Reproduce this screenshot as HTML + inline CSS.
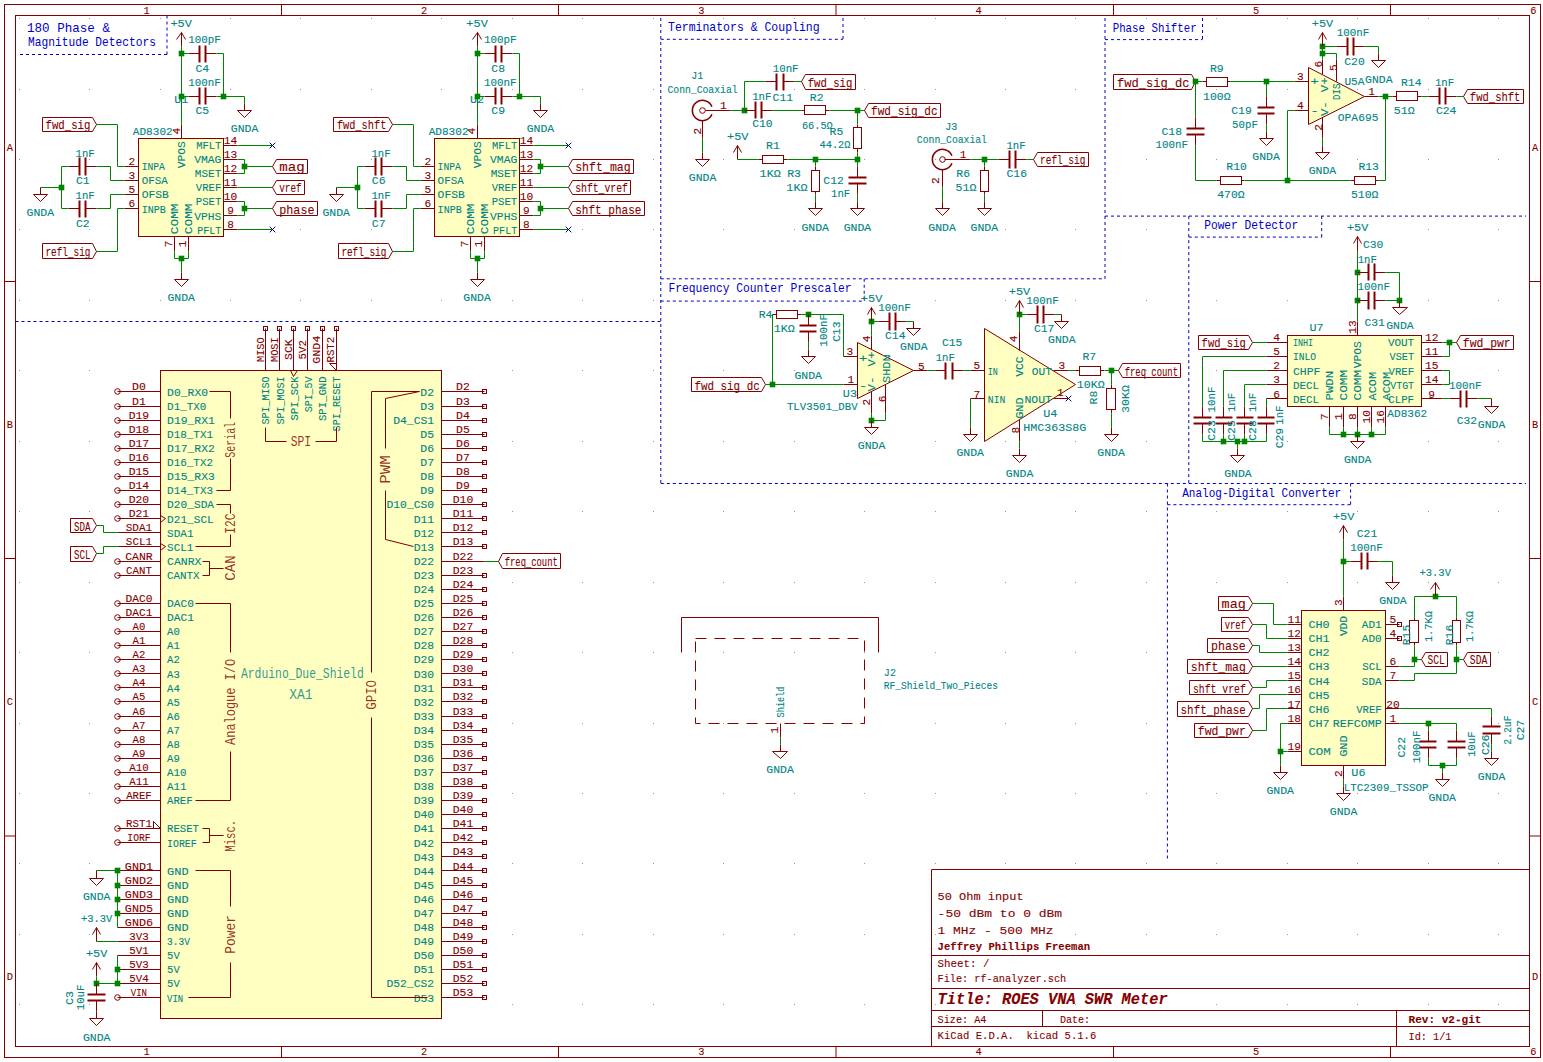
<!DOCTYPE html>
<html><head><meta charset="utf-8"><style>
html,body{margin:0;padding:0;background:#fff;overflow:hidden}
svg{display:block}
text{white-space:pre;font-family:"Liberation Mono";stroke-width:0.1px}
</style></head><body>
<svg width="1543" height="1062" viewBox="0 0 1543 1062">
<rect width="1543" height="1062" fill="#fff"/>
<path d="M19.0 18.0h1v1h-1zM19.0 89.0h1v1h-1zM19.0 159.0h1v1h-1zM19.0 229.0h1v1h-1zM19.0 300.0h1v1h-1zM19.0 370.0h1v1h-1zM19.0 441.0h1v1h-1zM19.0 511.0h1v1h-1zM19.0 582.0h1v1h-1zM19.0 652.0h1v1h-1zM19.0 723.0h1v1h-1zM19.0 793.0h1v1h-1zM19.0 863.0h1v1h-1zM19.0 934.0h1v1h-1zM19.0 1004.0h1v1h-1zM89.0 18.0h1v1h-1zM89.0 89.0h1v1h-1zM89.0 159.0h1v1h-1zM89.0 229.0h1v1h-1zM89.0 300.0h1v1h-1zM89.0 370.0h1v1h-1zM89.0 441.0h1v1h-1zM89.0 511.0h1v1h-1zM89.0 582.0h1v1h-1zM89.0 652.0h1v1h-1zM89.0 723.0h1v1h-1zM89.0 793.0h1v1h-1zM89.0 863.0h1v1h-1zM89.0 934.0h1v1h-1zM89.0 1004.0h1v1h-1zM160.0 18.0h1v1h-1zM160.0 89.0h1v1h-1zM160.0 159.0h1v1h-1zM160.0 229.0h1v1h-1zM160.0 300.0h1v1h-1zM160.0 370.0h1v1h-1zM160.0 441.0h1v1h-1zM160.0 511.0h1v1h-1zM160.0 582.0h1v1h-1zM160.0 652.0h1v1h-1zM160.0 723.0h1v1h-1zM160.0 793.0h1v1h-1zM160.0 863.0h1v1h-1zM160.0 934.0h1v1h-1zM160.0 1004.0h1v1h-1zM230.0 18.0h1v1h-1zM230.0 89.0h1v1h-1zM230.0 159.0h1v1h-1zM230.0 229.0h1v1h-1zM230.0 300.0h1v1h-1zM230.0 370.0h1v1h-1zM230.0 441.0h1v1h-1zM230.0 511.0h1v1h-1zM230.0 582.0h1v1h-1zM230.0 652.0h1v1h-1zM230.0 723.0h1v1h-1zM230.0 793.0h1v1h-1zM230.0 863.0h1v1h-1zM230.0 934.0h1v1h-1zM230.0 1004.0h1v1h-1zM300.0 18.0h1v1h-1zM300.0 89.0h1v1h-1zM300.0 159.0h1v1h-1zM300.0 229.0h1v1h-1zM300.0 300.0h1v1h-1zM300.0 370.0h1v1h-1zM300.0 441.0h1v1h-1zM300.0 511.0h1v1h-1zM300.0 582.0h1v1h-1zM300.0 652.0h1v1h-1zM300.0 723.0h1v1h-1zM300.0 793.0h1v1h-1zM300.0 863.0h1v1h-1zM300.0 934.0h1v1h-1zM300.0 1004.0h1v1h-1zM371.0 18.0h1v1h-1zM371.0 89.0h1v1h-1zM371.0 159.0h1v1h-1zM371.0 229.0h1v1h-1zM371.0 300.0h1v1h-1zM371.0 370.0h1v1h-1zM371.0 441.0h1v1h-1zM371.0 511.0h1v1h-1zM371.0 582.0h1v1h-1zM371.0 652.0h1v1h-1zM371.0 723.0h1v1h-1zM371.0 793.0h1v1h-1zM371.0 863.0h1v1h-1zM371.0 934.0h1v1h-1zM371.0 1004.0h1v1h-1zM441.0 18.0h1v1h-1zM441.0 89.0h1v1h-1zM441.0 159.0h1v1h-1zM441.0 229.0h1v1h-1zM441.0 300.0h1v1h-1zM441.0 370.0h1v1h-1zM441.0 441.0h1v1h-1zM441.0 511.0h1v1h-1zM441.0 582.0h1v1h-1zM441.0 652.0h1v1h-1zM441.0 723.0h1v1h-1zM441.0 793.0h1v1h-1zM441.0 863.0h1v1h-1zM441.0 934.0h1v1h-1zM441.0 1004.0h1v1h-1zM512.0 18.0h1v1h-1zM512.0 89.0h1v1h-1zM512.0 159.0h1v1h-1zM512.0 229.0h1v1h-1zM512.0 300.0h1v1h-1zM512.0 370.0h1v1h-1zM512.0 441.0h1v1h-1zM512.0 511.0h1v1h-1zM512.0 582.0h1v1h-1zM512.0 652.0h1v1h-1zM512.0 723.0h1v1h-1zM512.0 793.0h1v1h-1zM512.0 863.0h1v1h-1zM512.0 934.0h1v1h-1zM512.0 1004.0h1v1h-1zM582.0 18.0h1v1h-1zM582.0 89.0h1v1h-1zM582.0 159.0h1v1h-1zM582.0 229.0h1v1h-1zM582.0 300.0h1v1h-1zM582.0 370.0h1v1h-1zM582.0 441.0h1v1h-1zM582.0 511.0h1v1h-1zM582.0 582.0h1v1h-1zM582.0 652.0h1v1h-1zM582.0 723.0h1v1h-1zM582.0 793.0h1v1h-1zM582.0 863.0h1v1h-1zM582.0 934.0h1v1h-1zM582.0 1004.0h1v1h-1zM653.0 18.0h1v1h-1zM653.0 89.0h1v1h-1zM653.0 159.0h1v1h-1zM653.0 229.0h1v1h-1zM653.0 300.0h1v1h-1zM653.0 370.0h1v1h-1zM653.0 441.0h1v1h-1zM653.0 511.0h1v1h-1zM653.0 582.0h1v1h-1zM653.0 652.0h1v1h-1zM653.0 723.0h1v1h-1zM653.0 793.0h1v1h-1zM653.0 863.0h1v1h-1zM653.0 934.0h1v1h-1zM653.0 1004.0h1v1h-1zM723.0 18.0h1v1h-1zM723.0 89.0h1v1h-1zM723.0 159.0h1v1h-1zM723.0 229.0h1v1h-1zM723.0 300.0h1v1h-1zM723.0 370.0h1v1h-1zM723.0 441.0h1v1h-1zM723.0 511.0h1v1h-1zM723.0 582.0h1v1h-1zM723.0 652.0h1v1h-1zM723.0 723.0h1v1h-1zM723.0 793.0h1v1h-1zM723.0 863.0h1v1h-1zM723.0 934.0h1v1h-1zM723.0 1004.0h1v1h-1zM794.0 18.0h1v1h-1zM794.0 89.0h1v1h-1zM794.0 159.0h1v1h-1zM794.0 229.0h1v1h-1zM794.0 300.0h1v1h-1zM794.0 370.0h1v1h-1zM794.0 441.0h1v1h-1zM794.0 511.0h1v1h-1zM794.0 582.0h1v1h-1zM794.0 652.0h1v1h-1zM794.0 723.0h1v1h-1zM794.0 793.0h1v1h-1zM794.0 863.0h1v1h-1zM794.0 934.0h1v1h-1zM794.0 1004.0h1v1h-1zM864.0 18.0h1v1h-1zM864.0 89.0h1v1h-1zM864.0 159.0h1v1h-1zM864.0 229.0h1v1h-1zM864.0 300.0h1v1h-1zM864.0 370.0h1v1h-1zM864.0 441.0h1v1h-1zM864.0 511.0h1v1h-1zM864.0 582.0h1v1h-1zM864.0 652.0h1v1h-1zM864.0 723.0h1v1h-1zM864.0 793.0h1v1h-1zM864.0 863.0h1v1h-1zM864.0 934.0h1v1h-1zM864.0 1004.0h1v1h-1zM935.0 18.0h1v1h-1zM935.0 89.0h1v1h-1zM935.0 159.0h1v1h-1zM935.0 229.0h1v1h-1zM935.0 300.0h1v1h-1zM935.0 370.0h1v1h-1zM935.0 441.0h1v1h-1zM935.0 511.0h1v1h-1zM935.0 582.0h1v1h-1zM935.0 652.0h1v1h-1zM935.0 723.0h1v1h-1zM935.0 793.0h1v1h-1zM935.0 863.0h1v1h-1zM935.0 934.0h1v1h-1zM935.0 1004.0h1v1h-1zM1005.0 18.0h1v1h-1zM1005.0 89.0h1v1h-1zM1005.0 159.0h1v1h-1zM1005.0 229.0h1v1h-1zM1005.0 300.0h1v1h-1zM1005.0 370.0h1v1h-1zM1005.0 441.0h1v1h-1zM1005.0 511.0h1v1h-1zM1005.0 582.0h1v1h-1zM1005.0 652.0h1v1h-1zM1005.0 723.0h1v1h-1zM1005.0 793.0h1v1h-1zM1005.0 863.0h1v1h-1zM1005.0 934.0h1v1h-1zM1005.0 1004.0h1v1h-1zM1075.0 18.0h1v1h-1zM1075.0 89.0h1v1h-1zM1075.0 159.0h1v1h-1zM1075.0 229.0h1v1h-1zM1075.0 300.0h1v1h-1zM1075.0 370.0h1v1h-1zM1075.0 441.0h1v1h-1zM1075.0 511.0h1v1h-1zM1075.0 582.0h1v1h-1zM1075.0 652.0h1v1h-1zM1075.0 723.0h1v1h-1zM1075.0 793.0h1v1h-1zM1075.0 863.0h1v1h-1zM1075.0 934.0h1v1h-1zM1075.0 1004.0h1v1h-1zM1146.0 18.0h1v1h-1zM1146.0 89.0h1v1h-1zM1146.0 159.0h1v1h-1zM1146.0 229.0h1v1h-1zM1146.0 300.0h1v1h-1zM1146.0 370.0h1v1h-1zM1146.0 441.0h1v1h-1zM1146.0 511.0h1v1h-1zM1146.0 582.0h1v1h-1zM1146.0 652.0h1v1h-1zM1146.0 723.0h1v1h-1zM1146.0 793.0h1v1h-1zM1146.0 863.0h1v1h-1zM1146.0 934.0h1v1h-1zM1146.0 1004.0h1v1h-1zM1216.0 18.0h1v1h-1zM1216.0 89.0h1v1h-1zM1216.0 159.0h1v1h-1zM1216.0 229.0h1v1h-1zM1216.0 300.0h1v1h-1zM1216.0 370.0h1v1h-1zM1216.0 441.0h1v1h-1zM1216.0 511.0h1v1h-1zM1216.0 582.0h1v1h-1zM1216.0 652.0h1v1h-1zM1216.0 723.0h1v1h-1zM1216.0 793.0h1v1h-1zM1216.0 863.0h1v1h-1zM1216.0 934.0h1v1h-1zM1216.0 1004.0h1v1h-1zM1287.0 18.0h1v1h-1zM1287.0 89.0h1v1h-1zM1287.0 159.0h1v1h-1zM1287.0 229.0h1v1h-1zM1287.0 300.0h1v1h-1zM1287.0 370.0h1v1h-1zM1287.0 441.0h1v1h-1zM1287.0 511.0h1v1h-1zM1287.0 582.0h1v1h-1zM1287.0 652.0h1v1h-1zM1287.0 723.0h1v1h-1zM1287.0 793.0h1v1h-1zM1287.0 863.0h1v1h-1zM1287.0 934.0h1v1h-1zM1287.0 1004.0h1v1h-1zM1357.0 18.0h1v1h-1zM1357.0 89.0h1v1h-1zM1357.0 159.0h1v1h-1zM1357.0 229.0h1v1h-1zM1357.0 300.0h1v1h-1zM1357.0 370.0h1v1h-1zM1357.0 441.0h1v1h-1zM1357.0 511.0h1v1h-1zM1357.0 582.0h1v1h-1zM1357.0 652.0h1v1h-1zM1357.0 723.0h1v1h-1zM1357.0 793.0h1v1h-1zM1357.0 863.0h1v1h-1zM1357.0 934.0h1v1h-1zM1357.0 1004.0h1v1h-1zM1428.0 18.0h1v1h-1zM1428.0 89.0h1v1h-1zM1428.0 159.0h1v1h-1zM1428.0 229.0h1v1h-1zM1428.0 300.0h1v1h-1zM1428.0 370.0h1v1h-1zM1428.0 441.0h1v1h-1zM1428.0 511.0h1v1h-1zM1428.0 582.0h1v1h-1zM1428.0 652.0h1v1h-1zM1428.0 723.0h1v1h-1zM1428.0 793.0h1v1h-1zM1428.0 863.0h1v1h-1zM1428.0 934.0h1v1h-1zM1428.0 1004.0h1v1h-1zM1498.0 18.0h1v1h-1zM1498.0 89.0h1v1h-1zM1498.0 159.0h1v1h-1zM1498.0 229.0h1v1h-1zM1498.0 300.0h1v1h-1zM1498.0 370.0h1v1h-1zM1498.0 441.0h1v1h-1zM1498.0 511.0h1v1h-1zM1498.0 582.0h1v1h-1zM1498.0 652.0h1v1h-1zM1498.0 723.0h1v1h-1zM1498.0 793.0h1v1h-1zM1498.0 863.0h1v1h-1zM1498.0 934.0h1v1h-1zM1498.0 1004.0h1v1h-1z" fill="#999999"/>
<rect x="4.5" y="4.5" width="1536" height="1053" fill="none" stroke="#840000" stroke-width="1"/>
<rect x="15.5" y="15.5" width="1514" height="1031" fill="none" stroke="#840000" stroke-width="1"/>
<line x1="281.5" y1="4.5" x2="281.5" y2="15.5" stroke="#840000" stroke-width="1.0"/>
<line x1="281.5" y1="1046.5" x2="281.5" y2="1057.5" stroke="#840000" stroke-width="1.0"/>
<line x1="558.5" y1="4.5" x2="558.5" y2="15.5" stroke="#840000" stroke-width="1.0"/>
<line x1="558.5" y1="1046.5" x2="558.5" y2="1057.5" stroke="#840000" stroke-width="1.0"/>
<line x1="836" y1="4.5" x2="836" y2="15.5" stroke="#840000" stroke-width="1.0"/>
<line x1="836" y1="1046.5" x2="836" y2="1057.5" stroke="#840000" stroke-width="1.0"/>
<line x1="1113.5" y1="4.5" x2="1113.5" y2="15.5" stroke="#840000" stroke-width="1.0"/>
<line x1="1113.5" y1="1046.5" x2="1113.5" y2="1057.5" stroke="#840000" stroke-width="1.0"/>
<line x1="1390.5" y1="4.5" x2="1390.5" y2="15.5" stroke="#840000" stroke-width="1.0"/>
<line x1="1390.5" y1="1046.5" x2="1390.5" y2="1057.5" stroke="#840000" stroke-width="1.0"/>
<line x1="4.5" y1="281.5" x2="15.5" y2="281.5" stroke="#840000" stroke-width="1.0"/>
<line x1="1529.5" y1="281.5" x2="1540.5" y2="281.5" stroke="#840000" stroke-width="1.0"/>
<line x1="4.5" y1="558.5" x2="15.5" y2="558.5" stroke="#840000" stroke-width="1.0"/>
<line x1="1529.5" y1="558.5" x2="1540.5" y2="558.5" stroke="#840000" stroke-width="1.0"/>
<line x1="4.5" y1="836" x2="15.5" y2="836" stroke="#840000" stroke-width="1.0"/>
<line x1="1529.5" y1="836" x2="1540.5" y2="836" stroke="#840000" stroke-width="1.0"/>
<text transform="translate(146.7 13.6) scale(0.9 1)" fill="#840000" stroke="#840000" font-size="11.5" text-anchor="middle">1</text>
<text transform="translate(146.7 1055.2) scale(0.9 1)" fill="#840000" stroke="#840000" font-size="11.5" text-anchor="middle">1</text>
<text transform="translate(424 13.6) scale(0.9 1)" fill="#840000" stroke="#840000" font-size="11.5" text-anchor="middle">2</text>
<text transform="translate(424 1055.2) scale(0.9 1)" fill="#840000" stroke="#840000" font-size="11.5" text-anchor="middle">2</text>
<text transform="translate(701.4 13.6) scale(0.9 1)" fill="#840000" stroke="#840000" font-size="11.5" text-anchor="middle">3</text>
<text transform="translate(701.4 1055.2) scale(0.9 1)" fill="#840000" stroke="#840000" font-size="11.5" text-anchor="middle">3</text>
<text transform="translate(978.7 13.6) scale(0.9 1)" fill="#840000" stroke="#840000" font-size="11.5" text-anchor="middle">4</text>
<text transform="translate(978.7 1055.2) scale(0.9 1)" fill="#840000" stroke="#840000" font-size="11.5" text-anchor="middle">4</text>
<text transform="translate(1256 13.6) scale(0.9 1)" fill="#840000" stroke="#840000" font-size="11.5" text-anchor="middle">5</text>
<text transform="translate(1256 1055.2) scale(0.9 1)" fill="#840000" stroke="#840000" font-size="11.5" text-anchor="middle">5</text>
<text transform="translate(1533.4 13.6) scale(0.9 1)" fill="#840000" stroke="#840000" font-size="11.5" text-anchor="middle">6</text>
<text transform="translate(1533.4 1055.2) scale(0.9 1)" fill="#840000" stroke="#840000" font-size="11.5" text-anchor="middle">6</text>
<text transform="translate(9.8 150.7) scale(0.9 1)" fill="#840000" stroke="#840000" font-size="11.5" text-anchor="middle">A</text>
<text transform="translate(1535 150.7) scale(0.9 1)" fill="#840000" stroke="#840000" font-size="11.5" text-anchor="middle">A</text>
<text transform="translate(9.8 428) scale(0.9 1)" fill="#840000" stroke="#840000" font-size="11.5" text-anchor="middle">B</text>
<text transform="translate(1535 428) scale(0.9 1)" fill="#840000" stroke="#840000" font-size="11.5" text-anchor="middle">B</text>
<text transform="translate(9.8 705.4) scale(0.9 1)" fill="#840000" stroke="#840000" font-size="11.5" text-anchor="middle">C</text>
<text transform="translate(1535 705.4) scale(0.9 1)" fill="#840000" stroke="#840000" font-size="11.5" text-anchor="middle">C</text>
<text transform="translate(9.8 980) scale(0.9 1)" fill="#840000" stroke="#840000" font-size="11.5" text-anchor="middle">D</text>
<text transform="translate(1535 980) scale(0.9 1)" fill="#840000" stroke="#840000" font-size="11.5" text-anchor="middle">D</text>
<line x1="20" y1="54.5" x2="167" y2="54.5" stroke="#0000c8" stroke-width="1" stroke-dasharray="3 3"/>
<line x1="167" y1="15.5" x2="167" y2="54.5" stroke="#0000c8" stroke-width="1" stroke-dasharray="3 3"/>
<line x1="15.5" y1="321.5" x2="660.8" y2="321.5" stroke="#0000c8" stroke-width="1" stroke-dasharray="3 3"/>
<line x1="660.8" y1="18" x2="660.8" y2="483.5" stroke="#0000c8" stroke-width="1" stroke-dasharray="3 3"/>
<line x1="660.8" y1="39.3" x2="843" y2="39.3" stroke="#0000c8" stroke-width="1" stroke-dasharray="3 3"/>
<line x1="843" y1="18" x2="843" y2="39.3" stroke="#0000c8" stroke-width="1" stroke-dasharray="3 3"/>
<line x1="1105" y1="18" x2="1105" y2="278.8" stroke="#0000c8" stroke-width="1" stroke-dasharray="3 3"/>
<line x1="660.8" y1="278.8" x2="1105" y2="278.8" stroke="#0000c8" stroke-width="1" stroke-dasharray="3 3"/>
<line x1="660.8" y1="301.1" x2="864.2" y2="301.1" stroke="#0000c8" stroke-width="1" stroke-dasharray="3 3"/>
<line x1="864.2" y1="278.8" x2="864.2" y2="301.1" stroke="#0000c8" stroke-width="1" stroke-dasharray="3 3"/>
<line x1="1105" y1="39.6" x2="1202.5" y2="39.6" stroke="#0000c8" stroke-width="1" stroke-dasharray="3 3"/>
<line x1="1202.5" y1="18" x2="1202.5" y2="39.6" stroke="#0000c8" stroke-width="1" stroke-dasharray="3 3"/>
<line x1="1105" y1="216.1" x2="1526" y2="216.1" stroke="#0000c8" stroke-width="1" stroke-dasharray="3 3"/>
<line x1="1188.8" y1="237.1" x2="1321.7" y2="237.1" stroke="#0000c8" stroke-width="1" stroke-dasharray="3 3"/>
<line x1="1321.7" y1="216.1" x2="1321.7" y2="237.1" stroke="#0000c8" stroke-width="1" stroke-dasharray="3 3"/>
<line x1="1188.8" y1="216.1" x2="1188.8" y2="483.5" stroke="#0000c8" stroke-width="1" stroke-dasharray="3 3"/>
<line x1="660.8" y1="483.5" x2="1526" y2="483.5" stroke="#0000c8" stroke-width="1" stroke-dasharray="3 3"/>
<line x1="1167.4" y1="483.5" x2="1167.4" y2="861.6" stroke="#0000c8" stroke-width="1" stroke-dasharray="3 3"/>
<line x1="1167.4" y1="504.7" x2="1350.6" y2="504.7" stroke="#0000c8" stroke-width="1" stroke-dasharray="3 3"/>
<line x1="1350.6" y1="483.5" x2="1350.6" y2="504.7" stroke="#0000c8" stroke-width="1" stroke-dasharray="3 3"/>
<text transform="translate(27 32)" fill="#0000c8" font-size="13.0" textLength="83" lengthAdjust="spacingAndGlyphs">180 Phase &amp;</text>
<text transform="translate(28 45.6)" fill="#0000c8" font-size="13.0" textLength="128" lengthAdjust="spacingAndGlyphs">Magnitude Detectors</text>
<text transform="translate(668 31.2)" fill="#0000c8" font-size="13.0" textLength="151.6" lengthAdjust="spacingAndGlyphs">Terminators &amp; Coupling</text>
<text transform="translate(1112.7 31.9)" fill="#0000c8" font-size="13.0" textLength="84" lengthAdjust="spacingAndGlyphs">Phase Shifter</text>
<text transform="translate(668.5 291.5)" fill="#0000c8" font-size="13.0" textLength="183" lengthAdjust="spacingAndGlyphs">Frequency Counter Prescaler</text>
<text transform="translate(1204.2 229.2)" fill="#0000c8" font-size="13.0" textLength="94" lengthAdjust="spacingAndGlyphs">Power Detector</text>
<text transform="translate(1182.2 497.3)" fill="#0000c8" font-size="13.0" textLength="159" lengthAdjust="spacingAndGlyphs">Analog-Digital Converter</text>
<rect x="138.5" y="138.5" width="85.0" height="98.0" fill="#ffffc2" stroke="#840000" stroke-width="1.0"/>
<line x1="124.5" y1="166.5" x2="138.5" y2="166.5" stroke="#840000" stroke-width="1.0"/>
<text transform="translate(131.87 165.05)" fill="#840000" stroke="#840000" font-size="11.44" text-anchor="middle" textLength="6.71" lengthAdjust="spacingAndGlyphs">2</text>
<text transform="translate(141.73 170.26)" fill="#008484" stroke="#008484" font-size="11.44" textLength="23.15" lengthAdjust="spacingAndGlyphs">INPA</text>
<line x1="124.5" y1="180.5" x2="138.5" y2="180.5" stroke="#840000" stroke-width="1.0"/>
<text transform="translate(131.87 179.14)" fill="#840000" stroke="#840000" font-size="11.44" text-anchor="middle" textLength="6.71" lengthAdjust="spacingAndGlyphs">3</text>
<text transform="translate(141.73 184.35)" fill="#008484" stroke="#008484" font-size="11.44" textLength="26.17" lengthAdjust="spacingAndGlyphs">OFSA</text>
<line x1="124.5" y1="194.5" x2="138.5" y2="194.5" stroke="#840000" stroke-width="1.0"/>
<text transform="translate(131.87 193.23)" fill="#840000" stroke="#840000" font-size="11.44" text-anchor="middle" textLength="6.71" lengthAdjust="spacingAndGlyphs">5</text>
<text transform="translate(141.73 198.44)" fill="#008484" stroke="#008484" font-size="11.44" textLength="27.17" lengthAdjust="spacingAndGlyphs">OFSB</text>
<line x1="124.5" y1="208.5" x2="138.5" y2="208.5" stroke="#840000" stroke-width="1.0"/>
<text transform="translate(131.87 207.32)" fill="#840000" stroke="#840000" font-size="11.44" text-anchor="middle" textLength="6.71" lengthAdjust="spacingAndGlyphs">6</text>
<text transform="translate(141.73 212.53)" fill="#008484" stroke="#008484" font-size="11.44" textLength="24.15" lengthAdjust="spacingAndGlyphs">INPB</text>
<line x1="223.5" y1="145.5" x2="237.5" y2="145.5" stroke="#840000" stroke-width="1.0"/>
<text transform="translate(230.5 143.92)" fill="#840000" stroke="#840000" font-size="11.44" text-anchor="middle" textLength="13.42" lengthAdjust="spacingAndGlyphs">14</text>
<text transform="translate(221.34 149.13)" fill="#008484" stroke="#008484" font-size="11.44" text-anchor="end" textLength="25.16" lengthAdjust="spacingAndGlyphs">MFLT</text>
<line x1="223.5" y1="159.5" x2="237.5" y2="159.5" stroke="#840000" stroke-width="1.0"/>
<text transform="translate(230.5 158.01)" fill="#840000" stroke="#840000" font-size="11.44" text-anchor="middle" textLength="13.42" lengthAdjust="spacingAndGlyphs">13</text>
<text transform="translate(221.34 163.22)" fill="#008484" stroke="#008484" font-size="11.44" text-anchor="end" textLength="27.17" lengthAdjust="spacingAndGlyphs">VMAG</text>
<line x1="223.5" y1="173.5" x2="237.5" y2="173.5" stroke="#840000" stroke-width="1.0"/>
<text transform="translate(230.5 172.1)" fill="#840000" stroke="#840000" font-size="11.44" text-anchor="middle" textLength="13.42" lengthAdjust="spacingAndGlyphs">12</text>
<text transform="translate(221.34 177.31)" fill="#008484" stroke="#008484" font-size="11.44" text-anchor="end" textLength="26.5" lengthAdjust="spacingAndGlyphs">MSET</text>
<line x1="223.5" y1="187.5" x2="237.5" y2="187.5" stroke="#840000" stroke-width="1.0"/>
<text transform="translate(230.5 186.19)" fill="#840000" stroke="#840000" font-size="11.44" text-anchor="middle" textLength="13.42" lengthAdjust="spacingAndGlyphs">11</text>
<text transform="translate(221.34 191.4)" fill="#008484" stroke="#008484" font-size="11.44" text-anchor="end" textLength="25.5" lengthAdjust="spacingAndGlyphs">VREF</text>
<line x1="223.5" y1="201.5" x2="237.5" y2="201.5" stroke="#840000" stroke-width="1.0"/>
<text transform="translate(230.5 200.28)" fill="#840000" stroke="#840000" font-size="11.44" text-anchor="middle" textLength="13.42" lengthAdjust="spacingAndGlyphs">10</text>
<text transform="translate(221.34 205.49)" fill="#008484" stroke="#008484" font-size="11.44" text-anchor="end" textLength="25.5" lengthAdjust="spacingAndGlyphs">PSET</text>
<line x1="223.5" y1="215.5" x2="237.5" y2="215.5" stroke="#840000" stroke-width="1.0"/>
<text transform="translate(230.5 214.37)" fill="#840000" stroke="#840000" font-size="11.44" text-anchor="middle" textLength="6.71" lengthAdjust="spacingAndGlyphs">9</text>
<text transform="translate(221.34 219.58)" fill="#008484" stroke="#008484" font-size="11.44" text-anchor="end" textLength="27.17" lengthAdjust="spacingAndGlyphs">VPHS</text>
<line x1="223.5" y1="229.5" x2="237.5" y2="229.5" stroke="#840000" stroke-width="1.0"/>
<text transform="translate(230.5 228.46)" fill="#840000" stroke="#840000" font-size="11.44" text-anchor="middle" textLength="6.71" lengthAdjust="spacingAndGlyphs">8</text>
<text transform="translate(221.34 233.67)" fill="#008484" stroke="#008484" font-size="11.44" text-anchor="end" textLength="24.15" lengthAdjust="spacingAndGlyphs">PFLT</text>
<line x1="181.5" y1="124.5" x2="181.5" y2="138.5" stroke="#840000" stroke-width="1.0"/>
<text transform="translate(184.95 141.13) rotate(-90)" fill="#008484" stroke="#008484" font-size="11.44" text-anchor="end" textLength="27.17" lengthAdjust="spacingAndGlyphs">VPOS</text>
<text transform="translate(179.6 131.27) rotate(-90)" fill="#840000" stroke="#840000" font-size="11.44" text-anchor="middle" textLength="6.71" lengthAdjust="spacingAndGlyphs">4</text>
<line x1="174.5" y1="236.5" x2="174.5" y2="251.5" stroke="#840000" stroke-width="1.0"/>
<text transform="translate(177.91 234.13) rotate(-90)" fill="#008484" stroke="#008484" font-size="11.44" textLength="30.53" lengthAdjust="spacingAndGlyphs">COMM</text>
<text transform="translate(172.27 243.99) rotate(-90)" fill="#840000" stroke="#840000" font-size="11.44" text-anchor="middle" textLength="6.71" lengthAdjust="spacingAndGlyphs">7</text>
<line x1="188.5" y1="236.5" x2="188.5" y2="251.5" stroke="#840000" stroke-width="1.0"/>
<text transform="translate(192.0 234.13) rotate(-90)" fill="#008484" stroke="#008484" font-size="11.44" textLength="30.53" lengthAdjust="spacingAndGlyphs">COMM</text>
<text transform="translate(186.36 243.99) rotate(-90)" fill="#840000" stroke="#840000" font-size="11.44" text-anchor="middle" textLength="6.71" lengthAdjust="spacingAndGlyphs">1</text>
<text transform="translate(152.72 134.62)" fill="#008484" stroke="#008484" font-size="11.44" text-anchor="middle" textLength="39.92" lengthAdjust="spacingAndGlyphs">AD8302</text>
<text transform="translate(181.18 103.2)" fill="#008484" stroke="#008484" font-size="11.44" text-anchor="middle" textLength="14.09" lengthAdjust="spacingAndGlyphs">U1</text>
<polyline points="96.5,124.5 117.5,124.5 117.5,166.5 124.5,166.5" stroke="#008400" stroke-width="1.0" fill="none"/>
<polyline points="124.5,180.5 110.5,180.5 110.5,166.5 96.5,166.5" stroke="#008400" stroke-width="1.0" fill="none"/>
<line x1="68.5" y1="166.5" x2="79.5" y2="166.5" stroke="#840000" stroke-width="1.0"/>
<line x1="85.5" y1="166.5" x2="96.5" y2="166.5" stroke="#840000" stroke-width="1.0"/>
<line x1="79.5" y1="157.5" x2="79.5" y2="175.5" stroke="#840000" stroke-width="2.0"/>
<line x1="85.5" y1="157.5" x2="85.5" y2="175.5" stroke="#840000" stroke-width="2.0"/>
<text transform="translate(85.09 156.74)" fill="#008484" stroke="#008484" font-size="11.44" text-anchor="middle" textLength="19.12" lengthAdjust="spacingAndGlyphs">1nF</text>
<text transform="translate(82.84 184.49)" fill="#008484" stroke="#008484" font-size="11.44" text-anchor="middle" textLength="13.75" lengthAdjust="spacingAndGlyphs">C1</text>
<line x1="68.5" y1="208.5" x2="79.5" y2="208.5" stroke="#840000" stroke-width="1.0"/>
<line x1="85.5" y1="208.5" x2="96.5" y2="208.5" stroke="#840000" stroke-width="1.0"/>
<line x1="79.5" y1="200.5" x2="79.5" y2="217.5" stroke="#840000" stroke-width="2.0"/>
<line x1="85.5" y1="200.5" x2="85.5" y2="217.5" stroke="#840000" stroke-width="2.0"/>
<text transform="translate(85.09 199.01)" fill="#008484" stroke="#008484" font-size="11.44" text-anchor="middle" textLength="19.12" lengthAdjust="spacingAndGlyphs">1nF</text>
<text transform="translate(82.84 226.76)" fill="#008484" stroke="#008484" font-size="11.44" text-anchor="middle" textLength="13.75" lengthAdjust="spacingAndGlyphs">C2</text>
<polyline points="68.5,166.5 61.5,166.5 61.5,208.5 68.5,208.5" stroke="#008400" stroke-width="1.0" fill="none"/>
<rect x="58.7" y="184.7" width="5.6" height="5.6" fill="#008400"/>
<polyline points="61.5,187.5 40.5,187.5" stroke="#008400" stroke-width="1.0" fill="none"/>
<line x1="40.5" y1="187.5" x2="40.5" y2="194.5" stroke="#840000" stroke-width="1.0"/>
<polygon points="33.5,194.5 47.5,194.5 40.5,201.5" stroke="#840000" stroke-width="1.0" fill="none"/>
<text transform="translate(40.28 216.48)" fill="#008484" stroke="#008484" font-size="11.44" text-anchor="middle" textLength="27.51" lengthAdjust="spacingAndGlyphs">GNDA</text>
<polyline points="96.5,208.5 110.5,208.5 110.5,194.5 124.5,194.5" stroke="#008400" stroke-width="1.0" fill="none"/>
<polyline points="124.5,208.5 117.5,208.5 117.5,251.5 96.5,251.5" stroke="#008400" stroke-width="1.0" fill="none"/>
<polygon points="96.5,124.5 92.5,117.5 42.5,117.5 42.5,131.5 92.5,131.5" stroke="#840000" stroke-width="1.0" fill="none"/>
<text transform="translate(45.5 129.02)" fill="#840000" stroke="#840000" font-size="12.4" textLength="44.95" lengthAdjust="spacingAndGlyphs">fwd_sig</text>
<polygon points="96.5,251.5 92.5,243.5 42.5,243.5 42.5,258.5 92.5,258.5" stroke="#840000" stroke-width="1.0" fill="none"/>
<text transform="translate(45.5 255.83)" fill="#840000" stroke="#840000" font-size="12.4" textLength="44.95" lengthAdjust="spacingAndGlyphs">refl_sig</text>
<polyline points="237.5,145.5 272.5,145.5" stroke="#008400" stroke-width="1.0" fill="none"/>
<path d="M269.68,142.68L275.32,148.32M275.32,142.68L269.68,148.32" stroke="#000084" stroke-width="1"/>
<polyline points="237.5,159.5 244.5,159.5 244.5,173.5 237.5,173.5" stroke="#008400" stroke-width="1.0" fill="none"/>
<rect x="241.7" y="163.7" width="5.6" height="5.6" fill="#008400"/>
<polyline points="244.5,166.5 272.5,166.5" stroke="#008400" stroke-width="1.0" fill="none"/>
<polygon points="272.5,166.5 276.5,159.5 307.5,159.5 307.5,173.5 276.5,173.5" stroke="#840000" stroke-width="1.0" fill="none"/>
<text transform="translate(279.25 171.29)" fill="#840000" stroke="#840000" font-size="12.4" textLength="25.5" lengthAdjust="spacingAndGlyphs">mag</text>
<polyline points="237.5,187.5 272.5,187.5" stroke="#008400" stroke-width="1.0" fill="none"/>
<polygon points="272.5,187.5 276.5,180.5 304.5,180.5 304.5,194.5 276.5,194.5" stroke="#840000" stroke-width="1.0" fill="none"/>
<text transform="translate(279.25 192.42)" fill="#840000" stroke="#840000" font-size="12.4" textLength="22.4" lengthAdjust="spacingAndGlyphs">vref</text>
<polyline points="237.5,201.5 244.5,201.5 244.5,215.5 237.5,215.5" stroke="#008400" stroke-width="1.0" fill="none"/>
<rect x="241.7" y="205.7" width="5.6" height="5.6" fill="#008400"/>
<polyline points="244.5,208.5 272.5,208.5" stroke="#008400" stroke-width="1.0" fill="none"/>
<polygon points="272.5,208.5 276.5,201.5 317.5,201.5 317.5,215.5 276.5,215.5" stroke="#840000" stroke-width="1.0" fill="none"/>
<text transform="translate(279.25 213.56)" fill="#840000" stroke="#840000" font-size="12.4" textLength="35.23" lengthAdjust="spacingAndGlyphs">phase</text>
<polyline points="237.5,229.5 272.5,229.5" stroke="#008400" stroke-width="1.0" fill="none"/>
<path d="M269.68,226.68L275.32,232.32M275.32,226.68L269.68,232.32" stroke="#000084" stroke-width="1"/>
<polyline points="174.5,251.5 174.5,258.5 188.5,258.5 188.5,251.5" stroke="#008400" stroke-width="1.0" fill="none"/>
<rect x="178.7" y="255.7" width="5.6" height="5.6" fill="#008400"/>
<polyline points="181.5,258.5 181.5,272.5" stroke="#008400" stroke-width="1.0" fill="none"/>
<line x1="181.5" y1="272.5" x2="181.5" y2="279.5" stroke="#840000" stroke-width="1.0"/>
<polygon points="174.5,279.5 188.5,279.5 181.5,286.5" stroke="#840000" stroke-width="1.0" fill="none"/>
<text transform="translate(181.18 301.02)" fill="#008484" stroke="#008484" font-size="11.44" text-anchor="middle" textLength="27.51" lengthAdjust="spacingAndGlyphs">GNDA</text>
<polyline points="181.5,124.5 181.5,46.5" stroke="#008400" stroke-width="1.0" fill="none"/>
<line x1="181.5" y1="46.5" x2="181.5" y2="32.5" stroke="#840000" stroke-width="1.0"/>
<polyline points="176.5,39.5 181.5,32.5 185.5,39.5" stroke="#840000" stroke-width="1.0" fill="none"/>
<text transform="translate(181.18 26.83)" fill="#008484" stroke="#008484" font-size="11.44" text-anchor="middle" textLength="21.47" lengthAdjust="spacingAndGlyphs">+5V</text>
<rect x="178.7" y="50.7" width="5.6" height="5.6" fill="#008400"/>
<rect x="178.7" y="93.7" width="5.6" height="5.6" fill="#008400"/>
<polyline points="181.5,53.5 188.5,53.5" stroke="#008400" stroke-width="1.0" fill="none"/>
<line x1="188.5" y1="53.5" x2="199.5" y2="53.5" stroke="#840000" stroke-width="1.0"/>
<line x1="205.5" y1="53.5" x2="216.5" y2="53.5" stroke="#840000" stroke-width="1.0"/>
<line x1="199.5" y1="45.5" x2="199.5" y2="62.5" stroke="#840000" stroke-width="2.0"/>
<line x1="205.5" y1="45.5" x2="205.5" y2="62.5" stroke="#840000" stroke-width="2.0"/>
<text transform="translate(204.43 43.45)" fill="#008484" stroke="#008484" font-size="11.44" text-anchor="middle" textLength="32.54" lengthAdjust="spacingAndGlyphs">100pF</text>
<text transform="translate(202.32 71.92)" fill="#008484" stroke="#008484" font-size="11.44" text-anchor="middle" textLength="13.75" lengthAdjust="spacingAndGlyphs">C4</text>
<polyline points="181.5,96.5 188.5,96.5" stroke="#008400" stroke-width="1.0" fill="none"/>
<line x1="188.5" y1="96.5" x2="199.5" y2="96.5" stroke="#840000" stroke-width="1.0"/>
<line x1="205.5" y1="96.5" x2="216.5" y2="96.5" stroke="#840000" stroke-width="1.0"/>
<line x1="199.5" y1="87.5" x2="199.5" y2="104.5" stroke="#840000" stroke-width="2.0"/>
<line x1="205.5" y1="87.5" x2="205.5" y2="104.5" stroke="#840000" stroke-width="2.0"/>
<text transform="translate(204.43 85.72)" fill="#008484" stroke="#008484" font-size="11.44" text-anchor="middle" textLength="32.54" lengthAdjust="spacingAndGlyphs">100nF</text>
<text transform="translate(202.32 113.9)" fill="#008484" stroke="#008484" font-size="11.44" text-anchor="middle" textLength="13.75" lengthAdjust="spacingAndGlyphs">C5</text>
<polyline points="216.5,53.5 223.5,53.5 223.5,96.5" stroke="#008400" stroke-width="1.0" fill="none"/>
<rect x="220.7" y="93.7" width="5.6" height="5.6" fill="#008400"/>
<polyline points="216.5,96.5 244.5,96.5 244.5,103.5" stroke="#008400" stroke-width="1.0" fill="none"/>
<line x1="244.5" y1="103.5" x2="244.5" y2="110.5" stroke="#840000" stroke-width="1.0"/>
<polygon points="237.5,110.5 251.5,110.5 244.5,117.5" stroke="#840000" stroke-width="1.0" fill="none"/>
<text transform="translate(244.59 131.94)" fill="#008484" stroke="#008484" font-size="11.44" text-anchor="middle" textLength="27.51" lengthAdjust="spacingAndGlyphs">GNDA</text>
<rect x="434.5" y="138.5" width="85.0" height="98.0" fill="#ffffc2" stroke="#840000" stroke-width="1.0"/>
<line x1="420.5" y1="166.5" x2="434.5" y2="166.5" stroke="#840000" stroke-width="1.0"/>
<text transform="translate(427.76 165.05)" fill="#840000" stroke="#840000" font-size="11.44" text-anchor="middle" textLength="6.71" lengthAdjust="spacingAndGlyphs">2</text>
<text transform="translate(437.62 170.26)" fill="#008484" stroke="#008484" font-size="11.44" textLength="23.15" lengthAdjust="spacingAndGlyphs">INPA</text>
<line x1="420.5" y1="180.5" x2="434.5" y2="180.5" stroke="#840000" stroke-width="1.0"/>
<text transform="translate(427.76 179.14)" fill="#840000" stroke="#840000" font-size="11.44" text-anchor="middle" textLength="6.71" lengthAdjust="spacingAndGlyphs">3</text>
<text transform="translate(437.62 184.35)" fill="#008484" stroke="#008484" font-size="11.44" textLength="26.17" lengthAdjust="spacingAndGlyphs">OFSA</text>
<line x1="420.5" y1="194.5" x2="434.5" y2="194.5" stroke="#840000" stroke-width="1.0"/>
<text transform="translate(427.76 193.23)" fill="#840000" stroke="#840000" font-size="11.44" text-anchor="middle" textLength="6.71" lengthAdjust="spacingAndGlyphs">5</text>
<text transform="translate(437.62 198.44)" fill="#008484" stroke="#008484" font-size="11.44" textLength="27.17" lengthAdjust="spacingAndGlyphs">OFSB</text>
<line x1="420.5" y1="208.5" x2="434.5" y2="208.5" stroke="#840000" stroke-width="1.0"/>
<text transform="translate(427.76 207.32)" fill="#840000" stroke="#840000" font-size="11.44" text-anchor="middle" textLength="6.71" lengthAdjust="spacingAndGlyphs">6</text>
<text transform="translate(437.62 212.53)" fill="#008484" stroke="#008484" font-size="11.44" textLength="24.15" lengthAdjust="spacingAndGlyphs">INPB</text>
<line x1="519.5" y1="145.5" x2="533.5" y2="145.5" stroke="#840000" stroke-width="1.0"/>
<text transform="translate(526.39 143.92)" fill="#840000" stroke="#840000" font-size="11.44" text-anchor="middle" textLength="13.42" lengthAdjust="spacingAndGlyphs">14</text>
<text transform="translate(517.23 149.13)" fill="#008484" stroke="#008484" font-size="11.44" text-anchor="end" textLength="25.16" lengthAdjust="spacingAndGlyphs">MFLT</text>
<line x1="519.5" y1="159.5" x2="533.5" y2="159.5" stroke="#840000" stroke-width="1.0"/>
<text transform="translate(526.39 158.01)" fill="#840000" stroke="#840000" font-size="11.44" text-anchor="middle" textLength="13.42" lengthAdjust="spacingAndGlyphs">13</text>
<text transform="translate(517.23 163.22)" fill="#008484" stroke="#008484" font-size="11.44" text-anchor="end" textLength="27.17" lengthAdjust="spacingAndGlyphs">VMAG</text>
<line x1="519.5" y1="173.5" x2="533.5" y2="173.5" stroke="#840000" stroke-width="1.0"/>
<text transform="translate(526.39 172.1)" fill="#840000" stroke="#840000" font-size="11.44" text-anchor="middle" textLength="13.42" lengthAdjust="spacingAndGlyphs">12</text>
<text transform="translate(517.23 177.31)" fill="#008484" stroke="#008484" font-size="11.44" text-anchor="end" textLength="26.5" lengthAdjust="spacingAndGlyphs">MSET</text>
<line x1="519.5" y1="187.5" x2="533.5" y2="187.5" stroke="#840000" stroke-width="1.0"/>
<text transform="translate(526.39 186.19)" fill="#840000" stroke="#840000" font-size="11.44" text-anchor="middle" textLength="13.42" lengthAdjust="spacingAndGlyphs">11</text>
<text transform="translate(517.23 191.4)" fill="#008484" stroke="#008484" font-size="11.44" text-anchor="end" textLength="25.5" lengthAdjust="spacingAndGlyphs">VREF</text>
<line x1="519.5" y1="201.5" x2="533.5" y2="201.5" stroke="#840000" stroke-width="1.0"/>
<text transform="translate(526.39 200.28)" fill="#840000" stroke="#840000" font-size="11.44" text-anchor="middle" textLength="13.42" lengthAdjust="spacingAndGlyphs">10</text>
<text transform="translate(517.23 205.49)" fill="#008484" stroke="#008484" font-size="11.44" text-anchor="end" textLength="25.5" lengthAdjust="spacingAndGlyphs">PSET</text>
<line x1="519.5" y1="215.5" x2="533.5" y2="215.5" stroke="#840000" stroke-width="1.0"/>
<text transform="translate(526.39 214.37)" fill="#840000" stroke="#840000" font-size="11.44" text-anchor="middle" textLength="6.71" lengthAdjust="spacingAndGlyphs">9</text>
<text transform="translate(517.23 219.58)" fill="#008484" stroke="#008484" font-size="11.44" text-anchor="end" textLength="27.17" lengthAdjust="spacingAndGlyphs">VPHS</text>
<line x1="519.5" y1="229.5" x2="533.5" y2="229.5" stroke="#840000" stroke-width="1.0"/>
<text transform="translate(526.39 228.46)" fill="#840000" stroke="#840000" font-size="11.44" text-anchor="middle" textLength="6.71" lengthAdjust="spacingAndGlyphs">8</text>
<text transform="translate(517.23 233.67)" fill="#008484" stroke="#008484" font-size="11.44" text-anchor="end" textLength="24.15" lengthAdjust="spacingAndGlyphs">PFLT</text>
<line x1="477.5" y1="124.5" x2="477.5" y2="138.5" stroke="#840000" stroke-width="1.0"/>
<text transform="translate(480.84 141.13) rotate(-90)" fill="#008484" stroke="#008484" font-size="11.44" text-anchor="end" textLength="27.17" lengthAdjust="spacingAndGlyphs">VPOS</text>
<text transform="translate(475.49 131.27) rotate(-90)" fill="#840000" stroke="#840000" font-size="11.44" text-anchor="middle" textLength="6.71" lengthAdjust="spacingAndGlyphs">4</text>
<line x1="470.5" y1="236.5" x2="470.5" y2="251.5" stroke="#840000" stroke-width="1.0"/>
<text transform="translate(473.8 234.13) rotate(-90)" fill="#008484" stroke="#008484" font-size="11.44" textLength="30.53" lengthAdjust="spacingAndGlyphs">COMM</text>
<text transform="translate(468.16 243.99) rotate(-90)" fill="#840000" stroke="#840000" font-size="11.44" text-anchor="middle" textLength="6.71" lengthAdjust="spacingAndGlyphs">7</text>
<line x1="484.5" y1="236.5" x2="484.5" y2="251.5" stroke="#840000" stroke-width="1.0"/>
<text transform="translate(487.89 234.13) rotate(-90)" fill="#008484" stroke="#008484" font-size="11.44" textLength="30.53" lengthAdjust="spacingAndGlyphs">COMM</text>
<text transform="translate(482.25 243.99) rotate(-90)" fill="#840000" stroke="#840000" font-size="11.44" text-anchor="middle" textLength="6.71" lengthAdjust="spacingAndGlyphs">1</text>
<text transform="translate(448.61 134.62)" fill="#008484" stroke="#008484" font-size="11.44" text-anchor="middle" textLength="39.92" lengthAdjust="spacingAndGlyphs">AD8302</text>
<text transform="translate(477.08 103.2)" fill="#008484" stroke="#008484" font-size="11.44" text-anchor="middle" textLength="14.09" lengthAdjust="spacingAndGlyphs">U2</text>
<polyline points="392.5,124.5 413.5,124.5 413.5,166.5 420.5,166.5" stroke="#008400" stroke-width="1.0" fill="none"/>
<polyline points="420.5,180.5 406.5,180.5 406.5,166.5 392.5,166.5" stroke="#008400" stroke-width="1.0" fill="none"/>
<line x1="364.5" y1="166.5" x2="375.5" y2="166.5" stroke="#840000" stroke-width="1.0"/>
<line x1="381.5" y1="166.5" x2="392.5" y2="166.5" stroke="#840000" stroke-width="1.0"/>
<line x1="375.5" y1="157.5" x2="375.5" y2="175.5" stroke="#840000" stroke-width="2.0"/>
<line x1="381.5" y1="157.5" x2="381.5" y2="175.5" stroke="#840000" stroke-width="2.0"/>
<text transform="translate(380.98 156.74)" fill="#008484" stroke="#008484" font-size="11.44" text-anchor="middle" textLength="19.12" lengthAdjust="spacingAndGlyphs">1nF</text>
<text transform="translate(378.73 184.49)" fill="#008484" stroke="#008484" font-size="11.44" text-anchor="middle" textLength="13.75" lengthAdjust="spacingAndGlyphs">C6</text>
<line x1="364.5" y1="208.5" x2="375.5" y2="208.5" stroke="#840000" stroke-width="1.0"/>
<line x1="381.5" y1="208.5" x2="392.5" y2="208.5" stroke="#840000" stroke-width="1.0"/>
<line x1="375.5" y1="200.5" x2="375.5" y2="217.5" stroke="#840000" stroke-width="2.0"/>
<line x1="381.5" y1="200.5" x2="381.5" y2="217.5" stroke="#840000" stroke-width="2.0"/>
<text transform="translate(380.98 199.01)" fill="#008484" stroke="#008484" font-size="11.44" text-anchor="middle" textLength="19.12" lengthAdjust="spacingAndGlyphs">1nF</text>
<text transform="translate(378.73 226.76)" fill="#008484" stroke="#008484" font-size="11.44" text-anchor="middle" textLength="13.75" lengthAdjust="spacingAndGlyphs">C7</text>
<polyline points="364.5,166.5 357.5,166.5 357.5,208.5 364.5,208.5" stroke="#008400" stroke-width="1.0" fill="none"/>
<rect x="354.7" y="184.7" width="5.6" height="5.6" fill="#008400"/>
<polyline points="357.5,187.5 336.5,187.5" stroke="#008400" stroke-width="1.0" fill="none"/>
<line x1="336.5" y1="187.5" x2="336.5" y2="194.5" stroke="#840000" stroke-width="1.0"/>
<polygon points="329.5,194.5 343.5,194.5 336.5,201.5" stroke="#840000" stroke-width="1.0" fill="none"/>
<text transform="translate(336.17 216.48)" fill="#008484" stroke="#008484" font-size="11.44" text-anchor="middle" textLength="27.51" lengthAdjust="spacingAndGlyphs">GNDA</text>
<polyline points="392.5,208.5 406.5,208.5 406.5,194.5 420.5,194.5" stroke="#008400" stroke-width="1.0" fill="none"/>
<polyline points="420.5,208.5 413.5,208.5 413.5,251.5 392.5,251.5" stroke="#008400" stroke-width="1.0" fill="none"/>
<polygon points="392.5,124.5 388.5,117.5 333.5,117.5 333.5,131.5 388.5,131.5" stroke="#840000" stroke-width="1.0" fill="none"/>
<text transform="translate(336.88 129.02)" fill="#840000" stroke="#840000" font-size="12.4" textLength="49.46" lengthAdjust="spacingAndGlyphs">fwd_shft</text>
<polygon points="392.5,251.5 388.5,243.5 338.5,243.5 338.5,258.5 388.5,258.5" stroke="#840000" stroke-width="1.0" fill="none"/>
<text transform="translate(341.39 255.83)" fill="#840000" stroke="#840000" font-size="12.4" textLength="44.95" lengthAdjust="spacingAndGlyphs">refl_sig</text>
<polyline points="533.5,145.5 568.5,145.5" stroke="#008400" stroke-width="1.0" fill="none"/>
<path d="M565.68,142.68L571.32,148.32M571.32,142.68L565.68,148.32" stroke="#000084" stroke-width="1"/>
<polyline points="533.5,159.5 540.5,159.5 540.5,173.5 533.5,173.5" stroke="#008400" stroke-width="1.0" fill="none"/>
<rect x="537.7" y="163.7" width="5.6" height="5.6" fill="#008400"/>
<polyline points="540.5,166.5 568.5,166.5" stroke="#008400" stroke-width="1.0" fill="none"/>
<polygon points="568.5,166.5 572.5,159.5 633.5,159.5 633.5,173.5 572.5,173.5" stroke="#840000" stroke-width="1.0" fill="none"/>
<text transform="translate(575.14 171.29)" fill="#840000" stroke="#840000" font-size="12.4" textLength="55.66" lengthAdjust="spacingAndGlyphs">shft_mag</text>
<polyline points="533.5,187.5 568.5,187.5" stroke="#008400" stroke-width="1.0" fill="none"/>
<polygon points="568.5,187.5 572.5,180.5 630.5,180.5 630.5,194.5 572.5,194.5" stroke="#840000" stroke-width="1.0" fill="none"/>
<text transform="translate(575.14 192.42)" fill="#840000" stroke="#840000" font-size="12.4" textLength="52.84" lengthAdjust="spacingAndGlyphs">shft_vref</text>
<polyline points="533.5,201.5 540.5,201.5 540.5,215.5 533.5,215.5" stroke="#008400" stroke-width="1.0" fill="none"/>
<rect x="537.7" y="205.7" width="5.6" height="5.6" fill="#008400"/>
<polyline points="540.5,208.5 568.5,208.5" stroke="#008400" stroke-width="1.0" fill="none"/>
<polygon points="568.5,208.5 572.5,201.5 644.5,201.5 644.5,215.5 572.5,215.5" stroke="#840000" stroke-width="1.0" fill="none"/>
<text transform="translate(575.14 213.56)" fill="#840000" stroke="#840000" font-size="12.4" textLength="66.36" lengthAdjust="spacingAndGlyphs">shft_phase</text>
<polyline points="533.5,229.5 568.5,229.5" stroke="#008400" stroke-width="1.0" fill="none"/>
<path d="M565.68,226.68L571.32,232.32M571.32,226.68L565.68,232.32" stroke="#000084" stroke-width="1"/>
<polyline points="470.5,251.5 470.5,258.5 484.5,258.5 484.5,251.5" stroke="#008400" stroke-width="1.0" fill="none"/>
<rect x="474.7" y="255.7" width="5.6" height="5.6" fill="#008400"/>
<polyline points="477.5,258.5 477.5,272.5" stroke="#008400" stroke-width="1.0" fill="none"/>
<line x1="477.5" y1="272.5" x2="477.5" y2="279.5" stroke="#840000" stroke-width="1.0"/>
<polygon points="470.5,279.5 484.5,279.5 477.5,286.5" stroke="#840000" stroke-width="1.0" fill="none"/>
<text transform="translate(477.08 301.02)" fill="#008484" stroke="#008484" font-size="11.44" text-anchor="middle" textLength="27.51" lengthAdjust="spacingAndGlyphs">GNDA</text>
<polyline points="477.5,124.5 477.5,46.5" stroke="#008400" stroke-width="1.0" fill="none"/>
<line x1="477.5" y1="46.5" x2="477.5" y2="32.5" stroke="#840000" stroke-width="1.0"/>
<polyline points="472.5,39.5 477.5,32.5 481.5,39.5" stroke="#840000" stroke-width="1.0" fill="none"/>
<text transform="translate(477.08 26.83)" fill="#008484" stroke="#008484" font-size="11.44" text-anchor="middle" textLength="21.47" lengthAdjust="spacingAndGlyphs">+5V</text>
<rect x="474.7" y="50.7" width="5.6" height="5.6" fill="#008400"/>
<rect x="474.7" y="93.7" width="5.6" height="5.6" fill="#008400"/>
<polyline points="477.5,53.5 484.5,53.5" stroke="#008400" stroke-width="1.0" fill="none"/>
<line x1="484.5" y1="53.5" x2="495.5" y2="53.5" stroke="#840000" stroke-width="1.0"/>
<line x1="501.5" y1="53.5" x2="512.5" y2="53.5" stroke="#840000" stroke-width="1.0"/>
<line x1="495.5" y1="45.5" x2="495.5" y2="62.5" stroke="#840000" stroke-width="2.0"/>
<line x1="501.5" y1="45.5" x2="501.5" y2="62.5" stroke="#840000" stroke-width="2.0"/>
<text transform="translate(500.32 43.45)" fill="#008484" stroke="#008484" font-size="11.44" text-anchor="middle" textLength="32.54" lengthAdjust="spacingAndGlyphs">100pF</text>
<text transform="translate(498.21 71.92)" fill="#008484" stroke="#008484" font-size="11.44" text-anchor="middle" textLength="13.75" lengthAdjust="spacingAndGlyphs">C8</text>
<polyline points="477.5,96.5 484.5,96.5" stroke="#008400" stroke-width="1.0" fill="none"/>
<line x1="484.5" y1="96.5" x2="495.5" y2="96.5" stroke="#840000" stroke-width="1.0"/>
<line x1="501.5" y1="96.5" x2="512.5" y2="96.5" stroke="#840000" stroke-width="1.0"/>
<line x1="495.5" y1="87.5" x2="495.5" y2="104.5" stroke="#840000" stroke-width="2.0"/>
<line x1="501.5" y1="87.5" x2="501.5" y2="104.5" stroke="#840000" stroke-width="2.0"/>
<text transform="translate(500.32 85.72)" fill="#008484" stroke="#008484" font-size="11.44" text-anchor="middle" textLength="32.54" lengthAdjust="spacingAndGlyphs">100nF</text>
<text transform="translate(498.21 113.9)" fill="#008484" stroke="#008484" font-size="11.44" text-anchor="middle" textLength="13.75" lengthAdjust="spacingAndGlyphs">C9</text>
<polyline points="512.5,53.5 519.5,53.5 519.5,96.5" stroke="#008400" stroke-width="1.0" fill="none"/>
<rect x="516.7" y="93.7" width="5.6" height="5.6" fill="#008400"/>
<polyline points="512.5,96.5 540.5,96.5 540.5,103.5" stroke="#008400" stroke-width="1.0" fill="none"/>
<line x1="540.5" y1="103.5" x2="540.5" y2="110.5" stroke="#840000" stroke-width="1.0"/>
<polygon points="533.5,110.5 547.5,110.5 540.5,117.5" stroke="#840000" stroke-width="1.0" fill="none"/>
<text transform="translate(540.48 131.94)" fill="#008484" stroke="#008484" font-size="11.44" text-anchor="middle" textLength="27.51" lengthAdjust="spacingAndGlyphs">GNDA</text>
<path d="M711.91,106.70 A10.14,10.14 0 1 0 711.91,114.30" fill="none" stroke="#840000" stroke-width="1.6"/>
<circle cx="702.5" cy="110.5" r="2.82" fill="none" stroke="#840000" stroke-width="1"/>
<line x1="705.5" y1="110.5" x2="730.5" y2="110.5" stroke="#840000" stroke-width="1.0"/>
<line x1="702.5" y1="120.5" x2="702.5" y2="138.5" stroke="#840000" stroke-width="1.0"/>
<text transform="translate(697.16 79.1)" fill="#008484" stroke="#008484" font-size="11.44" text-anchor="middle" textLength="12.08" lengthAdjust="spacingAndGlyphs">J1</text>
<text transform="translate(702.51 92.77)" fill="#008484" stroke="#008484" font-size="11.44" text-anchor="middle" textLength="70.11" lengthAdjust="spacingAndGlyphs">Conn_Coaxial</text>
<text transform="translate(723.23 108.69)" fill="#840000" stroke="#840000" font-size="11.44" text-anchor="middle" textLength="6.71" lengthAdjust="spacingAndGlyphs">1</text>
<text transform="translate(700.65 131.27) rotate(-90)" fill="#840000" stroke="#840000" font-size="11.44" text-anchor="middle" textLength="6.71" lengthAdjust="spacingAndGlyphs">2</text>
<polyline points="702.5,138.5 702.5,152.5" stroke="#008400" stroke-width="1.0" fill="none"/>
<line x1="702.5" y1="152.5" x2="702.5" y2="159.5" stroke="#840000" stroke-width="1.0"/>
<polygon points="695.5,159.5 709.5,159.5 702.5,166.5" stroke="#840000" stroke-width="1.0" fill="none"/>
<text transform="translate(702.51 181.25)" fill="#008484" stroke="#008484" font-size="11.44" text-anchor="middle" textLength="27.51" lengthAdjust="spacingAndGlyphs">GNDA</text>
<polyline points="730.5,110.5 744.5,110.5" stroke="#008400" stroke-width="1.0" fill="none"/>
<rect x="741.7" y="107.7" width="5.6" height="5.6" fill="#008400"/>
<line x1="744.5" y1="110.5" x2="755.5" y2="110.5" stroke="#840000" stroke-width="1.0"/>
<line x1="761.5" y1="110.5" x2="772.5" y2="110.5" stroke="#840000" stroke-width="1.0"/>
<line x1="755.5" y1="101.5" x2="755.5" y2="118.5" stroke="#840000" stroke-width="2.0"/>
<line x1="761.5" y1="101.5" x2="761.5" y2="118.5" stroke="#840000" stroke-width="2.0"/>
<text transform="translate(761.69 100.1)" fill="#008484" stroke="#008484" font-size="11.44" text-anchor="middle" textLength="19.12" lengthAdjust="spacingAndGlyphs">1nF</text>
<text transform="translate(762.4 127.29)" fill="#008484" stroke="#008484" font-size="11.44" text-anchor="middle" textLength="20.46" lengthAdjust="spacingAndGlyphs">C10</text>
<polyline points="772.5,110.5 801.5,110.5" stroke="#008400" stroke-width="1.0" fill="none"/>
<line x1="801.5" y1="110.5" x2="804.5" y2="110.5" stroke="#840000" stroke-width="1.0"/>
<line x1="825.5" y1="110.5" x2="829.5" y2="110.5" stroke="#840000" stroke-width="1.0"/>
<rect x="804.5" y="105.5" width="21.0" height="9.0" fill="none" stroke="#840000" stroke-width="1.0"/>
<text transform="translate(816.64 100.52)" fill="#008484" stroke="#008484" font-size="11.44" text-anchor="middle" textLength="13.75" lengthAdjust="spacingAndGlyphs">R2</text>
<text transform="translate(817.35 128.84)" fill="#008484" stroke="#008484" font-size="11.44" text-anchor="middle" textLength="30.86" lengthAdjust="spacingAndGlyphs">66.5Ω</text>
<polyline points="829.5,110.5 864.5,110.5" stroke="#008400" stroke-width="1.0" fill="none"/>
<rect x="854.7" y="107.7" width="5.6" height="5.6" fill="#008400"/>
<polygon points="864.5,110.5 868.5,103.5 940.5,103.5 940.5,117.5 868.5,117.5" stroke="#840000" stroke-width="1.0" fill="none"/>
<text transform="translate(871.03 114.93)" fill="#840000" stroke="#840000" font-size="12.4" textLength="66.5" lengthAdjust="spacingAndGlyphs">fwd_sig_dc</text>
<polyline points="744.5,110.5 744.5,81.5 765.5,81.5" stroke="#008400" stroke-width="1.0" fill="none"/>
<line x1="765.5" y1="81.5" x2="776.5" y2="81.5" stroke="#840000" stroke-width="1.0"/>
<line x1="783.5" y1="81.5" x2="794.5" y2="81.5" stroke="#840000" stroke-width="1.0"/>
<line x1="776.5" y1="73.5" x2="776.5" y2="90.5" stroke="#840000" stroke-width="2.0"/>
<line x1="783.5" y1="73.5" x2="783.5" y2="90.5" stroke="#840000" stroke-width="2.0"/>
<text transform="translate(785.65 72.06)" fill="#008484" stroke="#008484" font-size="11.44" text-anchor="middle" textLength="25.83" lengthAdjust="spacingAndGlyphs">10nF</text>
<text transform="translate(782.83 100.52)" fill="#008484" stroke="#008484" font-size="11.44" text-anchor="middle" textLength="20.46" lengthAdjust="spacingAndGlyphs">C11</text>
<polyline points="794.5,81.5 801.5,81.5" stroke="#008400" stroke-width="1.0" fill="none"/>
<polygon points="801.5,81.5 805.5,74.5 855.5,74.5 855.5,89.5 805.5,89.5" stroke="#840000" stroke-width="1.0" fill="none"/>
<text transform="translate(807.63 86.75)" fill="#840000" stroke="#840000" font-size="12.4" textLength="44.67" lengthAdjust="spacingAndGlyphs">fwd_sig</text>
<polyline points="857.5,110.5 857.5,124.5" stroke="#008400" stroke-width="1.0" fill="none"/>
<line x1="857.5" y1="124.5" x2="857.5" y2="127.5" stroke="#840000" stroke-width="1.0"/>
<line x1="857.5" y1="148.5" x2="857.5" y2="152.5" stroke="#840000" stroke-width="1.0"/>
<rect x="853.5" y="127.5" width="8.0" height="21.0" fill="none" stroke="#840000" stroke-width="1.0"/>
<text transform="translate(836.37 135.04)" fill="#008484" stroke="#008484" font-size="11.44" text-anchor="middle" textLength="13.75" lengthAdjust="spacingAndGlyphs">R5</text>
<text transform="translate(834.96 148.28)" fill="#008484" stroke="#008484" font-size="11.44" text-anchor="middle" textLength="30.86" lengthAdjust="spacingAndGlyphs">44.2Ω</text>
<polyline points="857.5,152.5 857.5,166.5" stroke="#008400" stroke-width="1.0" fill="none"/>
<line x1="857.5" y1="166.5" x2="857.5" y2="177.5" stroke="#840000" stroke-width="1.0"/>
<line x1="857.5" y1="183.5" x2="857.5" y2="194.5" stroke="#840000" stroke-width="1.0"/>
<line x1="848.5" y1="177.5" x2="866.5" y2="177.5" stroke="#840000" stroke-width="2.0"/>
<line x1="848.5" y1="183.5" x2="866.5" y2="183.5" stroke="#840000" stroke-width="2.0"/>
<text transform="translate(833.55 184.35)" fill="#008484" stroke="#008484" font-size="11.44" text-anchor="middle" textLength="20.46" lengthAdjust="spacingAndGlyphs">C12</text>
<text transform="translate(840.6 197.04)" fill="#008484" stroke="#008484" font-size="11.44" text-anchor="middle" textLength="19.12" lengthAdjust="spacingAndGlyphs">1nF</text>
<polyline points="857.5,194.5 857.5,201.5" stroke="#008400" stroke-width="1.0" fill="none"/>
<line x1="857.5" y1="201.5" x2="857.5" y2="208.5" stroke="#840000" stroke-width="1.0"/>
<polygon points="850.5,208.5 864.5,208.5 857.5,215.5" stroke="#840000" stroke-width="1.0" fill="none"/>
<text transform="translate(857.5 230.57)" fill="#008484" stroke="#008484" font-size="11.44" text-anchor="middle" textLength="27.51" lengthAdjust="spacingAndGlyphs">GNDA</text>
<line x1="737.5" y1="159.5" x2="737.5" y2="145.5" stroke="#840000" stroke-width="1.0"/>
<polyline points="733.5,152.5 737.5,145.5 741.5,152.5" stroke="#840000" stroke-width="1.0" fill="none"/>
<text transform="translate(737.74 139.55)" fill="#008484" stroke="#008484" font-size="11.44" text-anchor="middle" textLength="21.47" lengthAdjust="spacingAndGlyphs">+5V</text>
<polyline points="737.5,159.5 758.5,159.5" stroke="#008400" stroke-width="1.0" fill="none"/>
<line x1="758.5" y1="159.5" x2="762.5" y2="159.5" stroke="#840000" stroke-width="1.0"/>
<line x1="783.5" y1="159.5" x2="787.5" y2="159.5" stroke="#840000" stroke-width="1.0"/>
<rect x="762.5" y="155.5" width="21.0" height="8.0" fill="none" stroke="#840000" stroke-width="1.0"/>
<text transform="translate(772.96 149.13)" fill="#008484" stroke="#008484" font-size="11.44" text-anchor="middle" textLength="13.75" lengthAdjust="spacingAndGlyphs">R1</text>
<text transform="translate(770.15 177.31)" fill="#008484" stroke="#008484" font-size="11.44" text-anchor="middle" textLength="21.13" lengthAdjust="spacingAndGlyphs">1KΩ</text>
<polyline points="787.5,159.5 857.5,159.5" stroke="#008400" stroke-width="1.0" fill="none"/>
<rect x="812.7" y="156.7" width="5.6" height="5.6" fill="#008400"/>
<rect x="854.7" y="156.7" width="5.6" height="5.6" fill="#008400"/>
<polyline points="815.5,159.5 815.5,166.5" stroke="#008400" stroke-width="1.0" fill="none"/>
<line x1="815.5" y1="166.5" x2="815.5" y2="170.5" stroke="#840000" stroke-width="1.0"/>
<line x1="815.5" y1="191.5" x2="815.5" y2="194.5" stroke="#840000" stroke-width="1.0"/>
<rect x="811.5" y="170.5" width="8.0" height="21.0" fill="none" stroke="#840000" stroke-width="1.0"/>
<text transform="translate(794.1 177.31)" fill="#008484" stroke="#008484" font-size="11.44" text-anchor="middle" textLength="13.75" lengthAdjust="spacingAndGlyphs">R3</text>
<text transform="translate(796.92 191.4)" fill="#008484" stroke="#008484" font-size="11.44" text-anchor="middle" textLength="21.13" lengthAdjust="spacingAndGlyphs">1KΩ</text>
<polyline points="815.5,194.5 815.5,201.5" stroke="#008400" stroke-width="1.0" fill="none"/>
<line x1="815.5" y1="201.5" x2="815.5" y2="208.5" stroke="#840000" stroke-width="1.0"/>
<polygon points="808.5,208.5 822.5,208.5 815.5,215.5" stroke="#840000" stroke-width="1.0" fill="none"/>
<text transform="translate(815.23 230.57)" fill="#008484" stroke="#008484" font-size="11.44" text-anchor="middle" textLength="27.51" lengthAdjust="spacingAndGlyphs">GNDA</text>
<path d="M951.91,155.70 A10.14,10.14 0 1 0 951.91,163.30" fill="none" stroke="#840000" stroke-width="1.6"/>
<circle cx="942.5" cy="159.5" r="2.82" fill="none" stroke="#840000" stroke-width="1"/>
<line x1="944.5" y1="159.5" x2="970.5" y2="159.5" stroke="#840000" stroke-width="1.0"/>
<line x1="942.5" y1="169.5" x2="942.5" y2="187.5" stroke="#840000" stroke-width="1.0"/>
<text transform="translate(951.2 130.11)" fill="#008484" stroke="#008484" font-size="11.44" text-anchor="middle" textLength="12.08" lengthAdjust="spacingAndGlyphs">J3</text>
<text transform="translate(951.91 142.79)" fill="#008484" stroke="#008484" font-size="11.44" text-anchor="middle" textLength="70.11" lengthAdjust="spacingAndGlyphs">Conn_Coaxial</text>
<text transform="translate(963.18 157.86)" fill="#840000" stroke="#840000" font-size="11.44" text-anchor="middle" textLength="6.71" lengthAdjust="spacingAndGlyphs">1</text>
<text transform="translate(938.77 180.58) rotate(-90)" fill="#840000" stroke="#840000" font-size="11.44" text-anchor="middle" textLength="6.71" lengthAdjust="spacingAndGlyphs">2</text>
<polyline points="942.5,187.5 942.5,201.5" stroke="#008400" stroke-width="1.0" fill="none"/>
<line x1="942.5" y1="201.5" x2="942.5" y2="208.5" stroke="#840000" stroke-width="1.0"/>
<polygon points="935.5,208.5 949.5,208.5 942.5,215.5" stroke="#840000" stroke-width="1.0" fill="none"/>
<text transform="translate(942.05 230.57)" fill="#008484" stroke="#008484" font-size="11.44" text-anchor="middle" textLength="27.51" lengthAdjust="spacingAndGlyphs">GNDA</text>
<polyline points="970.5,159.5 998.5,159.5" stroke="#008400" stroke-width="1.0" fill="none"/>
<rect x="981.7" y="156.7" width="5.6" height="5.6" fill="#008400"/>
<line x1="998.5" y1="159.5" x2="1009.5" y2="159.5" stroke="#840000" stroke-width="1.0"/>
<line x1="1015.5" y1="159.5" x2="1026.5" y2="159.5" stroke="#840000" stroke-width="1.0"/>
<line x1="1009.5" y1="150.5" x2="1009.5" y2="168.5" stroke="#840000" stroke-width="2.0"/>
<line x1="1015.5" y1="150.5" x2="1015.5" y2="168.5" stroke="#840000" stroke-width="2.0"/>
<text transform="translate(1016.02 149.13)" fill="#008484" stroke="#008484" font-size="11.44" text-anchor="middle" textLength="19.12" lengthAdjust="spacingAndGlyphs">1nF</text>
<text transform="translate(1016.72 177.31)" fill="#008484" stroke="#008484" font-size="11.44" text-anchor="middle" textLength="20.46" lengthAdjust="spacingAndGlyphs">C16</text>
<polyline points="1026.5,159.5 1033.5,159.5" stroke="#008400" stroke-width="1.0" fill="none"/>
<polygon points="1033.5,159.5 1037.5,152.5 1088.5,152.5 1088.5,166.5 1037.5,166.5" stroke="#840000" stroke-width="1.0" fill="none"/>
<text transform="translate(1040.11 164.24)" fill="#840000" stroke="#840000" font-size="12.4" textLength="45.23" lengthAdjust="spacingAndGlyphs">refl_sig</text>
<polyline points="984.5,159.5 984.5,166.5" stroke="#008400" stroke-width="1.0" fill="none"/>
<line x1="984.5" y1="166.5" x2="984.5" y2="170.5" stroke="#840000" stroke-width="1.0"/>
<line x1="984.5" y1="191.5" x2="984.5" y2="194.5" stroke="#840000" stroke-width="1.0"/>
<rect x="980.5" y="170.5" width="8.0" height="21.0" fill="none" stroke="#840000" stroke-width="1.0"/>
<text transform="translate(963.18 177.31)" fill="#008484" stroke="#008484" font-size="11.44" text-anchor="middle" textLength="13.75" lengthAdjust="spacingAndGlyphs">R6</text>
<text transform="translate(966.0 191.4)" fill="#008484" stroke="#008484" font-size="11.44" text-anchor="middle" textLength="20.8" lengthAdjust="spacingAndGlyphs">51Ω</text>
<polyline points="984.5,194.5 984.5,201.5" stroke="#008400" stroke-width="1.0" fill="none"/>
<line x1="984.5" y1="201.5" x2="984.5" y2="208.5" stroke="#840000" stroke-width="1.0"/>
<polygon points="977.5,208.5 991.5,208.5 984.5,215.5" stroke="#840000" stroke-width="1.0" fill="none"/>
<text transform="translate(984.32 230.57)" fill="#008484" stroke="#008484" font-size="11.44" text-anchor="middle" textLength="27.51" lengthAdjust="spacingAndGlyphs">GNDA</text>
<polygon points="1195.5,81.5 1191.5,74.5 1113.5,74.5 1113.5,89.5 1191.5,89.5" stroke="#840000" stroke-width="1.0" fill="none"/>
<text transform="translate(1116.9 86.75)" fill="#840000" stroke="#840000" font-size="12.4" textLength="72.56" lengthAdjust="spacingAndGlyphs">fwd_sig_dc</text>
<rect x="1192.7" y="78.7" width="5.6" height="5.6" fill="#008400"/>
<polyline points="1195.5,81.5 1202.5,81.5" stroke="#008400" stroke-width="1.0" fill="none"/>
<line x1="1202.5" y1="81.5" x2="1206.5" y2="81.5" stroke="#840000" stroke-width="1.0"/>
<line x1="1227.5" y1="81.5" x2="1230.5" y2="81.5" stroke="#840000" stroke-width="1.0"/>
<rect x="1206.5" y="77.5" width="21.0" height="9.0" fill="none" stroke="#840000" stroke-width="1.0"/>
<text transform="translate(1216.8 71.63)" fill="#008484" stroke="#008484" font-size="11.44" text-anchor="middle" textLength="13.75" lengthAdjust="spacingAndGlyphs">R9</text>
<text transform="translate(1216.8 99.81)" fill="#008484" stroke="#008484" font-size="11.44" text-anchor="middle" textLength="27.51" lengthAdjust="spacingAndGlyphs">100Ω</text>
<polyline points="1230.5,81.5 1294.5,81.5" stroke="#008400" stroke-width="1.0" fill="none"/>
<rect x="1263.7" y="78.7" width="5.6" height="5.6" fill="#008400"/>
<polyline points="1266.5,81.5 1266.5,96.5" stroke="#008400" stroke-width="1.0" fill="none"/>
<line x1="1266.5" y1="96.5" x2="1266.5" y2="107.5" stroke="#840000" stroke-width="1.0"/>
<line x1="1266.5" y1="113.5" x2="1266.5" y2="124.5" stroke="#840000" stroke-width="1.0"/>
<line x1="1257.5" y1="107.5" x2="1274.5" y2="107.5" stroke="#840000" stroke-width="2.0"/>
<line x1="1257.5" y1="113.5" x2="1274.5" y2="113.5" stroke="#840000" stroke-width="2.0"/>
<text transform="translate(1241.46 113.9)" fill="#008484" stroke="#008484" font-size="11.44" text-anchor="middle" textLength="20.46" lengthAdjust="spacingAndGlyphs">C19</text>
<text transform="translate(1244.98 127.99)" fill="#008484" stroke="#008484" font-size="11.44" text-anchor="middle" textLength="25.83" lengthAdjust="spacingAndGlyphs">50pF</text>
<polyline points="1266.5,124.5 1266.5,131.5" stroke="#008400" stroke-width="1.0" fill="none"/>
<line x1="1266.5" y1="131.5" x2="1266.5" y2="138.5" stroke="#840000" stroke-width="1.0"/>
<polygon points="1259.5,138.5 1273.5,138.5 1266.5,145.5" stroke="#840000" stroke-width="1.0" fill="none"/>
<text transform="translate(1266.11 160.12)" fill="#008484" stroke="#008484" font-size="11.44" text-anchor="middle" textLength="27.51" lengthAdjust="spacingAndGlyphs">GNDA</text>
<polyline points="1195.5,81.5 1195.5,117.5" stroke="#008400" stroke-width="1.0" fill="none"/>
<line x1="1195.5" y1="117.5" x2="1195.5" y2="128.5" stroke="#840000" stroke-width="1.0"/>
<line x1="1195.5" y1="134.5" x2="1195.5" y2="145.5" stroke="#840000" stroke-width="1.0"/>
<line x1="1186.5" y1="128.5" x2="1204.5" y2="128.5" stroke="#840000" stroke-width="2.0"/>
<line x1="1186.5" y1="134.5" x2="1204.5" y2="134.5" stroke="#840000" stroke-width="2.0"/>
<text transform="translate(1171.71 135.04)" fill="#008484" stroke="#008484" font-size="11.44" text-anchor="middle" textLength="20.46" lengthAdjust="spacingAndGlyphs">C18</text>
<text transform="translate(1171.71 148.42)" fill="#008484" stroke="#008484" font-size="11.44" text-anchor="middle" textLength="32.54" lengthAdjust="spacingAndGlyphs">100nF</text>
<polyline points="1195.5,145.5 1195.5,180.5 1216.5,180.5" stroke="#008400" stroke-width="1.0" fill="none"/>
<line x1="1216.5" y1="180.5" x2="1220.5" y2="180.5" stroke="#840000" stroke-width="1.0"/>
<line x1="1241.5" y1="180.5" x2="1244.5" y2="180.5" stroke="#840000" stroke-width="1.0"/>
<rect x="1220.5" y="176.5" width="21.0" height="8.0" fill="none" stroke="#840000" stroke-width="1.0"/>
<text transform="translate(1236.53 169.98)" fill="#008484" stroke="#008484" font-size="11.44" text-anchor="middle" textLength="20.46" lengthAdjust="spacingAndGlyphs">R10</text>
<text transform="translate(1230.89 198.44)" fill="#008484" stroke="#008484" font-size="11.44" text-anchor="middle" textLength="27.51" lengthAdjust="spacingAndGlyphs">470Ω</text>
<polyline points="1244.5,180.5 1350.5,180.5" stroke="#008400" stroke-width="1.0" fill="none"/>
<rect x="1284.7" y="177.7" width="5.6" height="5.6" fill="#008400"/>
<line x1="1350.5" y1="180.5" x2="1354.5" y2="180.5" stroke="#840000" stroke-width="1.0"/>
<line x1="1375.5" y1="180.5" x2="1378.5" y2="180.5" stroke="#840000" stroke-width="1.0"/>
<rect x="1354.5" y="176.5" width="21.0" height="8.0" fill="none" stroke="#840000" stroke-width="1.0"/>
<text transform="translate(1368.69 169.7)" fill="#008484" stroke="#008484" font-size="11.44" text-anchor="middle" textLength="20.46" lengthAdjust="spacingAndGlyphs">R13</text>
<text transform="translate(1364.75 198.44)" fill="#008484" stroke="#008484" font-size="11.44" text-anchor="middle" textLength="27.51" lengthAdjust="spacingAndGlyphs">510Ω</text>
<polyline points="1378.5,180.5 1385.5,180.5 1385.5,96.5" stroke="#008400" stroke-width="1.0" fill="none"/>
<polyline points="1287.5,180.5 1287.5,110.5 1294.5,110.5" stroke="#008400" stroke-width="1.0" fill="none"/>
<polygon points="1308.5,67.5 1364.5,96.5 1308.5,124.5" stroke="#840000" stroke-width="1.0" fill="#ffffc2"/>
<line x1="1294.5" y1="81.5" x2="1308.5" y2="81.5" stroke="#840000" stroke-width="1.0"/>
<line x1="1294.5" y1="110.5" x2="1308.5" y2="110.5" stroke="#840000" stroke-width="1.0"/>
<text transform="translate(1300.35 80.23)" fill="#840000" stroke="#840000" font-size="11.44" text-anchor="middle" textLength="6.71" lengthAdjust="spacingAndGlyphs">3</text>
<text transform="translate(1300.35 109.11)" fill="#840000" stroke="#840000" font-size="11.44" text-anchor="middle" textLength="6.71" lengthAdjust="spacingAndGlyphs">4</text>
<line x1="1364.5" y1="96.5" x2="1378.5" y2="96.5" stroke="#840000" stroke-width="1.0"/>
<text transform="translate(1371.51 94.6)" fill="#840000" stroke="#840000" font-size="11.44" text-anchor="middle" textLength="6.71" lengthAdjust="spacingAndGlyphs">1</text>
<polyline points="1378.5,96.5 1392.5,96.5" stroke="#008400" stroke-width="1.0" fill="none"/>
<rect x="1382.7" y="93.7" width="5.6" height="5.6" fill="#008400"/>
<line x1="1392.5" y1="96.5" x2="1396.5" y2="96.5" stroke="#840000" stroke-width="1.0"/>
<line x1="1417.5" y1="96.5" x2="1421.5" y2="96.5" stroke="#840000" stroke-width="1.0"/>
<rect x="1396.5" y="91.5" width="21.0" height="9.0" fill="none" stroke="#840000" stroke-width="1.0"/>
<text transform="translate(1411.24 85.72)" fill="#008484" stroke="#008484" font-size="11.44" text-anchor="middle" textLength="20.46" lengthAdjust="spacingAndGlyphs">R14</text>
<text transform="translate(1404.2 113.9)" fill="#008484" stroke="#008484" font-size="11.44" text-anchor="middle" textLength="20.8" lengthAdjust="spacingAndGlyphs">51Ω</text>
<polyline points="1421.5,96.5 1428.5,96.5" stroke="#008400" stroke-width="1.0" fill="none"/>
<line x1="1428.5" y1="96.5" x2="1439.5" y2="96.5" stroke="#840000" stroke-width="1.0"/>
<line x1="1445.5" y1="96.5" x2="1456.5" y2="96.5" stroke="#840000" stroke-width="1.0"/>
<line x1="1439.5" y1="87.5" x2="1439.5" y2="104.5" stroke="#840000" stroke-width="2.0"/>
<line x1="1445.5" y1="87.5" x2="1445.5" y2="104.5" stroke="#840000" stroke-width="2.0"/>
<text transform="translate(1444.49 85.72)" fill="#008484" stroke="#008484" font-size="11.44" text-anchor="middle" textLength="19.12" lengthAdjust="spacingAndGlyphs">1nF</text>
<text transform="translate(1446.19 113.9)" fill="#008484" stroke="#008484" font-size="11.44" text-anchor="middle" textLength="20.46" lengthAdjust="spacingAndGlyphs">C24</text>
<polyline points="1456.5,96.5 1463.5,96.5" stroke="#008400" stroke-width="1.0" fill="none"/>
<polygon points="1463.5,96.5 1467.5,89.5 1523.5,89.5 1523.5,103.5 1467.5,103.5" stroke="#840000" stroke-width="1.0" fill="none"/>
<text transform="translate(1469.86 100.84)" fill="#840000" stroke="#840000" font-size="12.4" textLength="50.58" lengthAdjust="spacingAndGlyphs">fwd_shft</text>
<line x1="1322.5" y1="74.5" x2="1322.5" y2="59.5" stroke="#840000" stroke-width="1.0"/>
<polyline points="1322.5,59.5 1322.5,46.5" stroke="#008400" stroke-width="1.0" fill="none"/>
<rect x="1319.7" y="43.7" width="5.6" height="5.6" fill="#008400"/>
<rect x="1319.7" y="50.7" width="5.6" height="5.6" fill="#008400"/>
<line x1="1322.5" y1="46.5" x2="1322.5" y2="32.5" stroke="#840000" stroke-width="1.0"/>
<polyline points="1318.5,39.5 1322.5,32.5 1326.5,39.5" stroke="#840000" stroke-width="1.0" fill="none"/>
<text transform="translate(1322.47 26.83)" fill="#008484" stroke="#008484" font-size="11.44" text-anchor="middle" textLength="21.47" lengthAdjust="spacingAndGlyphs">+5V</text>
<line x1="1336.5" y1="81.5" x2="1336.5" y2="59.5" stroke="#840000" stroke-width="1.0"/>
<polyline points="1336.5,59.5 1336.5,53.5 1322.5,53.5" stroke="#008400" stroke-width="1.0" fill="none"/>
<polyline points="1322.5,46.5 1336.5,46.5" stroke="#008400" stroke-width="1.0" fill="none"/>
<line x1="1336.5" y1="46.5" x2="1347.5" y2="46.5" stroke="#840000" stroke-width="1.0"/>
<line x1="1353.5" y1="46.5" x2="1364.5" y2="46.5" stroke="#840000" stroke-width="1.0"/>
<line x1="1347.5" y1="37.5" x2="1347.5" y2="55.5" stroke="#840000" stroke-width="2.0"/>
<line x1="1353.5" y1="37.5" x2="1353.5" y2="55.5" stroke="#840000" stroke-width="2.0"/>
<text transform="translate(1352.91 36.41)" fill="#008484" stroke="#008484" font-size="11.44" text-anchor="middle" textLength="32.54" lengthAdjust="spacingAndGlyphs">100nF</text>
<text transform="translate(1354.46 64.59)" fill="#008484" stroke="#008484" font-size="11.44" text-anchor="middle" textLength="20.46" lengthAdjust="spacingAndGlyphs">C20</text>
<polyline points="1364.5,46.5 1378.5,46.5 1378.5,53.5" stroke="#008400" stroke-width="1.0" fill="none"/>
<line x1="1378.5" y1="53.5" x2="1378.5" y2="60.5" stroke="#840000" stroke-width="1.0"/>
<polygon points="1371.5,60.5 1385.5,60.5 1378.5,67.5" stroke="#840000" stroke-width="1.0" fill="none"/>
<text transform="translate(1378.83 82.62)" fill="#008484" stroke="#008484" font-size="11.44" text-anchor="middle" textLength="27.51" lengthAdjust="spacingAndGlyphs">GNDA</text>
<line x1="1322.5" y1="117.5" x2="1322.5" y2="138.5" stroke="#840000" stroke-width="1.0"/>
<polyline points="1322.5,138.5 1322.5,145.5" stroke="#008400" stroke-width="1.0" fill="none"/>
<line x1="1322.5" y1="145.5" x2="1322.5" y2="152.5" stroke="#840000" stroke-width="1.0"/>
<polygon points="1315.5,152.5 1329.5,152.5 1322.5,159.5" stroke="#840000" stroke-width="1.0" fill="none"/>
<text transform="translate(1322.47 174.21)" fill="#008484" stroke="#008484" font-size="11.44" text-anchor="middle" textLength="27.51" lengthAdjust="spacingAndGlyphs">GNDA</text>
<text transform="translate(1322.02 64.2) rotate(-90)" fill="#840000" stroke="#840000" font-size="11.44" text-anchor="middle" textLength="6.71" lengthAdjust="spacingAndGlyphs">6</text>
<text transform="translate(1336.81 67.58) rotate(-90)" fill="#840000" stroke="#840000" font-size="11.44" text-anchor="middle" textLength="6.71" lengthAdjust="spacingAndGlyphs">5</text>
<text transform="translate(1322.02 127.32) rotate(-90)" fill="#840000" stroke="#840000" font-size="11.44" text-anchor="middle" textLength="6.71" lengthAdjust="spacingAndGlyphs">2</text>
<text transform="translate(1314.73 85.3)" fill="#008484" stroke="#008484" font-size="11.44" text-anchor="middle" textLength="8.72" lengthAdjust="spacingAndGlyphs">+</text>
<text transform="translate(1314.73 114.19)" fill="#008484" stroke="#008484" font-size="11.44" text-anchor="middle" textLength="8.72" lengthAdjust="spacingAndGlyphs">-</text>
<text transform="translate(1327.65 84.77) rotate(-90)" fill="#008484" stroke="#008484" font-size="11.44" text-anchor="middle" textLength="14.76" lengthAdjust="spacingAndGlyphs">V+</text>
<text transform="translate(1340.33 91.82) rotate(-90)" fill="#008484" stroke="#008484" font-size="11.44" text-anchor="middle" textLength="16.44" lengthAdjust="spacingAndGlyphs">DIS</text>
<text transform="translate(1327.65 108.73) rotate(-90)" fill="#008484" stroke="#008484" font-size="11.44" text-anchor="middle" textLength="14.76" lengthAdjust="spacingAndGlyphs">V-</text>
<text transform="translate(1354.46 85.3)" fill="#008484" stroke="#008484" font-size="11.44" text-anchor="middle" textLength="20.13" lengthAdjust="spacingAndGlyphs">U5A</text>
<text transform="translate(1358.12 120.95)" fill="#008484" stroke="#008484" font-size="11.44" text-anchor="middle" textLength="40.59" lengthAdjust="spacingAndGlyphs">OPA695</text>
<polygon points="765.5,384.5 761.5,377.5 691.5,377.5 691.5,391.5 761.5,391.5" stroke="#840000" stroke-width="1.0" fill="none"/>
<text transform="translate(694.48 389.68)" fill="#840000" stroke="#840000" font-size="12.4" textLength="65.24" lengthAdjust="spacingAndGlyphs">fwd_sig_dc</text>
<rect x="769.7" y="381.7" width="5.6" height="5.6" fill="#008400"/>
<polyline points="765.5,384.5 843.5,384.5" stroke="#008400" stroke-width="1.0" fill="none"/>
<polyline points="772.5,384.5 772.5,314.5" stroke="#008400" stroke-width="1.0" fill="none"/>
<line x1="772.5" y1="314.5" x2="776.5" y2="314.5" stroke="#840000" stroke-width="1.0"/>
<line x1="797.5" y1="314.5" x2="801.5" y2="314.5" stroke="#840000" stroke-width="1.0"/>
<rect x="776.5" y="310.5" width="21.0" height="8.0" fill="none" stroke="#840000" stroke-width="1.0"/>
<text transform="translate(765.5 317.5)" fill="#008484" stroke="#008484" font-size="11.44" text-anchor="middle" textLength="13.75" lengthAdjust="spacingAndGlyphs">R4</text>
<text transform="translate(784.24 332.02)" fill="#008484" stroke="#008484" font-size="11.44" text-anchor="middle" textLength="21.13" lengthAdjust="spacingAndGlyphs">1KΩ</text>
<polyline points="801.5,314.5 843.5,314.5 843.5,356.5" stroke="#008400" stroke-width="1.0" fill="none"/>
<rect x="805.7" y="311.7" width="5.6" height="5.6" fill="#008400"/>
<line x1="808.5" y1="314.5" x2="808.5" y2="325.5" stroke="#840000" stroke-width="1.0"/>
<line x1="808.5" y1="331.5" x2="808.5" y2="342.5" stroke="#840000" stroke-width="1.0"/>
<line x1="799.5" y1="325.5" x2="816.5" y2="325.5" stroke="#840000" stroke-width="2.0"/>
<line x1="799.5" y1="331.5" x2="816.5" y2="331.5" stroke="#840000" stroke-width="2.0"/>
<text transform="translate(826.75 330.36) rotate(-90)" fill="#008484" stroke="#008484" font-size="11.44" text-anchor="middle" textLength="32.54" lengthAdjust="spacingAndGlyphs">100nF</text>
<text transform="translate(839.86 331.63) rotate(-90)" fill="#008484" stroke="#008484" font-size="11.44" text-anchor="middle" textLength="20.46" lengthAdjust="spacingAndGlyphs">C13</text>
<polyline points="808.5,342.5 808.5,349.5" stroke="#008400" stroke-width="1.0" fill="none"/>
<line x1="808.5" y1="349.5" x2="808.5" y2="356.5" stroke="#840000" stroke-width="1.0"/>
<polygon points="801.5,356.5 815.5,356.5 808.5,363.5" stroke="#840000" stroke-width="1.0" fill="none"/>
<text transform="translate(808.19 378.51)" fill="#008484" stroke="#008484" font-size="11.44" text-anchor="middle" textLength="27.51" lengthAdjust="spacingAndGlyphs">GNDA</text>
<polygon points="857.5,342.5 913.5,370.5 857.5,398.5" stroke="#840000" stroke-width="1.0" fill="#ffffc2"/>
<line x1="843.5" y1="356.5" x2="857.5" y2="356.5" stroke="#840000" stroke-width="1.0"/>
<line x1="843.5" y1="384.5" x2="857.5" y2="384.5" stroke="#840000" stroke-width="1.0"/>
<text transform="translate(849.9 355.12)" fill="#840000" stroke="#840000" font-size="11.44" text-anchor="middle" textLength="6.71" lengthAdjust="spacingAndGlyphs">3</text>
<text transform="translate(850.88 383.16)" fill="#840000" stroke="#840000" font-size="11.44" text-anchor="middle" textLength="6.71" lengthAdjust="spacingAndGlyphs">1</text>
<line x1="913.5" y1="370.5" x2="927.5" y2="370.5" stroke="#840000" stroke-width="1.0"/>
<text transform="translate(921.33 369.64)" fill="#840000" stroke="#840000" font-size="11.44" text-anchor="middle" textLength="6.71" lengthAdjust="spacingAndGlyphs">5</text>
<polyline points="927.5,370.5 935.5,370.5" stroke="#008400" stroke-width="1.0" fill="none"/>
<line x1="935.5" y1="370.5" x2="945.5" y2="370.5" stroke="#840000" stroke-width="1.0"/>
<line x1="952.5" y1="370.5" x2="963.5" y2="370.5" stroke="#840000" stroke-width="1.0"/>
<line x1="945.5" y1="362.5" x2="945.5" y2="379.5" stroke="#840000" stroke-width="2.0"/>
<line x1="952.5" y1="362.5" x2="952.5" y2="379.5" stroke="#840000" stroke-width="2.0"/>
<text transform="translate(952.19 346.39)" fill="#008484" stroke="#008484" font-size="11.44" text-anchor="middle" textLength="20.46" lengthAdjust="spacingAndGlyphs">C15</text>
<text transform="translate(945.29 361.18)" fill="#008484" stroke="#008484" font-size="11.44" text-anchor="middle" textLength="19.12" lengthAdjust="spacingAndGlyphs">1nF</text>
<polyline points="963.5,370.5 970.5,370.5" stroke="#008400" stroke-width="1.0" fill="none"/>
<line x1="871.5" y1="349.5" x2="871.5" y2="335.5" stroke="#840000" stroke-width="1.0"/>
<polyline points="871.5,335.5 871.5,321.5" stroke="#008400" stroke-width="1.0" fill="none"/>
<rect x="868.7" y="318.7" width="5.6" height="5.6" fill="#008400"/>
<line x1="871.5" y1="321.5" x2="871.5" y2="307.5" stroke="#840000" stroke-width="1.0"/>
<polyline points="867.5,314.5 871.5,307.5 875.5,314.5" stroke="#840000" stroke-width="1.0" fill="none"/>
<text transform="translate(871.59 301.58)" fill="#008484" stroke="#008484" font-size="11.44" text-anchor="middle" textLength="21.47" lengthAdjust="spacingAndGlyphs">+5V</text>
<polyline points="871.5,321.5 878.5,321.5" stroke="#008400" stroke-width="1.0" fill="none"/>
<line x1="878.5" y1="321.5" x2="889.5" y2="321.5" stroke="#840000" stroke-width="1.0"/>
<line x1="895.5" y1="321.5" x2="906.5" y2="321.5" stroke="#840000" stroke-width="1.0"/>
<line x1="889.5" y1="312.5" x2="889.5" y2="330.5" stroke="#840000" stroke-width="2.0"/>
<line x1="895.5" y1="312.5" x2="895.5" y2="330.5" stroke="#840000" stroke-width="2.0"/>
<text transform="translate(894.42 310.88)" fill="#008484" stroke="#008484" font-size="11.44" text-anchor="middle" textLength="32.54" lengthAdjust="spacingAndGlyphs">100nF</text>
<text transform="translate(895.27 338.92)" fill="#008484" stroke="#008484" font-size="11.44" text-anchor="middle" textLength="20.46" lengthAdjust="spacingAndGlyphs">C14</text>
<polyline points="906.5,321.5 913.5,321.5" stroke="#008400" stroke-width="1.0" fill="none"/>
<line x1="913.5" y1="321.5" x2="913.5" y2="328.5" stroke="#840000" stroke-width="1.0"/>
<polygon points="906.5,328.5 920.5,328.5 913.5,335.5" stroke="#840000" stroke-width="1.0" fill="none"/>
<text transform="translate(913.86 350.33)" fill="#008484" stroke="#008484" font-size="11.44" text-anchor="middle" textLength="27.51" lengthAdjust="spacingAndGlyphs">GNDA</text>
<line x1="871.5" y1="391.5" x2="871.5" y2="413.5" stroke="#840000" stroke-width="1.0"/>
<polyline points="871.5,413.5 871.5,420.5" stroke="#008400" stroke-width="1.0" fill="none"/>
<rect x="868.7" y="417.7" width="5.6" height="5.6" fill="#008400"/>
<line x1="871.5" y1="420.5" x2="871.5" y2="427.5" stroke="#840000" stroke-width="1.0"/>
<polygon points="864.5,427.5 878.5,427.5 871.5,434.5" stroke="#840000" stroke-width="1.0" fill="none"/>
<text transform="translate(871.59 448.96)" fill="#008484" stroke="#008484" font-size="11.44" text-anchor="middle" textLength="27.51" lengthAdjust="spacingAndGlyphs">GNDA</text>
<line x1="885.5" y1="384.5" x2="885.5" y2="413.5" stroke="#840000" stroke-width="1.0"/>
<polyline points="885.5,413.5 885.5,420.5 871.5,420.5" stroke="#008400" stroke-width="1.0" fill="none"/>
<text transform="translate(870.15 338.96) rotate(-90)" fill="#840000" stroke="#840000" font-size="11.44" text-anchor="middle" textLength="6.71" lengthAdjust="spacingAndGlyphs">4</text>
<text transform="translate(870.15 402.08) rotate(-90)" fill="#840000" stroke="#840000" font-size="11.44" text-anchor="middle" textLength="6.71" lengthAdjust="spacingAndGlyphs">2</text>
<text transform="translate(885.79 398.98) rotate(-90)" fill="#840000" stroke="#840000" font-size="11.44" text-anchor="middle" textLength="6.71" lengthAdjust="spacingAndGlyphs">6</text>
<text transform="translate(863.14 361.75)" fill="#008484" stroke="#008484" font-size="11.44" text-anchor="middle" textLength="8.72" lengthAdjust="spacingAndGlyphs">+</text>
<text transform="translate(863.14 388.66)" fill="#008484" stroke="#008484" font-size="11.44" text-anchor="middle" textLength="8.72" lengthAdjust="spacingAndGlyphs">-</text>
<text transform="translate(875.36 359.11) rotate(-90)" fill="#008484" stroke="#008484" font-size="11.44" text-anchor="middle" textLength="14.76" lengthAdjust="spacingAndGlyphs">V+</text>
<text transform="translate(875.36 384.04) rotate(-90)" fill="#008484" stroke="#008484" font-size="11.44" text-anchor="middle" textLength="14.76" lengthAdjust="spacingAndGlyphs">V-</text>
<text transform="translate(889.88 368.69) rotate(-90)" fill="#008484" stroke="#008484" font-size="11.44" text-anchor="middle" textLength="28.52" lengthAdjust="spacingAndGlyphs">SHDN</text>
<text transform="translate(849.9 396.55)" fill="#008484" stroke="#008484" font-size="11.44" text-anchor="middle" textLength="14.09" lengthAdjust="spacingAndGlyphs">U3</text>
<text transform="translate(822.28 410.36)" fill="#008484" stroke="#008484" font-size="11.44" text-anchor="middle" textLength="70.79" lengthAdjust="spacingAndGlyphs">TLV3501_DBV</text>
<polygon points="984.5,328.5 1075.5,384.5 984.5,441.5" stroke="#840000" stroke-width="1.0" fill="#ffffc2"/>
<line x1="970.5" y1="370.5" x2="984.5" y2="370.5" stroke="#840000" stroke-width="1.0"/>
<line x1="970.5" y1="398.5" x2="984.5" y2="398.5" stroke="#840000" stroke-width="1.0"/>
<text transform="translate(976.85 369.21)" fill="#840000" stroke="#840000" font-size="11.44" text-anchor="middle" textLength="6.71" lengthAdjust="spacingAndGlyphs">5</text>
<text transform="translate(976.85 397.68)" fill="#840000" stroke="#840000" font-size="11.44" text-anchor="middle" textLength="6.71" lengthAdjust="spacingAndGlyphs">7</text>
<text transform="translate(987.84 374.57)" fill="#008484" stroke="#008484" font-size="11.44" textLength="10.06" lengthAdjust="spacingAndGlyphs">IN</text>
<text transform="translate(987.84 402.75)" fill="#008484" stroke="#008484" font-size="11.44" textLength="17.44" lengthAdjust="spacingAndGlyphs">NIN</text>
<polyline points="970.5,398.5 970.5,427.5" stroke="#008400" stroke-width="1.0" fill="none"/>
<line x1="970.5" y1="427.5" x2="970.5" y2="434.5" stroke="#840000" stroke-width="1.0"/>
<polygon points="963.5,434.5 977.5,434.5 970.5,441.5" stroke="#840000" stroke-width="1.0" fill="none"/>
<text transform="translate(970.22 456.01)" fill="#008484" stroke="#008484" font-size="11.44" text-anchor="middle" textLength="27.51" lengthAdjust="spacingAndGlyphs">GNDA</text>
<line x1="1019.5" y1="350.5" x2="1019.5" y2="331.5" stroke="#840000" stroke-width="1.0"/>
<polyline points="1019.5,331.5 1019.5,314.5" stroke="#008400" stroke-width="1.0" fill="none"/>
<rect x="1016.7" y="311.7" width="5.6" height="5.6" fill="#008400"/>
<line x1="1019.5" y1="314.5" x2="1019.5" y2="300.5" stroke="#840000" stroke-width="1.0"/>
<polyline points="1015.5,307.5 1019.5,300.5 1023.5,307.5" stroke="#840000" stroke-width="1.0" fill="none"/>
<text transform="translate(1019.54 294.54)" fill="#008484" stroke="#008484" font-size="11.44" text-anchor="middle" textLength="21.47" lengthAdjust="spacingAndGlyphs">+5V</text>
<polyline points="1019.5,314.5 1026.5,314.5" stroke="#008400" stroke-width="1.0" fill="none"/>
<line x1="1026.5" y1="314.5" x2="1037.5" y2="314.5" stroke="#840000" stroke-width="1.0"/>
<line x1="1043.5" y1="314.5" x2="1054.5" y2="314.5" stroke="#840000" stroke-width="1.0"/>
<line x1="1037.5" y1="305.5" x2="1037.5" y2="323.5" stroke="#840000" stroke-width="2.0"/>
<line x1="1043.5" y1="305.5" x2="1043.5" y2="323.5" stroke="#840000" stroke-width="2.0"/>
<text transform="translate(1042.51 303.84)" fill="#008484" stroke="#008484" font-size="11.44" text-anchor="middle" textLength="32.54" lengthAdjust="spacingAndGlyphs">100nF</text>
<text transform="translate(1044.2 331.74)" fill="#008484" stroke="#008484" font-size="11.44" text-anchor="middle" textLength="20.46" lengthAdjust="spacingAndGlyphs">C17</text>
<polyline points="1054.5,314.5 1061.5,314.5" stroke="#008400" stroke-width="1.0" fill="none"/>
<line x1="1061.5" y1="314.5" x2="1061.5" y2="321.5" stroke="#840000" stroke-width="1.0"/>
<polygon points="1054.5,321.5 1068.5,321.5 1061.5,328.5" stroke="#840000" stroke-width="1.0" fill="none"/>
<text transform="translate(1061.81 343.29)" fill="#008484" stroke="#008484" font-size="11.44" text-anchor="middle" textLength="27.51" lengthAdjust="spacingAndGlyphs">GNDA</text>
<line x1="1019.5" y1="419.5" x2="1019.5" y2="441.5" stroke="#840000" stroke-width="1.0"/>
<polyline points="1019.5,441.5 1019.5,448.5" stroke="#008400" stroke-width="1.0" fill="none"/>
<line x1="1019.5" y1="448.5" x2="1019.5" y2="455.5" stroke="#840000" stroke-width="1.0"/>
<polygon points="1012.5,455.5 1026.5,455.5 1019.5,462.5" stroke="#840000" stroke-width="1.0" fill="none"/>
<text transform="translate(1019.54 477.14)" fill="#008484" stroke="#008484" font-size="11.44" text-anchor="middle" textLength="27.51" lengthAdjust="spacingAndGlyphs">GNDA</text>
<text transform="translate(1016.83 338.96) rotate(-90)" fill="#840000" stroke="#840000" font-size="11.44" text-anchor="middle" textLength="6.71" lengthAdjust="spacingAndGlyphs">4</text>
<text transform="translate(1018.94 430.12) rotate(-90)" fill="#840000" stroke="#840000" font-size="11.44" text-anchor="middle" textLength="6.71" lengthAdjust="spacingAndGlyphs">8</text>
<text transform="translate(1023.31 366.57) rotate(-90)" fill="#008484" stroke="#008484" font-size="11.44" text-anchor="middle" textLength="20.13" lengthAdjust="spacingAndGlyphs">VCC</text>
<text transform="translate(1023.31 408.14) rotate(-90)" fill="#008484" stroke="#008484" font-size="11.44" text-anchor="middle" textLength="21.47" lengthAdjust="spacingAndGlyphs">GND</text>
<line x1="1053.5" y1="370.5" x2="1068.5" y2="370.5" stroke="#840000" stroke-width="1.0"/>
<text transform="translate(1061.81 368.65)" fill="#840000" stroke="#840000" font-size="11.44" text-anchor="middle" textLength="6.71" lengthAdjust="spacingAndGlyphs">3</text>
<text transform="translate(1051.95 374.57)" fill="#008484" stroke="#008484" font-size="11.44" text-anchor="end" textLength="20.13" lengthAdjust="spacingAndGlyphs">OUT</text>
<polyline points="1068.5,370.5 1075.5,370.5" stroke="#008400" stroke-width="1.0" fill="none"/>
<line x1="1075.5" y1="370.5" x2="1079.5" y2="370.5" stroke="#840000" stroke-width="1.0"/>
<line x1="1100.5" y1="370.5" x2="1104.5" y2="370.5" stroke="#840000" stroke-width="1.0"/>
<rect x="1079.5" y="366.5" width="21.0" height="9.0" fill="none" stroke="#840000" stroke-width="1.0"/>
<text transform="translate(1089.29 360.48)" fill="#008484" stroke="#008484" font-size="11.44" text-anchor="middle" textLength="13.75" lengthAdjust="spacingAndGlyphs">R7</text>
<text transform="translate(1090.69 387.95)" fill="#008484" stroke="#008484" font-size="11.44" text-anchor="middle" textLength="27.84" lengthAdjust="spacingAndGlyphs">10KΩ</text>
<polyline points="1104.5,370.5 1118.5,370.5" stroke="#008400" stroke-width="1.0" fill="none"/>
<rect x="1108.7" y="367.7" width="5.6" height="5.6" fill="#008400"/>
<polygon points="1118.5,370.5 1122.5,363.5 1180.5,363.5 1180.5,377.5 1122.5,377.5" stroke="#840000" stroke-width="1.0" fill="none"/>
<text transform="translate(1124.65 375.59)" fill="#840000" stroke="#840000" font-size="12.4" textLength="53.4" lengthAdjust="spacingAndGlyphs">freq_count</text>
<polyline points="1111.5,370.5 1111.5,384.5" stroke="#008400" stroke-width="1.0" fill="none"/>
<line x1="1111.5" y1="384.5" x2="1111.5" y2="388.5" stroke="#840000" stroke-width="1.0"/>
<line x1="1111.5" y1="409.5" x2="1111.5" y2="413.5" stroke="#840000" stroke-width="1.0"/>
<rect x="1106.5" y="388.5" width="9.0" height="21.0" fill="none" stroke="#840000" stroke-width="1.0"/>
<text transform="translate(1097.28 397.57) rotate(-90)" fill="#008484" stroke="#008484" font-size="11.44" text-anchor="middle" textLength="13.75" lengthAdjust="spacingAndGlyphs">R8</text>
<text transform="translate(1129.41 398.98) rotate(-90)" fill="#008484" stroke="#008484" font-size="11.44" text-anchor="middle" textLength="27.84" lengthAdjust="spacingAndGlyphs">30KΩ</text>
<polyline points="1111.5,413.5 1111.5,427.5" stroke="#008400" stroke-width="1.0" fill="none"/>
<line x1="1111.5" y1="427.5" x2="1111.5" y2="434.5" stroke="#840000" stroke-width="1.0"/>
<polygon points="1104.5,434.5 1118.5,434.5 1111.5,441.5" stroke="#840000" stroke-width="1.0" fill="none"/>
<text transform="translate(1111.12 456.01)" fill="#008484" stroke="#008484" font-size="11.44" text-anchor="middle" textLength="27.51" lengthAdjust="spacingAndGlyphs">GNDA</text>
<line x1="1053.5" y1="398.5" x2="1068.5" y2="398.5" stroke="#840000" stroke-width="1.0"/>
<path d="M1065.68,395.68L1071.32,401.32M1071.32,395.68L1065.68,401.32" stroke="#000084" stroke-width="1"/>
<text transform="translate(1060.4 395.7)" fill="#840000" stroke="#840000" font-size="11.44" text-anchor="middle" textLength="6.71" lengthAdjust="spacingAndGlyphs">1</text>
<text transform="translate(1051.95 402.75)" fill="#008484" stroke="#008484" font-size="11.44" text-anchor="end" textLength="27.51" lengthAdjust="spacingAndGlyphs">NOUT</text>
<text transform="translate(1050.26 416.84)" fill="#008484" stroke="#008484" font-size="11.44" text-anchor="middle" textLength="14.09" lengthAdjust="spacingAndGlyphs">U4</text>
<text transform="translate(1054.77 430.93)" fill="#008484" stroke="#008484" font-size="11.44" text-anchor="middle" textLength="63.07" lengthAdjust="spacingAndGlyphs">HMC363S8G</text>
<rect x="1287.5" y="335.5" width="134.0" height="71.0" fill="#ffffc2" stroke="#840000" stroke-width="1.0"/>
<line x1="1266.5" y1="342.5" x2="1287.5" y2="342.5" stroke="#840000" stroke-width="1.0"/>
<text transform="translate(1276.68 341.18)" fill="#840000" stroke="#840000" font-size="11.44" text-anchor="middle" textLength="6.71" lengthAdjust="spacingAndGlyphs">4</text>
<text transform="translate(1292.89 346.39)" fill="#008484" stroke="#008484" font-size="11.44" textLength="20.13" lengthAdjust="spacingAndGlyphs">INHI</text>
<line x1="1266.5" y1="356.5" x2="1287.5" y2="356.5" stroke="#840000" stroke-width="1.0"/>
<text transform="translate(1276.68 355.27)" fill="#840000" stroke="#840000" font-size="11.44" text-anchor="middle" textLength="6.71" lengthAdjust="spacingAndGlyphs">5</text>
<text transform="translate(1292.89 360.48)" fill="#008484" stroke="#008484" font-size="11.44" textLength="23.15" lengthAdjust="spacingAndGlyphs">INLO</text>
<line x1="1266.5" y1="370.5" x2="1287.5" y2="370.5" stroke="#840000" stroke-width="1.0"/>
<text transform="translate(1276.68 369.36)" fill="#840000" stroke="#840000" font-size="11.44" text-anchor="middle" textLength="6.71" lengthAdjust="spacingAndGlyphs">2</text>
<text transform="translate(1292.89 374.57)" fill="#008484" stroke="#008484" font-size="11.44" textLength="27.51" lengthAdjust="spacingAndGlyphs">CHPF</text>
<line x1="1266.5" y1="384.5" x2="1287.5" y2="384.5" stroke="#840000" stroke-width="1.0"/>
<text transform="translate(1276.68 383.45)" fill="#840000" stroke="#840000" font-size="11.44" text-anchor="middle" textLength="6.71" lengthAdjust="spacingAndGlyphs">3</text>
<text transform="translate(1292.89 388.66)" fill="#008484" stroke="#008484" font-size="11.44" textLength="26.17" lengthAdjust="spacingAndGlyphs">DECL</text>
<line x1="1266.5" y1="398.5" x2="1287.5" y2="398.5" stroke="#840000" stroke-width="1.0"/>
<text transform="translate(1276.68 397.54)" fill="#840000" stroke="#840000" font-size="11.44" text-anchor="middle" textLength="6.71" lengthAdjust="spacingAndGlyphs">6</text>
<text transform="translate(1292.89 402.75)" fill="#008484" stroke="#008484" font-size="11.44" textLength="26.17" lengthAdjust="spacingAndGlyphs">DECL</text>
<line x1="1421.5" y1="342.5" x2="1442.5" y2="342.5" stroke="#840000" stroke-width="1.0"/>
<text transform="translate(1431.67 341.18)" fill="#840000" stroke="#840000" font-size="11.44" text-anchor="middle" textLength="13.42" lengthAdjust="spacingAndGlyphs">12</text>
<text transform="translate(1414.06 346.39)" fill="#008484" stroke="#008484" font-size="11.44" text-anchor="end" textLength="26.17" lengthAdjust="spacingAndGlyphs">VOUT</text>
<line x1="1421.5" y1="356.5" x2="1442.5" y2="356.5" stroke="#840000" stroke-width="1.0"/>
<text transform="translate(1431.67 355.27)" fill="#840000" stroke="#840000" font-size="11.44" text-anchor="middle" textLength="13.42" lengthAdjust="spacingAndGlyphs">11</text>
<text transform="translate(1414.06 360.48)" fill="#008484" stroke="#008484" font-size="11.44" text-anchor="end" textLength="24.49" lengthAdjust="spacingAndGlyphs">VSET</text>
<line x1="1421.5" y1="370.5" x2="1442.5" y2="370.5" stroke="#840000" stroke-width="1.0"/>
<text transform="translate(1431.67 369.36)" fill="#840000" stroke="#840000" font-size="11.44" text-anchor="middle" textLength="13.42" lengthAdjust="spacingAndGlyphs">15</text>
<text transform="translate(1414.06 374.57)" fill="#008484" stroke="#008484" font-size="11.44" text-anchor="end" textLength="25.5" lengthAdjust="spacingAndGlyphs">VREF</text>
<line x1="1421.5" y1="384.5" x2="1442.5" y2="384.5" stroke="#840000" stroke-width="1.0"/>
<text transform="translate(1431.67 383.45)" fill="#840000" stroke="#840000" font-size="11.44" text-anchor="middle" textLength="13.42" lengthAdjust="spacingAndGlyphs">14</text>
<text transform="translate(1414.06 388.66)" fill="#008484" stroke="#008484" font-size="11.44" text-anchor="end" textLength="23.82" lengthAdjust="spacingAndGlyphs">VTGT</text>
<line x1="1421.5" y1="398.5" x2="1442.5" y2="398.5" stroke="#840000" stroke-width="1.0"/>
<text transform="translate(1431.67 397.54)" fill="#840000" stroke="#840000" font-size="11.44" text-anchor="middle" textLength="6.71" lengthAdjust="spacingAndGlyphs">9</text>
<text transform="translate(1414.06 402.75)" fill="#008484" stroke="#008484" font-size="11.44" text-anchor="end" textLength="25.83" lengthAdjust="spacingAndGlyphs">CLPF</text>
<line x1="1357.5" y1="335.5" x2="1357.5" y2="321.5" stroke="#840000" stroke-width="1.0"/>
<text transform="translate(1361.47 341.21) rotate(-90)" fill="#008484" stroke="#008484" font-size="11.44" text-anchor="end" textLength="27.17" lengthAdjust="spacingAndGlyphs">VPOS</text>
<text transform="translate(1355.83 327.12) rotate(-90)" fill="#840000" stroke="#840000" font-size="11.44" text-anchor="middle" textLength="13.42" lengthAdjust="spacingAndGlyphs">13</text>
<line x1="1329.5" y1="406.5" x2="1329.5" y2="427.5" stroke="#840000" stroke-width="1.0"/>
<text transform="translate(1333.29 400.39) rotate(-90)" fill="#008484" stroke="#008484" font-size="11.44" textLength="29.52" lengthAdjust="spacingAndGlyphs">PWDN</text>
<text transform="translate(1327.65 416.73) rotate(-90)" fill="#840000" stroke="#840000" font-size="11.44" text-anchor="middle" textLength="6.71" lengthAdjust="spacingAndGlyphs">7</text>
<line x1="1343.5" y1="406.5" x2="1343.5" y2="427.5" stroke="#840000" stroke-width="1.0"/>
<text transform="translate(1347.38 400.39) rotate(-90)" fill="#008484" stroke="#008484" font-size="11.44" textLength="30.53" lengthAdjust="spacingAndGlyphs">COMM</text>
<text transform="translate(1341.74 416.73) rotate(-90)" fill="#840000" stroke="#840000" font-size="11.44" text-anchor="middle" textLength="6.71" lengthAdjust="spacingAndGlyphs">1</text>
<line x1="1357.5" y1="406.5" x2="1357.5" y2="427.5" stroke="#840000" stroke-width="1.0"/>
<text transform="translate(1361.47 400.39) rotate(-90)" fill="#008484" stroke="#008484" font-size="11.44" textLength="30.53" lengthAdjust="spacingAndGlyphs">COMM</text>
<text transform="translate(1355.83 416.73) rotate(-90)" fill="#840000" stroke="#840000" font-size="11.44" text-anchor="middle" textLength="6.71" lengthAdjust="spacingAndGlyphs">8</text>
<line x1="1371.5" y1="406.5" x2="1371.5" y2="427.5" stroke="#840000" stroke-width="1.0"/>
<text transform="translate(1375.56 400.39) rotate(-90)" fill="#008484" stroke="#008484" font-size="11.44" textLength="28.52" lengthAdjust="spacingAndGlyphs">ACOM</text>
<text transform="translate(1369.92 416.73) rotate(-90)" fill="#840000" stroke="#840000" font-size="11.44" text-anchor="middle" textLength="13.42" lengthAdjust="spacingAndGlyphs">10</text>
<line x1="1385.5" y1="406.5" x2="1385.5" y2="427.5" stroke="#840000" stroke-width="1.0"/>
<text transform="translate(1389.65 400.39) rotate(-90)" fill="#008484" stroke="#008484" font-size="11.44" textLength="28.52" lengthAdjust="spacingAndGlyphs">ACOM</text>
<text transform="translate(1384.01 416.73) rotate(-90)" fill="#840000" stroke="#840000" font-size="11.44" text-anchor="middle" textLength="13.42" lengthAdjust="spacingAndGlyphs">16</text>
<polygon points="1252.5,342.5 1248.5,335.5 1198.5,335.5 1198.5,349.5 1248.5,349.5" stroke="#840000" stroke-width="1.0" fill="none"/>
<text transform="translate(1201.58 347.41)" fill="#840000" stroke="#840000" font-size="12.4" textLength="44.24" lengthAdjust="spacingAndGlyphs">fwd_sig</text>
<polyline points="1252.5,342.5 1266.5,342.5" stroke="#008400" stroke-width="1.0" fill="none"/>
<polyline points="1266.5,356.5 1202.5,356.5 1202.5,406.5" stroke="#008400" stroke-width="1.0" fill="none"/>
<line x1="1202.5" y1="406.5" x2="1202.5" y2="417.5" stroke="#840000" stroke-width="1.0"/>
<line x1="1202.5" y1="423.5" x2="1202.5" y2="434.5" stroke="#840000" stroke-width="1.0"/>
<line x1="1193.5" y1="417.5" x2="1211.5" y2="417.5" stroke="#840000" stroke-width="2.0"/>
<line x1="1193.5" y1="423.5" x2="1211.5" y2="423.5" stroke="#840000" stroke-width="2.0"/>
<polyline points="1266.5,370.5 1223.5,370.5 1223.5,406.5" stroke="#008400" stroke-width="1.0" fill="none"/>
<line x1="1223.5" y1="406.5" x2="1223.5" y2="417.5" stroke="#840000" stroke-width="1.0"/>
<line x1="1223.5" y1="423.5" x2="1223.5" y2="434.5" stroke="#840000" stroke-width="1.0"/>
<line x1="1215.5" y1="417.5" x2="1232.5" y2="417.5" stroke="#840000" stroke-width="2.0"/>
<line x1="1215.5" y1="423.5" x2="1232.5" y2="423.5" stroke="#840000" stroke-width="2.0"/>
<polyline points="1266.5,384.5 1244.5,384.5 1244.5,406.5" stroke="#008400" stroke-width="1.0" fill="none"/>
<line x1="1244.5" y1="406.5" x2="1244.5" y2="417.5" stroke="#840000" stroke-width="1.0"/>
<line x1="1244.5" y1="423.5" x2="1244.5" y2="434.5" stroke="#840000" stroke-width="1.0"/>
<line x1="1236.5" y1="417.5" x2="1253.5" y2="417.5" stroke="#840000" stroke-width="2.0"/>
<line x1="1236.5" y1="423.5" x2="1253.5" y2="423.5" stroke="#840000" stroke-width="2.0"/>
<polyline points="1266.5,398.5 1266.5,406.5" stroke="#008400" stroke-width="1.0" fill="none"/>
<line x1="1266.5" y1="406.5" x2="1266.5" y2="417.5" stroke="#840000" stroke-width="1.0"/>
<line x1="1266.5" y1="423.5" x2="1266.5" y2="434.5" stroke="#840000" stroke-width="1.0"/>
<line x1="1257.5" y1="417.5" x2="1274.5" y2="417.5" stroke="#840000" stroke-width="2.0"/>
<line x1="1257.5" y1="423.5" x2="1274.5" y2="423.5" stroke="#840000" stroke-width="2.0"/>
<polyline points="1202.5,434.5 1202.5,441.5 1266.5,441.5 1266.5,434.5" stroke="#008400" stroke-width="1.0" fill="none"/>
<polyline points="1223.5,434.5 1223.5,441.5" stroke="#008400" stroke-width="1.0" fill="none"/>
<polyline points="1244.5,434.5 1244.5,441.5" stroke="#008400" stroke-width="1.0" fill="none"/>
<rect x="1220.7" y="438.7" width="5.6" height="5.6" fill="#008400"/>
<rect x="1234.7" y="438.7" width="5.6" height="5.6" fill="#008400"/>
<rect x="1241.7" y="438.7" width="5.6" height="5.6" fill="#008400"/>
<polyline points="1237.5,441.5 1237.5,448.5" stroke="#008400" stroke-width="1.0" fill="none"/>
<line x1="1237.5" y1="448.5" x2="1237.5" y2="455.5" stroke="#840000" stroke-width="1.0"/>
<polygon points="1230.5,455.5 1244.5,455.5 1237.5,462.5" stroke="#840000" stroke-width="1.0" fill="none"/>
<text transform="translate(1237.93 477.14)" fill="#008484" stroke="#008484" font-size="11.44" text-anchor="middle" textLength="27.51" lengthAdjust="spacingAndGlyphs">GNDA</text>
<text transform="translate(1214.51 399.54) rotate(-90)" fill="#008484" stroke="#008484" font-size="11.44" text-anchor="middle" textLength="25.83" lengthAdjust="spacingAndGlyphs">10nF</text>
<text transform="translate(1214.51 430.54) rotate(-90)" fill="#008484" stroke="#008484" font-size="11.44" text-anchor="middle" textLength="20.46" lengthAdjust="spacingAndGlyphs">C23</text>
<text transform="translate(1235.08 402.5) rotate(-90)" fill="#008484" stroke="#008484" font-size="11.44" text-anchor="middle" textLength="19.12" lengthAdjust="spacingAndGlyphs">1nF</text>
<text transform="translate(1235.08 430.54) rotate(-90)" fill="#008484" stroke="#008484" font-size="11.44" text-anchor="middle" textLength="20.46" lengthAdjust="spacingAndGlyphs">C25</text>
<text transform="translate(1255.51 402.5) rotate(-90)" fill="#008484" stroke="#008484" font-size="11.44" text-anchor="middle" textLength="19.12" lengthAdjust="spacingAndGlyphs">1nF</text>
<text transform="translate(1255.51 430.54) rotate(-90)" fill="#008484" stroke="#008484" font-size="11.44" text-anchor="middle" textLength="20.46" lengthAdjust="spacingAndGlyphs">C28</text>
<text transform="translate(1283.27 415.18) rotate(-90)" fill="#008484" stroke="#008484" font-size="11.44" text-anchor="middle" textLength="19.12" lengthAdjust="spacingAndGlyphs">1nF</text>
<text transform="translate(1283.27 438.15) rotate(-90)" fill="#008484" stroke="#008484" font-size="11.44" text-anchor="middle" textLength="20.46" lengthAdjust="spacingAndGlyphs">C29</text>
<polyline points="1329.5,427.5 1329.5,434.5 1385.5,434.5 1385.5,427.5" stroke="#008400" stroke-width="1.0" fill="none"/>
<polyline points="1343.5,427.5 1343.5,434.5" stroke="#008400" stroke-width="1.0" fill="none"/>
<rect x="1340.7" y="431.7" width="5.6" height="5.6" fill="#008400"/>
<polyline points="1357.5,427.5 1357.5,434.5" stroke="#008400" stroke-width="1.0" fill="none"/>
<rect x="1354.7" y="431.7" width="5.6" height="5.6" fill="#008400"/>
<polyline points="1371.5,427.5 1371.5,434.5" stroke="#008400" stroke-width="1.0" fill="none"/>
<rect x="1368.7" y="431.7" width="5.6" height="5.6" fill="#008400"/>
<line x1="1357.5" y1="434.5" x2="1357.5" y2="441.5" stroke="#840000" stroke-width="1.0"/>
<polygon points="1350.5,441.5 1364.5,441.5 1357.5,448.5" stroke="#840000" stroke-width="1.0" fill="none"/>
<text transform="translate(1357.7 463.05)" fill="#008484" stroke="#008484" font-size="11.44" text-anchor="middle" textLength="27.51" lengthAdjust="spacingAndGlyphs">GNDA</text>
<polyline points="1357.5,321.5 1357.5,251.5" stroke="#008400" stroke-width="1.0" fill="none"/>
<line x1="1357.5" y1="251.5" x2="1357.5" y2="236.5" stroke="#840000" stroke-width="1.0"/>
<polyline points="1353.5,243.5 1357.5,236.5 1361.5,243.5" stroke="#840000" stroke-width="1.0" fill="none"/>
<text transform="translate(1357.7 231.13)" fill="#008484" stroke="#008484" font-size="11.44" text-anchor="middle" textLength="21.47" lengthAdjust="spacingAndGlyphs">+5V</text>
<rect x="1354.7" y="269.7" width="5.6" height="5.6" fill="#008400"/>
<rect x="1354.7" y="297.7" width="5.6" height="5.6" fill="#008400"/>
<line x1="1357.5" y1="272.5" x2="1368.5" y2="272.5" stroke="#840000" stroke-width="1.0"/>
<line x1="1374.5" y1="272.5" x2="1385.5" y2="272.5" stroke="#840000" stroke-width="1.0"/>
<line x1="1368.5" y1="263.5" x2="1368.5" y2="280.5" stroke="#840000" stroke-width="2.0"/>
<line x1="1374.5" y1="263.5" x2="1374.5" y2="280.5" stroke="#840000" stroke-width="2.0"/>
<text transform="translate(1373.2 248.04)" fill="#008484" stroke="#008484" font-size="11.44" text-anchor="middle" textLength="20.46" lengthAdjust="spacingAndGlyphs">C30</text>
<text transform="translate(1367.28 262.84)" fill="#008484" stroke="#008484" font-size="11.44" text-anchor="middle" textLength="19.12" lengthAdjust="spacingAndGlyphs">1nF</text>
<line x1="1357.5" y1="300.5" x2="1368.5" y2="300.5" stroke="#840000" stroke-width="1.0"/>
<line x1="1374.5" y1="300.5" x2="1385.5" y2="300.5" stroke="#840000" stroke-width="1.0"/>
<line x1="1368.5" y1="291.5" x2="1368.5" y2="309.5" stroke="#840000" stroke-width="2.0"/>
<line x1="1374.5" y1="291.5" x2="1374.5" y2="309.5" stroke="#840000" stroke-width="2.0"/>
<text transform="translate(1373.76 290.31)" fill="#008484" stroke="#008484" font-size="11.44" text-anchor="middle" textLength="32.54" lengthAdjust="spacingAndGlyphs">100nF</text>
<text transform="translate(1374.61 325.96)" fill="#008484" stroke="#008484" font-size="11.44" text-anchor="middle" textLength="20.46" lengthAdjust="spacingAndGlyphs">C31</text>
<polyline points="1385.5,272.5 1399.5,272.5 1399.5,300.5" stroke="#008400" stroke-width="1.0" fill="none"/>
<rect x="1396.7" y="297.7" width="5.6" height="5.6" fill="#008400"/>
<polyline points="1385.5,300.5 1399.5,300.5" stroke="#008400" stroke-width="1.0" fill="none"/>
<line x1="1399.5" y1="300.5" x2="1399.5" y2="307.5" stroke="#840000" stroke-width="1.0"/>
<polygon points="1392.5,307.5 1407.5,307.5 1399.5,314.5" stroke="#840000" stroke-width="1.0" fill="none"/>
<text transform="translate(1399.97 329.2)" fill="#008484" stroke="#008484" font-size="11.44" text-anchor="middle" textLength="27.51" lengthAdjust="spacingAndGlyphs">GNDA</text>
<text transform="translate(1316.42 331.45)" fill="#008484" stroke="#008484" font-size="11.44" text-anchor="middle" textLength="14.09" lengthAdjust="spacingAndGlyphs">U7</text>
<text transform="translate(1407.3 416.84)" fill="#008484" stroke="#008484" font-size="11.44" text-anchor="middle" textLength="39.92" lengthAdjust="spacingAndGlyphs">AD8362</text>
<polyline points="1442.5,342.5 1456.5,342.5" stroke="#008400" stroke-width="1.0" fill="none"/>
<rect x="1446.7" y="339.7" width="5.6" height="5.6" fill="#008400"/>
<polyline points="1442.5,356.5 1449.5,356.5 1449.5,342.5" stroke="#008400" stroke-width="1.0" fill="none"/>
<polygon points="1456.5,342.5 1460.5,335.5 1513.5,335.5 1513.5,349.5 1460.5,349.5" stroke="#840000" stroke-width="1.0" fill="none"/>
<text transform="translate(1462.81 347.41)" fill="#840000" stroke="#840000" font-size="12.4" textLength="47.91" lengthAdjust="spacingAndGlyphs">fwd_pwr</text>
<polyline points="1442.5,370.5 1449.5,370.5 1449.5,384.5 1442.5,384.5" stroke="#008400" stroke-width="1.0" fill="none"/>
<polyline points="1442.5,398.5 1449.5,398.5" stroke="#008400" stroke-width="1.0" fill="none"/>
<line x1="1449.5" y1="398.5" x2="1460.5" y2="398.5" stroke="#840000" stroke-width="1.0"/>
<line x1="1466.5" y1="398.5" x2="1477.5" y2="398.5" stroke="#840000" stroke-width="1.0"/>
<line x1="1460.5" y1="390.5" x2="1460.5" y2="407.5" stroke="#840000" stroke-width="2.0"/>
<line x1="1466.5" y1="390.5" x2="1466.5" y2="407.5" stroke="#840000" stroke-width="2.0"/>
<text transform="translate(1465.35 389.22)" fill="#008484" stroke="#008484" font-size="11.44" text-anchor="middle" textLength="32.54" lengthAdjust="spacingAndGlyphs">100nF</text>
<text transform="translate(1466.9 423.6)" fill="#008484" stroke="#008484" font-size="11.44" text-anchor="middle" textLength="20.46" lengthAdjust="spacingAndGlyphs">C32</text>
<polyline points="1477.5,398.5 1491.5,398.5" stroke="#008400" stroke-width="1.0" fill="none"/>
<line x1="1491.5" y1="398.5" x2="1491.5" y2="406.5" stroke="#840000" stroke-width="1.0"/>
<polygon points="1484.5,406.5 1498.5,406.5 1491.5,413.5" stroke="#840000" stroke-width="1.0" fill="none"/>
<text transform="translate(1491.56 427.83)" fill="#008484" stroke="#008484" font-size="11.44" text-anchor="middle" textLength="27.51" lengthAdjust="spacingAndGlyphs">GNDA</text>
<rect x="1301.5" y="610.5" width="84.0" height="155.0" fill="#ffffc2" stroke="#840000" stroke-width="1.0"/>
<line x1="1287.5" y1="624.5" x2="1301.5" y2="624.5" stroke="#840000" stroke-width="1.0"/>
<text transform="translate(1294.3 622.98)" fill="#840000" stroke="#840000" font-size="11.44" text-anchor="middle" textLength="13.42" lengthAdjust="spacingAndGlyphs">11</text>
<text transform="translate(1308.38 628.19)" fill="#008484" stroke="#008484" font-size="11.44" textLength="21.13" lengthAdjust="spacingAndGlyphs">CH0</text>
<line x1="1287.5" y1="638.5" x2="1301.5" y2="638.5" stroke="#840000" stroke-width="1.0"/>
<text transform="translate(1294.3 637.07)" fill="#840000" stroke="#840000" font-size="11.44" text-anchor="middle" textLength="13.42" lengthAdjust="spacingAndGlyphs">12</text>
<text transform="translate(1308.38 642.28)" fill="#008484" stroke="#008484" font-size="11.44" textLength="21.13" lengthAdjust="spacingAndGlyphs">CH1</text>
<line x1="1287.5" y1="652.5" x2="1301.5" y2="652.5" stroke="#840000" stroke-width="1.0"/>
<text transform="translate(1294.3 651.16)" fill="#840000" stroke="#840000" font-size="11.44" text-anchor="middle" textLength="13.42" lengthAdjust="spacingAndGlyphs">13</text>
<text transform="translate(1308.38 656.37)" fill="#008484" stroke="#008484" font-size="11.44" textLength="21.13" lengthAdjust="spacingAndGlyphs">CH2</text>
<line x1="1287.5" y1="666.5" x2="1301.5" y2="666.5" stroke="#840000" stroke-width="1.0"/>
<text transform="translate(1294.3 665.25)" fill="#840000" stroke="#840000" font-size="11.44" text-anchor="middle" textLength="13.42" lengthAdjust="spacingAndGlyphs">14</text>
<text transform="translate(1308.38 670.46)" fill="#008484" stroke="#008484" font-size="11.44" textLength="21.13" lengthAdjust="spacingAndGlyphs">CH3</text>
<line x1="1287.5" y1="680.5" x2="1301.5" y2="680.5" stroke="#840000" stroke-width="1.0"/>
<text transform="translate(1294.3 679.34)" fill="#840000" stroke="#840000" font-size="11.44" text-anchor="middle" textLength="13.42" lengthAdjust="spacingAndGlyphs">15</text>
<text transform="translate(1308.38 684.55)" fill="#008484" stroke="#008484" font-size="11.44" textLength="21.13" lengthAdjust="spacingAndGlyphs">CH4</text>
<line x1="1287.5" y1="694.5" x2="1301.5" y2="694.5" stroke="#840000" stroke-width="1.0"/>
<text transform="translate(1294.3 693.43)" fill="#840000" stroke="#840000" font-size="11.44" text-anchor="middle" textLength="13.42" lengthAdjust="spacingAndGlyphs">16</text>
<text transform="translate(1308.38 698.64)" fill="#008484" stroke="#008484" font-size="11.44" textLength="21.13" lengthAdjust="spacingAndGlyphs">CH5</text>
<line x1="1287.5" y1="708.5" x2="1301.5" y2="708.5" stroke="#840000" stroke-width="1.0"/>
<text transform="translate(1294.3 707.52)" fill="#840000" stroke="#840000" font-size="11.44" text-anchor="middle" textLength="13.42" lengthAdjust="spacingAndGlyphs">17</text>
<text transform="translate(1308.38 712.73)" fill="#008484" stroke="#008484" font-size="11.44" textLength="21.13" lengthAdjust="spacingAndGlyphs">CH6</text>
<line x1="1287.5" y1="723.5" x2="1301.5" y2="723.5" stroke="#840000" stroke-width="1.0"/>
<text transform="translate(1294.3 721.61)" fill="#840000" stroke="#840000" font-size="11.44" text-anchor="middle" textLength="13.42" lengthAdjust="spacingAndGlyphs">18</text>
<text transform="translate(1308.38 726.82)" fill="#008484" stroke="#008484" font-size="11.44" textLength="21.13" lengthAdjust="spacingAndGlyphs">CH7</text>
<line x1="1287.5" y1="751.5" x2="1301.5" y2="751.5" stroke="#840000" stroke-width="1.0"/>
<text transform="translate(1294.3 749.79)" fill="#840000" stroke="#840000" font-size="11.44" text-anchor="middle" textLength="13.42" lengthAdjust="spacingAndGlyphs">19</text>
<text transform="translate(1308.38 755.0)" fill="#008484" stroke="#008484" font-size="11.44" textLength="22.48" lengthAdjust="spacingAndGlyphs">COM</text>
<line x1="1385.5" y1="624.5" x2="1399.5" y2="624.5" stroke="#840000" stroke-width="1.0"/>
<text transform="translate(1392.92 622.98)" fill="#840000" stroke="#840000" font-size="11.44" text-anchor="middle" textLength="6.71" lengthAdjust="spacingAndGlyphs">5</text>
<text transform="translate(1381.65 628.19)" fill="#008484" stroke="#008484" font-size="11.44" text-anchor="end" textLength="19.79" lengthAdjust="spacingAndGlyphs">AD1</text>
<line x1="1385.5" y1="638.5" x2="1399.5" y2="638.5" stroke="#840000" stroke-width="1.0"/>
<text transform="translate(1392.92 637.07)" fill="#840000" stroke="#840000" font-size="11.44" text-anchor="middle" textLength="6.71" lengthAdjust="spacingAndGlyphs">4</text>
<text transform="translate(1381.65 642.28)" fill="#008484" stroke="#008484" font-size="11.44" text-anchor="end" textLength="19.79" lengthAdjust="spacingAndGlyphs">AD0</text>
<line x1="1385.5" y1="666.5" x2="1399.5" y2="666.5" stroke="#840000" stroke-width="1.0"/>
<text transform="translate(1392.92 665.25)" fill="#840000" stroke="#840000" font-size="11.44" text-anchor="middle" textLength="6.71" lengthAdjust="spacingAndGlyphs">6</text>
<text transform="translate(1381.65 670.46)" fill="#008484" stroke="#008484" font-size="11.44" text-anchor="end" textLength="19.46" lengthAdjust="spacingAndGlyphs">SCL</text>
<line x1="1385.5" y1="680.5" x2="1399.5" y2="680.5" stroke="#840000" stroke-width="1.0"/>
<text transform="translate(1392.92 679.34)" fill="#840000" stroke="#840000" font-size="11.44" text-anchor="middle" textLength="6.71" lengthAdjust="spacingAndGlyphs">7</text>
<text transform="translate(1381.65 684.55)" fill="#008484" stroke="#008484" font-size="11.44" text-anchor="end" textLength="19.79" lengthAdjust="spacingAndGlyphs">SDA</text>
<line x1="1385.5" y1="708.5" x2="1399.5" y2="708.5" stroke="#840000" stroke-width="1.0"/>
<text transform="translate(1392.92 707.52)" fill="#840000" stroke="#840000" font-size="11.44" text-anchor="middle" textLength="13.42" lengthAdjust="spacingAndGlyphs">20</text>
<text transform="translate(1381.65 712.73)" fill="#008484" stroke="#008484" font-size="11.44" text-anchor="end" textLength="25.5" lengthAdjust="spacingAndGlyphs">VREF</text>
<line x1="1385.5" y1="723.5" x2="1399.5" y2="723.5" stroke="#840000" stroke-width="1.0"/>
<text transform="translate(1392.92 721.61)" fill="#840000" stroke="#840000" font-size="11.44" text-anchor="middle" textLength="6.71" lengthAdjust="spacingAndGlyphs">1</text>
<text transform="translate(1381.65 726.82)" fill="#008484" stroke="#008484" font-size="11.44" text-anchor="end" textLength="48.98" lengthAdjust="spacingAndGlyphs">REFCOMP</text>
<rect x="1397.5" y="622.5" width="4" height="4" fill="none" stroke="#840000" stroke-width="1"/>
<rect x="1397.5" y="636.5" width="4" height="4" fill="none" stroke="#840000" stroke-width="1"/>
<line x1="1343.5" y1="610.5" x2="1343.5" y2="596.5" stroke="#840000" stroke-width="1.0"/>
<text transform="translate(1347.38 615.97) rotate(-90)" fill="#008484" stroke="#008484" font-size="11.44" text-anchor="end" textLength="20.13" lengthAdjust="spacingAndGlyphs">VDD</text>
<text transform="translate(1341.74 602.72) rotate(-90)" fill="#840000" stroke="#840000" font-size="11.44" text-anchor="middle" textLength="6.71" lengthAdjust="spacingAndGlyphs">3</text>
<line x1="1343.5" y1="765.5" x2="1343.5" y2="779.5" stroke="#840000" stroke-width="1.0"/>
<text transform="translate(1347.38 756.87) rotate(-90)" fill="#008484" stroke="#008484" font-size="11.44" textLength="21.47" lengthAdjust="spacingAndGlyphs">GND</text>
<text transform="translate(1341.74 773.77) rotate(-90)" fill="#840000" stroke="#840000" font-size="11.44" text-anchor="middle" textLength="6.71" lengthAdjust="spacingAndGlyphs">2</text>
<polygon points="1252.5,603.5 1248.5,596.5 1218.5,596.5 1218.5,610.5 1248.5,610.5" stroke="#840000" stroke-width="1.0" fill="none"/>
<text transform="translate(1221.59 608.08)" fill="#840000" stroke="#840000" font-size="12.4" textLength="24.23" lengthAdjust="spacingAndGlyphs">mag</text>
<polyline points="1252.5,603.5 1273.5,603.5 1273.5,624.5 1287.5,624.5" stroke="#008400" stroke-width="1.0" fill="none"/>
<polygon points="1252.5,624.5 1248.5,617.5 1221.5,617.5 1221.5,631.5 1248.5,631.5" stroke="#840000" stroke-width="1.0" fill="none"/>
<text transform="translate(1224.69 629.21)" fill="#840000" stroke="#840000" font-size="12.4" textLength="21.13" lengthAdjust="spacingAndGlyphs">vref</text>
<polyline points="1252.5,624.5 1266.5,624.5 1266.5,638.5 1287.5,638.5" stroke="#008400" stroke-width="1.0" fill="none"/>
<polygon points="1252.5,645.5 1248.5,638.5 1207.5,638.5 1207.5,652.5 1248.5,652.5" stroke="#840000" stroke-width="1.0" fill="none"/>
<text transform="translate(1211.02 650.35)" fill="#840000" stroke="#840000" font-size="12.4" textLength="34.8" lengthAdjust="spacingAndGlyphs">phase</text>
<polyline points="1252.5,645.5 1259.5,645.5 1259.5,652.5 1287.5,652.5" stroke="#008400" stroke-width="1.0" fill="none"/>
<polygon points="1252.5,666.5 1248.5,659.5 1187.5,659.5 1187.5,673.5 1248.5,673.5" stroke="#840000" stroke-width="1.0" fill="none"/>
<text transform="translate(1190.87 671.48)" fill="#840000" stroke="#840000" font-size="12.4" textLength="54.95" lengthAdjust="spacingAndGlyphs">shft_mag</text>
<polyline points="1252.5,666.5 1287.5,666.5" stroke="#008400" stroke-width="1.0" fill="none"/>
<polygon points="1252.5,687.5 1248.5,680.5 1189.5,680.5 1189.5,694.5 1248.5,694.5" stroke="#840000" stroke-width="1.0" fill="none"/>
<text transform="translate(1192.99 692.62)" fill="#840000" stroke="#840000" font-size="12.4" textLength="52.84" lengthAdjust="spacingAndGlyphs">shft_vref</text>
<polyline points="1252.5,687.5 1266.5,687.5 1266.5,680.5 1287.5,680.5" stroke="#008400" stroke-width="1.0" fill="none"/>
<polygon points="1252.5,708.5 1248.5,701.5 1177.5,701.5 1177.5,716.5 1248.5,716.5" stroke="#840000" stroke-width="1.0" fill="none"/>
<text transform="translate(1180.59 713.75)" fill="#840000" stroke="#840000" font-size="12.4" textLength="65.24" lengthAdjust="spacingAndGlyphs">shft_phase</text>
<polyline points="1252.5,708.5 1259.5,708.5 1259.5,694.5 1287.5,694.5" stroke="#008400" stroke-width="1.0" fill="none"/>
<polygon points="1252.5,730.5 1248.5,723.5 1194.5,723.5 1194.5,737.5 1248.5,737.5" stroke="#840000" stroke-width="1.0" fill="none"/>
<text transform="translate(1197.78 734.89)" fill="#840000" stroke="#840000" font-size="12.4" textLength="48.05" lengthAdjust="spacingAndGlyphs">fwd_pwr</text>
<polyline points="1252.5,730.5 1266.5,730.5 1266.5,708.5 1287.5,708.5" stroke="#008400" stroke-width="1.0" fill="none"/>
<polyline points="1287.5,723.5 1280.5,723.5 1280.5,765.5" stroke="#008400" stroke-width="1.0" fill="none"/>
<polyline points="1280.5,751.5 1287.5,751.5" stroke="#008400" stroke-width="1.0" fill="none"/>
<rect x="1277.7" y="748.7" width="5.6" height="5.6" fill="#008400"/>
<line x1="1280.5" y1="765.5" x2="1280.5" y2="772.5" stroke="#840000" stroke-width="1.0"/>
<polygon points="1273.5,772.5 1287.5,772.5 1280.5,779.5" stroke="#840000" stroke-width="1.0" fill="none"/>
<text transform="translate(1280.2 794.17)" fill="#008484" stroke="#008484" font-size="11.44" text-anchor="middle" textLength="27.51" lengthAdjust="spacingAndGlyphs">GNDA</text>
<polyline points="1343.5,596.5 1343.5,539.5" stroke="#008400" stroke-width="1.0" fill="none"/>
<line x1="1343.5" y1="539.5" x2="1343.5" y2="525.5" stroke="#840000" stroke-width="1.0"/>
<polyline points="1339.5,532.5 1343.5,525.5 1347.5,532.5" stroke="#840000" stroke-width="1.0" fill="none"/>
<text transform="translate(1343.61 519.98)" fill="#008484" stroke="#008484" font-size="11.44" text-anchor="middle" textLength="21.47" lengthAdjust="spacingAndGlyphs">+5V</text>
<rect x="1340.7" y="558.7" width="5.6" height="5.6" fill="#008400"/>
<polyline points="1343.5,561.5 1350.5,561.5" stroke="#008400" stroke-width="1.0" fill="none"/>
<line x1="1350.5" y1="561.5" x2="1361.5" y2="561.5" stroke="#840000" stroke-width="1.0"/>
<line x1="1367.5" y1="561.5" x2="1378.5" y2="561.5" stroke="#840000" stroke-width="1.0"/>
<line x1="1361.5" y1="552.5" x2="1361.5" y2="569.5" stroke="#840000" stroke-width="2.0"/>
<line x1="1367.5" y1="552.5" x2="1367.5" y2="569.5" stroke="#840000" stroke-width="2.0"/>
<text transform="translate(1367.0 536.6)" fill="#008484" stroke="#008484" font-size="11.44" text-anchor="middle" textLength="20.46" lengthAdjust="spacingAndGlyphs">C21</text>
<text transform="translate(1366.58 551.4)" fill="#008484" stroke="#008484" font-size="11.44" text-anchor="middle" textLength="32.54" lengthAdjust="spacingAndGlyphs">100nF</text>
<polyline points="1378.5,561.5 1392.5,561.5 1392.5,575.5" stroke="#008400" stroke-width="1.0" fill="none"/>
<line x1="1392.5" y1="575.5" x2="1392.5" y2="582.5" stroke="#840000" stroke-width="1.0"/>
<polygon points="1385.5,582.5 1399.5,582.5 1392.5,589.5" stroke="#840000" stroke-width="1.0" fill="none"/>
<text transform="translate(1392.92 603.95)" fill="#008484" stroke="#008484" font-size="11.44" text-anchor="middle" textLength="27.51" lengthAdjust="spacingAndGlyphs">GNDA</text>
<polyline points="1343.5,779.5 1343.5,786.5" stroke="#008400" stroke-width="1.0" fill="none"/>
<line x1="1343.5" y1="786.5" x2="1343.5" y2="793.5" stroke="#840000" stroke-width="1.0"/>
<polygon points="1336.5,793.5 1350.5,793.5 1343.5,800.5" stroke="#840000" stroke-width="1.0" fill="none"/>
<text transform="translate(1343.61 815.3)" fill="#008484" stroke="#008484" font-size="11.44" text-anchor="middle" textLength="27.51" lengthAdjust="spacingAndGlyphs">GNDA</text>
<text transform="translate(1358.4 776.42)" fill="#008484" stroke="#008484" font-size="11.44" text-anchor="middle" textLength="14.09" lengthAdjust="spacingAndGlyphs">U6</text>
<text transform="translate(1386.16 790.51)" fill="#008484" stroke="#008484" font-size="11.44" text-anchor="middle" textLength="84.88" lengthAdjust="spacingAndGlyphs">LTC2309_TSSOP</text>
<line x1="1414.5" y1="617.5" x2="1414.5" y2="620.5" stroke="#840000" stroke-width="1.0"/>
<line x1="1414.5" y1="642.5" x2="1414.5" y2="645.5" stroke="#840000" stroke-width="1.0"/>
<rect x="1409.5" y="620.5" width="9.0" height="22.0" fill="none" stroke="#840000" stroke-width="1.0"/>
<line x1="1456.5" y1="617.5" x2="1456.5" y2="620.5" stroke="#840000" stroke-width="1.0"/>
<line x1="1456.5" y1="642.5" x2="1456.5" y2="645.5" stroke="#840000" stroke-width="1.0"/>
<rect x="1452.5" y="620.5" width="8.0" height="22.0" fill="none" stroke="#840000" stroke-width="1.0"/>
<text transform="translate(1410.08 634.99) rotate(-90)" fill="#008484" stroke="#008484" font-size="11.44" text-anchor="middle" textLength="20.46" lengthAdjust="spacingAndGlyphs">R15</text>
<text transform="translate(1431.5 626.53) rotate(-90)" fill="#008484" stroke="#008484" font-size="11.44" text-anchor="middle" textLength="31.2" lengthAdjust="spacingAndGlyphs">1.7KΩ</text>
<text transform="translate(1453.05 634.99) rotate(-90)" fill="#008484" stroke="#008484" font-size="11.44" text-anchor="middle" textLength="20.46" lengthAdjust="spacingAndGlyphs">R16</text>
<text transform="translate(1473.48 626.53) rotate(-90)" fill="#008484" stroke="#008484" font-size="11.44" text-anchor="middle" textLength="31.2" lengthAdjust="spacingAndGlyphs">1.7KΩ</text>
<polyline points="1414.5,617.5 1414.5,596.5 1456.5,596.5 1456.5,617.5" stroke="#008400" stroke-width="1.0" fill="none"/>
<rect x="1432.7" y="593.7" width="5.6" height="5.6" fill="#008400"/>
<line x1="1435.5" y1="596.5" x2="1435.5" y2="582.5" stroke="#840000" stroke-width="1.0"/>
<polyline points="1430.5,589.5 1435.5,582.5 1439.5,589.5" stroke="#840000" stroke-width="1.0" fill="none"/>
<text transform="translate(1435.19 576.34)" fill="#008484" stroke="#008484" font-size="11.44" text-anchor="middle" textLength="31.53" lengthAdjust="spacingAndGlyphs">+3.3V</text>
<polyline points="1399.5,666.5 1414.5,666.5 1414.5,645.5" stroke="#008400" stroke-width="1.0" fill="none"/>
<rect x="1411.7" y="656.7" width="5.6" height="5.6" fill="#008400"/>
<polyline points="1414.5,659.5 1421.5,659.5" stroke="#008400" stroke-width="1.0" fill="none"/>
<polygon points="1421.5,659.5 1425.5,652.5 1447.5,652.5 1447.5,666.5 1425.5,666.5" stroke="#840000" stroke-width="1.0" fill="none"/>
<text transform="translate(1427.59 664.44)" fill="#840000" stroke="#840000" font-size="12.4" textLength="17.19" lengthAdjust="spacingAndGlyphs">SCL</text>
<polyline points="1399.5,680.5 1414.5,680.5 1414.5,673.5 1456.5,673.5 1456.5,645.5" stroke="#008400" stroke-width="1.0" fill="none"/>
<rect x="1453.7" y="656.7" width="5.6" height="5.6" fill="#008400"/>
<polyline points="1456.5,659.5 1463.5,659.5" stroke="#008400" stroke-width="1.0" fill="none"/>
<polygon points="1463.5,659.5 1467.5,652.5 1490.5,652.5 1490.5,666.5 1467.5,666.5" stroke="#840000" stroke-width="1.0" fill="none"/>
<text transform="translate(1469.86 664.44)" fill="#840000" stroke="#840000" font-size="12.4" textLength="17.47" lengthAdjust="spacingAndGlyphs">SDA</text>
<polyline points="1399.5,708.5 1491.5,708.5 1491.5,716.5" stroke="#008400" stroke-width="1.0" fill="none"/>
<line x1="1491.5" y1="716.5" x2="1491.5" y2="726.5" stroke="#840000" stroke-width="1.0"/>
<line x1="1491.5" y1="733.5" x2="1491.5" y2="744.5" stroke="#840000" stroke-width="1.0"/>
<line x1="1482.5" y1="726.5" x2="1500.5" y2="726.5" stroke="#840000" stroke-width="2.0"/>
<line x1="1482.5" y1="733.5" x2="1500.5" y2="733.5" stroke="#840000" stroke-width="2.0"/>
<polyline points="1491.5,744.5 1491.5,751.5" stroke="#008400" stroke-width="1.0" fill="none"/>
<line x1="1491.5" y1="751.5" x2="1491.5" y2="758.5" stroke="#840000" stroke-width="1.0"/>
<polygon points="1484.5,758.5 1498.5,758.5 1491.5,765.5" stroke="#840000" stroke-width="1.0" fill="none"/>
<text transform="translate(1491.56 780.08)" fill="#008484" stroke="#008484" font-size="11.44" text-anchor="middle" textLength="27.51" lengthAdjust="spacingAndGlyphs">GNDA</text>
<text transform="translate(1510.68 730.1) rotate(-90)" fill="#008484" stroke="#008484" font-size="11.44" text-anchor="middle" textLength="29.19" lengthAdjust="spacingAndGlyphs">2.2uF</text>
<text transform="translate(1524.21 730.1) rotate(-90)" fill="#008484" stroke="#008484" font-size="11.44" text-anchor="middle" textLength="20.46" lengthAdjust="spacingAndGlyphs">C27</text>
<polyline points="1399.5,723.5 1456.5,723.5 1456.5,730.5" stroke="#008400" stroke-width="1.0" fill="none"/>
<rect x="1425.7" y="720.7" width="5.6" height="5.6" fill="#008400"/>
<polyline points="1428.5,723.5 1428.5,730.5" stroke="#008400" stroke-width="1.0" fill="none"/>
<line x1="1428.5" y1="730.5" x2="1428.5" y2="741.5" stroke="#840000" stroke-width="1.0"/>
<line x1="1428.5" y1="747.5" x2="1428.5" y2="758.5" stroke="#840000" stroke-width="1.0"/>
<line x1="1419.5" y1="741.5" x2="1436.5" y2="741.5" stroke="#840000" stroke-width="2.0"/>
<line x1="1419.5" y1="747.5" x2="1436.5" y2="747.5" stroke="#840000" stroke-width="2.0"/>
<line x1="1456.5" y1="730.5" x2="1456.5" y2="741.5" stroke="#840000" stroke-width="1.0"/>
<line x1="1456.5" y1="747.5" x2="1456.5" y2="758.5" stroke="#840000" stroke-width="1.0"/>
<line x1="1447.5" y1="741.5" x2="1465.5" y2="741.5" stroke="#840000" stroke-width="2.0"/>
<line x1="1447.5" y1="747.5" x2="1465.5" y2="747.5" stroke="#840000" stroke-width="2.0"/>
<text transform="translate(1404.73 747.28) rotate(-90)" fill="#008484" stroke="#008484" font-size="11.44" text-anchor="middle" textLength="20.46" lengthAdjust="spacingAndGlyphs">C22</text>
<text transform="translate(1419.52 746.72) rotate(-90)" fill="#008484" stroke="#008484" font-size="11.44" text-anchor="middle" textLength="32.54" lengthAdjust="spacingAndGlyphs">100nF</text>
<text transform="translate(1474.89 744.19) rotate(-90)" fill="#008484" stroke="#008484" font-size="11.44" text-anchor="middle" textLength="25.83" lengthAdjust="spacingAndGlyphs">10uF</text>
<text transform="translate(1489.12 744.89) rotate(-90)" fill="#008484" stroke="#008484" font-size="11.44" text-anchor="middle" textLength="20.46" lengthAdjust="spacingAndGlyphs">C26</text>
<polyline points="1428.5,758.5 1428.5,765.5 1456.5,765.5 1456.5,758.5" stroke="#008400" stroke-width="1.0" fill="none"/>
<rect x="1439.7" y="762.7" width="5.6" height="5.6" fill="#008400"/>
<polyline points="1442.5,765.5 1442.5,772.5" stroke="#008400" stroke-width="1.0" fill="none"/>
<line x1="1442.5" y1="772.5" x2="1442.5" y2="779.5" stroke="#840000" stroke-width="1.0"/>
<polygon points="1435.5,779.5 1449.5,779.5 1442.5,786.5" stroke="#840000" stroke-width="1.0" fill="none"/>
<text transform="translate(1442.24 801.21)" fill="#008484" stroke="#008484" font-size="11.44" text-anchor="middle" textLength="27.51" lengthAdjust="spacingAndGlyphs">GNDA</text>
<rect x="160.5" y="370.5" width="281.0" height="648.0" fill="#ffffc2" stroke="#840000" stroke-width="1.0"/>
<line x1="117.5" y1="391.5" x2="160.5" y2="391.5" stroke="#840000" stroke-width="1.0"/>
<text transform="translate(138.92 390.49)" fill="#840000" stroke="#840000" font-size="11.44" text-anchor="middle" textLength="13.75" lengthAdjust="spacingAndGlyphs">D0</text>
<text transform="translate(167.1 395.7)" fill="#008484" stroke="#008484" font-size="11.44" textLength="40.93" lengthAdjust="spacingAndGlyphs">D0_RX0</text>
<circle cx="117.5" cy="391.5" r="2.8" fill="none" stroke="#840000" stroke-width="1"/>
<line x1="117.5" y1="406.5" x2="160.5" y2="406.5" stroke="#840000" stroke-width="1.0"/>
<text transform="translate(138.92 404.58)" fill="#840000" stroke="#840000" font-size="11.44" text-anchor="middle" textLength="13.75" lengthAdjust="spacingAndGlyphs">D1</text>
<text transform="translate(167.1 409.79)" fill="#008484" stroke="#008484" font-size="11.44" textLength="39.25" lengthAdjust="spacingAndGlyphs">D1_TX0</text>
<circle cx="117.5" cy="406.5" r="2.8" fill="none" stroke="#840000" stroke-width="1"/>
<line x1="117.5" y1="420.5" x2="160.5" y2="420.5" stroke="#840000" stroke-width="1.0"/>
<text transform="translate(138.92 418.67)" fill="#840000" stroke="#840000" font-size="11.44" text-anchor="middle" textLength="20.46" lengthAdjust="spacingAndGlyphs">D19</text>
<text transform="translate(167.1 423.88)" fill="#008484" stroke="#008484" font-size="11.44" textLength="47.64" lengthAdjust="spacingAndGlyphs">D19_RX1</text>
<circle cx="117.5" cy="420.5" r="2.8" fill="none" stroke="#840000" stroke-width="1"/>
<line x1="117.5" y1="434.5" x2="160.5" y2="434.5" stroke="#840000" stroke-width="1.0"/>
<text transform="translate(138.92 432.76)" fill="#840000" stroke="#840000" font-size="11.44" text-anchor="middle" textLength="20.46" lengthAdjust="spacingAndGlyphs">D18</text>
<text transform="translate(167.1 437.97)" fill="#008484" stroke="#008484" font-size="11.44" textLength="45.96" lengthAdjust="spacingAndGlyphs">D18_TX1</text>
<circle cx="117.5" cy="434.5" r="2.8" fill="none" stroke="#840000" stroke-width="1"/>
<line x1="117.5" y1="448.5" x2="160.5" y2="448.5" stroke="#840000" stroke-width="1.0"/>
<text transform="translate(138.92 446.85)" fill="#840000" stroke="#840000" font-size="11.44" text-anchor="middle" textLength="20.46" lengthAdjust="spacingAndGlyphs">D17</text>
<text transform="translate(167.1 452.06)" fill="#008484" stroke="#008484" font-size="11.44" textLength="47.64" lengthAdjust="spacingAndGlyphs">D17_RX2</text>
<circle cx="117.5" cy="448.5" r="2.8" fill="none" stroke="#840000" stroke-width="1"/>
<line x1="117.5" y1="462.5" x2="160.5" y2="462.5" stroke="#840000" stroke-width="1.0"/>
<text transform="translate(138.92 460.94)" fill="#840000" stroke="#840000" font-size="11.44" text-anchor="middle" textLength="20.46" lengthAdjust="spacingAndGlyphs">D16</text>
<text transform="translate(167.1 466.15)" fill="#008484" stroke="#008484" font-size="11.44" textLength="45.96" lengthAdjust="spacingAndGlyphs">D16_TX2</text>
<circle cx="117.5" cy="462.5" r="2.8" fill="none" stroke="#840000" stroke-width="1"/>
<line x1="117.5" y1="476.5" x2="160.5" y2="476.5" stroke="#840000" stroke-width="1.0"/>
<text transform="translate(138.92 475.03)" fill="#840000" stroke="#840000" font-size="11.44" text-anchor="middle" textLength="20.46" lengthAdjust="spacingAndGlyphs">D15</text>
<text transform="translate(167.1 480.24)" fill="#008484" stroke="#008484" font-size="11.44" textLength="47.64" lengthAdjust="spacingAndGlyphs">D15_RX3</text>
<circle cx="117.5" cy="476.5" r="2.8" fill="none" stroke="#840000" stroke-width="1"/>
<line x1="117.5" y1="490.5" x2="160.5" y2="490.5" stroke="#840000" stroke-width="1.0"/>
<text transform="translate(138.92 489.12)" fill="#840000" stroke="#840000" font-size="11.44" text-anchor="middle" textLength="20.46" lengthAdjust="spacingAndGlyphs">D14</text>
<text transform="translate(167.1 494.33)" fill="#008484" stroke="#008484" font-size="11.44" textLength="45.96" lengthAdjust="spacingAndGlyphs">D14_TX3</text>
<circle cx="117.5" cy="490.5" r="2.8" fill="none" stroke="#840000" stroke-width="1"/>
<line x1="117.5" y1="504.5" x2="160.5" y2="504.5" stroke="#840000" stroke-width="1.0"/>
<text transform="translate(138.92 503.21)" fill="#840000" stroke="#840000" font-size="11.44" text-anchor="middle" textLength="20.46" lengthAdjust="spacingAndGlyphs">D20</text>
<text transform="translate(167.1 508.42)" fill="#008484" stroke="#008484" font-size="11.44" textLength="46.97" lengthAdjust="spacingAndGlyphs">D20_SDA</text>
<circle cx="117.5" cy="504.5" r="2.8" fill="none" stroke="#840000" stroke-width="1"/>
<line x1="117.5" y1="518.5" x2="160.5" y2="518.5" stroke="#840000" stroke-width="1.0"/>
<text transform="translate(138.92 517.3)" fill="#840000" stroke="#840000" font-size="11.44" text-anchor="middle" textLength="20.46" lengthAdjust="spacingAndGlyphs">D21</text>
<text transform="translate(167.1 522.51)" fill="#008484" stroke="#008484" font-size="11.44" textLength="46.63" lengthAdjust="spacingAndGlyphs">D21_SCL</text>
<circle cx="117.5" cy="518.5" r="2.8" fill="none" stroke="#840000" stroke-width="1"/>
<line x1="117.5" y1="532.5" x2="160.5" y2="532.5" stroke="#840000" stroke-width="1.0"/>
<text transform="translate(138.92 531.39)" fill="#840000" stroke="#840000" font-size="11.44" text-anchor="middle" textLength="26.5" lengthAdjust="spacingAndGlyphs">SDA1</text>
<text transform="translate(167.1 536.6)" fill="#008484" stroke="#008484" font-size="11.44" textLength="26.5" lengthAdjust="spacingAndGlyphs">SDA1</text>
<line x1="117.5" y1="546.5" x2="160.5" y2="546.5" stroke="#840000" stroke-width="1.0"/>
<text transform="translate(138.92 545.48)" fill="#840000" stroke="#840000" font-size="11.44" text-anchor="middle" textLength="26.17" lengthAdjust="spacingAndGlyphs">SCL1</text>
<text transform="translate(167.1 550.69)" fill="#008484" stroke="#008484" font-size="11.44" textLength="26.17" lengthAdjust="spacingAndGlyphs">SCL1</text>
<line x1="117.5" y1="561.5" x2="160.5" y2="561.5" stroke="#840000" stroke-width="1.0"/>
<text transform="translate(138.92 559.57)" fill="#840000" stroke="#840000" font-size="11.44" text-anchor="middle" textLength="27.51" lengthAdjust="spacingAndGlyphs">CANR</text>
<text transform="translate(167.1 564.78)" fill="#008484" stroke="#008484" font-size="11.44" textLength="34.22" lengthAdjust="spacingAndGlyphs">CANRX</text>
<circle cx="117.5" cy="561.5" r="2.8" fill="none" stroke="#840000" stroke-width="1"/>
<line x1="117.5" y1="575.5" x2="160.5" y2="575.5" stroke="#840000" stroke-width="1.0"/>
<text transform="translate(138.92 573.66)" fill="#840000" stroke="#840000" font-size="11.44" text-anchor="middle" textLength="25.83" lengthAdjust="spacingAndGlyphs">CANT</text>
<text transform="translate(167.1 578.87)" fill="#008484" stroke="#008484" font-size="11.44" textLength="32.54" lengthAdjust="spacingAndGlyphs">CANTX</text>
<circle cx="117.5" cy="575.5" r="2.8" fill="none" stroke="#840000" stroke-width="1"/>
<line x1="117.5" y1="603.5" x2="160.5" y2="603.5" stroke="#840000" stroke-width="1.0"/>
<text transform="translate(138.92 601.84)" fill="#840000" stroke="#840000" font-size="11.44" text-anchor="middle" textLength="26.84" lengthAdjust="spacingAndGlyphs">DAC0</text>
<text transform="translate(167.1 607.05)" fill="#008484" stroke="#008484" font-size="11.44" textLength="26.84" lengthAdjust="spacingAndGlyphs">DAC0</text>
<circle cx="117.5" cy="603.5" r="2.8" fill="none" stroke="#840000" stroke-width="1"/>
<line x1="117.5" y1="617.5" x2="160.5" y2="617.5" stroke="#840000" stroke-width="1.0"/>
<text transform="translate(138.92 615.93)" fill="#840000" stroke="#840000" font-size="11.44" text-anchor="middle" textLength="26.84" lengthAdjust="spacingAndGlyphs">DAC1</text>
<text transform="translate(167.1 621.14)" fill="#008484" stroke="#008484" font-size="11.44" textLength="26.84" lengthAdjust="spacingAndGlyphs">DAC1</text>
<circle cx="117.5" cy="617.5" r="2.8" fill="none" stroke="#840000" stroke-width="1"/>
<line x1="117.5" y1="631.5" x2="160.5" y2="631.5" stroke="#840000" stroke-width="1.0"/>
<text transform="translate(138.92 630.02)" fill="#840000" stroke="#840000" font-size="11.44" text-anchor="middle" textLength="12.75" lengthAdjust="spacingAndGlyphs">A0</text>
<text transform="translate(167.1 635.23)" fill="#008484" stroke="#008484" font-size="11.44" textLength="12.75" lengthAdjust="spacingAndGlyphs">A0</text>
<circle cx="117.5" cy="631.5" r="2.8" fill="none" stroke="#840000" stroke-width="1"/>
<line x1="117.5" y1="645.5" x2="160.5" y2="645.5" stroke="#840000" stroke-width="1.0"/>
<text transform="translate(138.92 644.11)" fill="#840000" stroke="#840000" font-size="11.44" text-anchor="middle" textLength="12.75" lengthAdjust="spacingAndGlyphs">A1</text>
<text transform="translate(167.1 649.32)" fill="#008484" stroke="#008484" font-size="11.44" textLength="12.75" lengthAdjust="spacingAndGlyphs">A1</text>
<circle cx="117.5" cy="645.5" r="2.8" fill="none" stroke="#840000" stroke-width="1"/>
<line x1="117.5" y1="659.5" x2="160.5" y2="659.5" stroke="#840000" stroke-width="1.0"/>
<text transform="translate(138.92 658.2)" fill="#840000" stroke="#840000" font-size="11.44" text-anchor="middle" textLength="12.75" lengthAdjust="spacingAndGlyphs">A2</text>
<text transform="translate(167.1 663.41)" fill="#008484" stroke="#008484" font-size="11.44" textLength="12.75" lengthAdjust="spacingAndGlyphs">A2</text>
<circle cx="117.5" cy="659.5" r="2.8" fill="none" stroke="#840000" stroke-width="1"/>
<line x1="117.5" y1="673.5" x2="160.5" y2="673.5" stroke="#840000" stroke-width="1.0"/>
<text transform="translate(138.92 672.29)" fill="#840000" stroke="#840000" font-size="11.44" text-anchor="middle" textLength="12.75" lengthAdjust="spacingAndGlyphs">A3</text>
<text transform="translate(167.1 677.5)" fill="#008484" stroke="#008484" font-size="11.44" textLength="12.75" lengthAdjust="spacingAndGlyphs">A3</text>
<circle cx="117.5" cy="673.5" r="2.8" fill="none" stroke="#840000" stroke-width="1"/>
<line x1="117.5" y1="687.5" x2="160.5" y2="687.5" stroke="#840000" stroke-width="1.0"/>
<text transform="translate(138.92 686.38)" fill="#840000" stroke="#840000" font-size="11.44" text-anchor="middle" textLength="12.75" lengthAdjust="spacingAndGlyphs">A4</text>
<text transform="translate(167.1 691.59)" fill="#008484" stroke="#008484" font-size="11.44" textLength="12.75" lengthAdjust="spacingAndGlyphs">A4</text>
<circle cx="117.5" cy="687.5" r="2.8" fill="none" stroke="#840000" stroke-width="1"/>
<line x1="117.5" y1="701.5" x2="160.5" y2="701.5" stroke="#840000" stroke-width="1.0"/>
<text transform="translate(138.92 700.47)" fill="#840000" stroke="#840000" font-size="11.44" text-anchor="middle" textLength="12.75" lengthAdjust="spacingAndGlyphs">A5</text>
<text transform="translate(167.1 705.68)" fill="#008484" stroke="#008484" font-size="11.44" textLength="12.75" lengthAdjust="spacingAndGlyphs">A5</text>
<circle cx="117.5" cy="701.5" r="2.8" fill="none" stroke="#840000" stroke-width="1"/>
<line x1="117.5" y1="716.5" x2="160.5" y2="716.5" stroke="#840000" stroke-width="1.0"/>
<text transform="translate(138.92 714.56)" fill="#840000" stroke="#840000" font-size="11.44" text-anchor="middle" textLength="12.75" lengthAdjust="spacingAndGlyphs">A6</text>
<text transform="translate(167.1 719.77)" fill="#008484" stroke="#008484" font-size="11.44" textLength="12.75" lengthAdjust="spacingAndGlyphs">A6</text>
<circle cx="117.5" cy="716.5" r="2.8" fill="none" stroke="#840000" stroke-width="1"/>
<line x1="117.5" y1="730.5" x2="160.5" y2="730.5" stroke="#840000" stroke-width="1.0"/>
<text transform="translate(138.92 728.65)" fill="#840000" stroke="#840000" font-size="11.44" text-anchor="middle" textLength="12.75" lengthAdjust="spacingAndGlyphs">A7</text>
<text transform="translate(167.1 733.86)" fill="#008484" stroke="#008484" font-size="11.44" textLength="12.75" lengthAdjust="spacingAndGlyphs">A7</text>
<circle cx="117.5" cy="730.5" r="2.8" fill="none" stroke="#840000" stroke-width="1"/>
<line x1="117.5" y1="744.5" x2="160.5" y2="744.5" stroke="#840000" stroke-width="1.0"/>
<text transform="translate(138.92 742.74)" fill="#840000" stroke="#840000" font-size="11.44" text-anchor="middle" textLength="12.75" lengthAdjust="spacingAndGlyphs">A8</text>
<text transform="translate(167.1 747.95)" fill="#008484" stroke="#008484" font-size="11.44" textLength="12.75" lengthAdjust="spacingAndGlyphs">A8</text>
<circle cx="117.5" cy="744.5" r="2.8" fill="none" stroke="#840000" stroke-width="1"/>
<line x1="117.5" y1="758.5" x2="160.5" y2="758.5" stroke="#840000" stroke-width="1.0"/>
<text transform="translate(138.92 756.83)" fill="#840000" stroke="#840000" font-size="11.44" text-anchor="middle" textLength="12.75" lengthAdjust="spacingAndGlyphs">A9</text>
<text transform="translate(167.1 762.04)" fill="#008484" stroke="#008484" font-size="11.44" textLength="12.75" lengthAdjust="spacingAndGlyphs">A9</text>
<circle cx="117.5" cy="758.5" r="2.8" fill="none" stroke="#840000" stroke-width="1"/>
<line x1="117.5" y1="772.5" x2="160.5" y2="772.5" stroke="#840000" stroke-width="1.0"/>
<text transform="translate(138.92 770.92)" fill="#840000" stroke="#840000" font-size="11.44" text-anchor="middle" textLength="19.46" lengthAdjust="spacingAndGlyphs">A10</text>
<text transform="translate(167.1 776.13)" fill="#008484" stroke="#008484" font-size="11.44" textLength="19.46" lengthAdjust="spacingAndGlyphs">A10</text>
<circle cx="117.5" cy="772.5" r="2.8" fill="none" stroke="#840000" stroke-width="1"/>
<line x1="117.5" y1="786.5" x2="160.5" y2="786.5" stroke="#840000" stroke-width="1.0"/>
<text transform="translate(138.92 785.01)" fill="#840000" stroke="#840000" font-size="11.44" text-anchor="middle" textLength="19.46" lengthAdjust="spacingAndGlyphs">A11</text>
<text transform="translate(167.1 790.22)" fill="#008484" stroke="#008484" font-size="11.44" textLength="19.46" lengthAdjust="spacingAndGlyphs">A11</text>
<circle cx="117.5" cy="786.5" r="2.8" fill="none" stroke="#840000" stroke-width="1"/>
<line x1="117.5" y1="800.5" x2="160.5" y2="800.5" stroke="#840000" stroke-width="1.0"/>
<text transform="translate(138.92 799.1)" fill="#840000" stroke="#840000" font-size="11.44" text-anchor="middle" textLength="25.5" lengthAdjust="spacingAndGlyphs">AREF</text>
<text transform="translate(167.1 804.31)" fill="#008484" stroke="#008484" font-size="11.44" textLength="25.5" lengthAdjust="spacingAndGlyphs">AREF</text>
<circle cx="117.5" cy="800.5" r="2.8" fill="none" stroke="#840000" stroke-width="1"/>
<line x1="117.5" y1="828.5" x2="160.5" y2="828.5" stroke="#840000" stroke-width="1.0"/>
<text transform="translate(138.92 827.28)" fill="#840000" stroke="#840000" font-size="11.44" text-anchor="middle" textLength="25.83" lengthAdjust="spacingAndGlyphs">RST1</text>
<text transform="translate(167.1 832.49)" fill="#008484" stroke="#008484" font-size="11.44" textLength="31.87" lengthAdjust="spacingAndGlyphs">RESET</text>
<circle cx="117.5" cy="828.5" r="2.8" fill="none" stroke="#840000" stroke-width="1"/>
<line x1="117.5" y1="842.5" x2="160.5" y2="842.5" stroke="#840000" stroke-width="1.0"/>
<text transform="translate(138.92 841.37)" fill="#840000" stroke="#840000" font-size="11.44" text-anchor="middle" textLength="23.15" lengthAdjust="spacingAndGlyphs">IORF</text>
<text transform="translate(167.1 846.58)" fill="#008484" stroke="#008484" font-size="11.44" textLength="29.52" lengthAdjust="spacingAndGlyphs">IOREF</text>
<circle cx="117.5" cy="842.5" r="2.8" fill="none" stroke="#840000" stroke-width="1"/>
<line x1="117.5" y1="870.5" x2="160.5" y2="870.5" stroke="#840000" stroke-width="1.0"/>
<text transform="translate(138.92 869.55)" fill="#840000" stroke="#840000" font-size="11.44" text-anchor="middle" textLength="28.18" lengthAdjust="spacingAndGlyphs">GND1</text>
<text transform="translate(167.1 874.76)" fill="#008484" stroke="#008484" font-size="11.44" textLength="21.47" lengthAdjust="spacingAndGlyphs">GND</text>
<line x1="117.5" y1="885.5" x2="160.5" y2="885.5" stroke="#840000" stroke-width="1.0"/>
<text transform="translate(138.92 883.64)" fill="#840000" stroke="#840000" font-size="11.44" text-anchor="middle" textLength="28.18" lengthAdjust="spacingAndGlyphs">GND2</text>
<text transform="translate(167.1 888.85)" fill="#008484" stroke="#008484" font-size="11.44" textLength="21.47" lengthAdjust="spacingAndGlyphs">GND</text>
<line x1="117.5" y1="899.5" x2="160.5" y2="899.5" stroke="#840000" stroke-width="1.0"/>
<text transform="translate(138.92 897.73)" fill="#840000" stroke="#840000" font-size="11.44" text-anchor="middle" textLength="28.18" lengthAdjust="spacingAndGlyphs">GND3</text>
<text transform="translate(167.1 902.94)" fill="#008484" stroke="#008484" font-size="11.44" textLength="21.47" lengthAdjust="spacingAndGlyphs">GND</text>
<line x1="117.5" y1="913.5" x2="160.5" y2="913.5" stroke="#840000" stroke-width="1.0"/>
<text transform="translate(138.92 911.82)" fill="#840000" stroke="#840000" font-size="11.44" text-anchor="middle" textLength="28.18" lengthAdjust="spacingAndGlyphs">GND5</text>
<text transform="translate(167.1 917.03)" fill="#008484" stroke="#008484" font-size="11.44" textLength="21.47" lengthAdjust="spacingAndGlyphs">GND</text>
<line x1="117.5" y1="927.5" x2="160.5" y2="927.5" stroke="#840000" stroke-width="1.0"/>
<text transform="translate(138.92 925.91)" fill="#840000" stroke="#840000" font-size="11.44" text-anchor="middle" textLength="28.18" lengthAdjust="spacingAndGlyphs">GND6</text>
<text transform="translate(167.1 931.12)" fill="#008484" stroke="#008484" font-size="11.44" textLength="21.47" lengthAdjust="spacingAndGlyphs">GND</text>
<line x1="117.5" y1="941.5" x2="160.5" y2="941.5" stroke="#840000" stroke-width="1.0"/>
<text transform="translate(138.92 940.0)" fill="#840000" stroke="#840000" font-size="11.44" text-anchor="middle" textLength="19.46" lengthAdjust="spacingAndGlyphs">3V3</text>
<text transform="translate(167.1 945.21)" fill="#008484" stroke="#008484" font-size="11.44" textLength="22.81" lengthAdjust="spacingAndGlyphs">3.3V</text>
<line x1="117.5" y1="955.5" x2="160.5" y2="955.5" stroke="#840000" stroke-width="1.0"/>
<text transform="translate(138.92 954.09)" fill="#840000" stroke="#840000" font-size="11.44" text-anchor="middle" textLength="19.46" lengthAdjust="spacingAndGlyphs">5V1</text>
<text transform="translate(167.1 959.3)" fill="#008484" stroke="#008484" font-size="11.44" textLength="12.75" lengthAdjust="spacingAndGlyphs">5V</text>
<line x1="117.5" y1="969.5" x2="160.5" y2="969.5" stroke="#840000" stroke-width="1.0"/>
<text transform="translate(138.92 968.18)" fill="#840000" stroke="#840000" font-size="11.44" text-anchor="middle" textLength="19.46" lengthAdjust="spacingAndGlyphs">5V3</text>
<text transform="translate(167.1 973.39)" fill="#008484" stroke="#008484" font-size="11.44" textLength="12.75" lengthAdjust="spacingAndGlyphs">5V</text>
<line x1="117.5" y1="983.5" x2="160.5" y2="983.5" stroke="#840000" stroke-width="1.0"/>
<text transform="translate(138.92 982.27)" fill="#840000" stroke="#840000" font-size="11.44" text-anchor="middle" textLength="19.46" lengthAdjust="spacingAndGlyphs">5V4</text>
<text transform="translate(167.1 987.48)" fill="#008484" stroke="#008484" font-size="11.44" textLength="12.75" lengthAdjust="spacingAndGlyphs">5V</text>
<line x1="117.5" y1="997.5" x2="160.5" y2="997.5" stroke="#840000" stroke-width="1.0"/>
<text transform="translate(138.92 996.36)" fill="#840000" stroke="#840000" font-size="11.44" text-anchor="middle" textLength="16.1" lengthAdjust="spacingAndGlyphs">VIN</text>
<text transform="translate(167.1 1001.57)" fill="#008484" stroke="#008484" font-size="11.44" textLength="16.1" lengthAdjust="spacingAndGlyphs">VIN</text>
<circle cx="117.5" cy="997.5" r="2.8" fill="none" stroke="#840000" stroke-width="1"/>
<polyline points="160.5,515.5 165.5,518.5 160.5,522.5" stroke="#840000" stroke-width="1.0" fill="none"/>
<polyline points="160.5,543.5 165.5,546.5 160.5,550.5" stroke="#840000" stroke-width="1.0" fill="none"/>
<polyline points="290.5,370.5 293.5,376.5 297.5,370.5" stroke="#840000" stroke-width="1.0" fill="none"/>
<polyline points="153.5,828.5 153.5,821.5 160.5,828.5" stroke="#840000" stroke-width="1.0" fill="none"/>
<polyline points="336.5,363.5 329.5,363.5 336.5,370.5" stroke="#840000" stroke-width="1.0" fill="none"/>
<line x1="441.5" y1="391.5" x2="484.5" y2="391.5" stroke="#840000" stroke-width="1.0"/>
<text transform="translate(462.98 390.49)" fill="#840000" stroke="#840000" font-size="11.44" text-anchor="middle" textLength="13.75" lengthAdjust="spacingAndGlyphs">D2</text>
<text transform="translate(434.1 395.7)" fill="#008484" stroke="#008484" font-size="11.44" text-anchor="end" textLength="13.75" lengthAdjust="spacingAndGlyphs">D2</text>
<rect x="482.5" y="389.5" width="4" height="4" fill="none" stroke="#840000" stroke-width="1"/>
<line x1="441.5" y1="406.5" x2="484.5" y2="406.5" stroke="#840000" stroke-width="1.0"/>
<text transform="translate(462.98 404.58)" fill="#840000" stroke="#840000" font-size="11.44" text-anchor="middle" textLength="13.75" lengthAdjust="spacingAndGlyphs">D3</text>
<text transform="translate(434.1 409.79)" fill="#008484" stroke="#008484" font-size="11.44" text-anchor="end" textLength="13.75" lengthAdjust="spacingAndGlyphs">D3</text>
<rect x="482.5" y="404.5" width="4" height="4" fill="none" stroke="#840000" stroke-width="1"/>
<line x1="441.5" y1="420.5" x2="484.5" y2="420.5" stroke="#840000" stroke-width="1.0"/>
<text transform="translate(462.98 418.67)" fill="#840000" stroke="#840000" font-size="11.44" text-anchor="middle" textLength="13.75" lengthAdjust="spacingAndGlyphs">D4</text>
<text transform="translate(434.1 423.88)" fill="#008484" stroke="#008484" font-size="11.44" text-anchor="end" textLength="40.93" lengthAdjust="spacingAndGlyphs">D4_CS1</text>
<rect x="482.5" y="418.5" width="4" height="4" fill="none" stroke="#840000" stroke-width="1"/>
<line x1="441.5" y1="434.5" x2="484.5" y2="434.5" stroke="#840000" stroke-width="1.0"/>
<text transform="translate(462.98 432.76)" fill="#840000" stroke="#840000" font-size="11.44" text-anchor="middle" textLength="13.75" lengthAdjust="spacingAndGlyphs">D5</text>
<text transform="translate(434.1 437.97)" fill="#008484" stroke="#008484" font-size="11.44" text-anchor="end" textLength="13.75" lengthAdjust="spacingAndGlyphs">D5</text>
<rect x="482.5" y="432.5" width="4" height="4" fill="none" stroke="#840000" stroke-width="1"/>
<line x1="441.5" y1="448.5" x2="484.5" y2="448.5" stroke="#840000" stroke-width="1.0"/>
<text transform="translate(462.98 446.85)" fill="#840000" stroke="#840000" font-size="11.44" text-anchor="middle" textLength="13.75" lengthAdjust="spacingAndGlyphs">D6</text>
<text transform="translate(434.1 452.06)" fill="#008484" stroke="#008484" font-size="11.44" text-anchor="end" textLength="13.75" lengthAdjust="spacingAndGlyphs">D6</text>
<rect x="482.5" y="446.5" width="4" height="4" fill="none" stroke="#840000" stroke-width="1"/>
<line x1="441.5" y1="462.5" x2="484.5" y2="462.5" stroke="#840000" stroke-width="1.0"/>
<text transform="translate(462.98 460.94)" fill="#840000" stroke="#840000" font-size="11.44" text-anchor="middle" textLength="13.75" lengthAdjust="spacingAndGlyphs">D7</text>
<text transform="translate(434.1 466.15)" fill="#008484" stroke="#008484" font-size="11.44" text-anchor="end" textLength="13.75" lengthAdjust="spacingAndGlyphs">D7</text>
<rect x="482.5" y="460.5" width="4" height="4" fill="none" stroke="#840000" stroke-width="1"/>
<line x1="441.5" y1="476.5" x2="484.5" y2="476.5" stroke="#840000" stroke-width="1.0"/>
<text transform="translate(462.98 475.03)" fill="#840000" stroke="#840000" font-size="11.44" text-anchor="middle" textLength="13.75" lengthAdjust="spacingAndGlyphs">D8</text>
<text transform="translate(434.1 480.24)" fill="#008484" stroke="#008484" font-size="11.44" text-anchor="end" textLength="13.75" lengthAdjust="spacingAndGlyphs">D8</text>
<rect x="482.5" y="474.5" width="4" height="4" fill="none" stroke="#840000" stroke-width="1"/>
<line x1="441.5" y1="490.5" x2="484.5" y2="490.5" stroke="#840000" stroke-width="1.0"/>
<text transform="translate(462.98 489.12)" fill="#840000" stroke="#840000" font-size="11.44" text-anchor="middle" textLength="13.75" lengthAdjust="spacingAndGlyphs">D9</text>
<text transform="translate(434.1 494.33)" fill="#008484" stroke="#008484" font-size="11.44" text-anchor="end" textLength="13.75" lengthAdjust="spacingAndGlyphs">D9</text>
<rect x="482.5" y="488.5" width="4" height="4" fill="none" stroke="#840000" stroke-width="1"/>
<line x1="441.5" y1="504.5" x2="484.5" y2="504.5" stroke="#840000" stroke-width="1.0"/>
<text transform="translate(462.98 503.21)" fill="#840000" stroke="#840000" font-size="11.44" text-anchor="middle" textLength="20.46" lengthAdjust="spacingAndGlyphs">D10</text>
<text transform="translate(434.1 508.42)" fill="#008484" stroke="#008484" font-size="11.44" text-anchor="end" textLength="47.64" lengthAdjust="spacingAndGlyphs">D10_CS0</text>
<rect x="482.5" y="502.5" width="4" height="4" fill="none" stroke="#840000" stroke-width="1"/>
<line x1="441.5" y1="518.5" x2="484.5" y2="518.5" stroke="#840000" stroke-width="1.0"/>
<text transform="translate(462.98 517.3)" fill="#840000" stroke="#840000" font-size="11.44" text-anchor="middle" textLength="20.46" lengthAdjust="spacingAndGlyphs">D11</text>
<text transform="translate(434.1 522.51)" fill="#008484" stroke="#008484" font-size="11.44" text-anchor="end" textLength="20.46" lengthAdjust="spacingAndGlyphs">D11</text>
<rect x="482.5" y="516.5" width="4" height="4" fill="none" stroke="#840000" stroke-width="1"/>
<line x1="441.5" y1="532.5" x2="484.5" y2="532.5" stroke="#840000" stroke-width="1.0"/>
<text transform="translate(462.98 531.39)" fill="#840000" stroke="#840000" font-size="11.44" text-anchor="middle" textLength="20.46" lengthAdjust="spacingAndGlyphs">D12</text>
<text transform="translate(434.1 536.6)" fill="#008484" stroke="#008484" font-size="11.44" text-anchor="end" textLength="20.46" lengthAdjust="spacingAndGlyphs">D12</text>
<rect x="482.5" y="530.5" width="4" height="4" fill="none" stroke="#840000" stroke-width="1"/>
<line x1="441.5" y1="546.5" x2="484.5" y2="546.5" stroke="#840000" stroke-width="1.0"/>
<text transform="translate(462.98 545.48)" fill="#840000" stroke="#840000" font-size="11.44" text-anchor="middle" textLength="20.46" lengthAdjust="spacingAndGlyphs">D13</text>
<text transform="translate(434.1 550.69)" fill="#008484" stroke="#008484" font-size="11.44" text-anchor="end" textLength="20.46" lengthAdjust="spacingAndGlyphs">D13</text>
<rect x="482.5" y="544.5" width="4" height="4" fill="none" stroke="#840000" stroke-width="1"/>
<line x1="441.5" y1="561.5" x2="484.5" y2="561.5" stroke="#840000" stroke-width="1.0"/>
<text transform="translate(462.98 559.57)" fill="#840000" stroke="#840000" font-size="11.44" text-anchor="middle" textLength="20.46" lengthAdjust="spacingAndGlyphs">D22</text>
<text transform="translate(434.1 564.78)" fill="#008484" stroke="#008484" font-size="11.44" text-anchor="end" textLength="20.46" lengthAdjust="spacingAndGlyphs">D22</text>
<line x1="441.5" y1="575.5" x2="484.5" y2="575.5" stroke="#840000" stroke-width="1.0"/>
<text transform="translate(462.98 573.66)" fill="#840000" stroke="#840000" font-size="11.44" text-anchor="middle" textLength="20.46" lengthAdjust="spacingAndGlyphs">D23</text>
<text transform="translate(434.1 578.87)" fill="#008484" stroke="#008484" font-size="11.44" text-anchor="end" textLength="20.46" lengthAdjust="spacingAndGlyphs">D23</text>
<rect x="482.5" y="573.5" width="4" height="4" fill="none" stroke="#840000" stroke-width="1"/>
<line x1="441.5" y1="589.5" x2="484.5" y2="589.5" stroke="#840000" stroke-width="1.0"/>
<text transform="translate(462.98 587.75)" fill="#840000" stroke="#840000" font-size="11.44" text-anchor="middle" textLength="20.46" lengthAdjust="spacingAndGlyphs">D24</text>
<text transform="translate(434.1 592.96)" fill="#008484" stroke="#008484" font-size="11.44" text-anchor="end" textLength="20.46" lengthAdjust="spacingAndGlyphs">D24</text>
<rect x="482.5" y="587.5" width="4" height="4" fill="none" stroke="#840000" stroke-width="1"/>
<line x1="441.5" y1="603.5" x2="484.5" y2="603.5" stroke="#840000" stroke-width="1.0"/>
<text transform="translate(462.98 601.84)" fill="#840000" stroke="#840000" font-size="11.44" text-anchor="middle" textLength="20.46" lengthAdjust="spacingAndGlyphs">D25</text>
<text transform="translate(434.1 607.05)" fill="#008484" stroke="#008484" font-size="11.44" text-anchor="end" textLength="20.46" lengthAdjust="spacingAndGlyphs">D25</text>
<rect x="482.5" y="601.5" width="4" height="4" fill="none" stroke="#840000" stroke-width="1"/>
<line x1="441.5" y1="617.5" x2="484.5" y2="617.5" stroke="#840000" stroke-width="1.0"/>
<text transform="translate(462.98 615.93)" fill="#840000" stroke="#840000" font-size="11.44" text-anchor="middle" textLength="20.46" lengthAdjust="spacingAndGlyphs">D26</text>
<text transform="translate(434.1 621.14)" fill="#008484" stroke="#008484" font-size="11.44" text-anchor="end" textLength="20.46" lengthAdjust="spacingAndGlyphs">D26</text>
<rect x="482.5" y="615.5" width="4" height="4" fill="none" stroke="#840000" stroke-width="1"/>
<line x1="441.5" y1="631.5" x2="484.5" y2="631.5" stroke="#840000" stroke-width="1.0"/>
<text transform="translate(462.98 630.02)" fill="#840000" stroke="#840000" font-size="11.44" text-anchor="middle" textLength="20.46" lengthAdjust="spacingAndGlyphs">D27</text>
<text transform="translate(434.1 635.23)" fill="#008484" stroke="#008484" font-size="11.44" text-anchor="end" textLength="20.46" lengthAdjust="spacingAndGlyphs">D27</text>
<rect x="482.5" y="629.5" width="4" height="4" fill="none" stroke="#840000" stroke-width="1"/>
<line x1="441.5" y1="645.5" x2="484.5" y2="645.5" stroke="#840000" stroke-width="1.0"/>
<text transform="translate(462.98 644.11)" fill="#840000" stroke="#840000" font-size="11.44" text-anchor="middle" textLength="20.46" lengthAdjust="spacingAndGlyphs">D28</text>
<text transform="translate(434.1 649.32)" fill="#008484" stroke="#008484" font-size="11.44" text-anchor="end" textLength="20.46" lengthAdjust="spacingAndGlyphs">D28</text>
<rect x="482.5" y="643.5" width="4" height="4" fill="none" stroke="#840000" stroke-width="1"/>
<line x1="441.5" y1="659.5" x2="484.5" y2="659.5" stroke="#840000" stroke-width="1.0"/>
<text transform="translate(462.98 658.2)" fill="#840000" stroke="#840000" font-size="11.44" text-anchor="middle" textLength="20.46" lengthAdjust="spacingAndGlyphs">D29</text>
<text transform="translate(434.1 663.41)" fill="#008484" stroke="#008484" font-size="11.44" text-anchor="end" textLength="20.46" lengthAdjust="spacingAndGlyphs">D29</text>
<rect x="482.5" y="657.5" width="4" height="4" fill="none" stroke="#840000" stroke-width="1"/>
<line x1="441.5" y1="673.5" x2="484.5" y2="673.5" stroke="#840000" stroke-width="1.0"/>
<text transform="translate(462.98 672.29)" fill="#840000" stroke="#840000" font-size="11.44" text-anchor="middle" textLength="20.46" lengthAdjust="spacingAndGlyphs">D30</text>
<text transform="translate(434.1 677.5)" fill="#008484" stroke="#008484" font-size="11.44" text-anchor="end" textLength="20.46" lengthAdjust="spacingAndGlyphs">D30</text>
<rect x="482.5" y="671.5" width="4" height="4" fill="none" stroke="#840000" stroke-width="1"/>
<line x1="441.5" y1="687.5" x2="484.5" y2="687.5" stroke="#840000" stroke-width="1.0"/>
<text transform="translate(462.98 686.38)" fill="#840000" stroke="#840000" font-size="11.44" text-anchor="middle" textLength="20.46" lengthAdjust="spacingAndGlyphs">D31</text>
<text transform="translate(434.1 691.59)" fill="#008484" stroke="#008484" font-size="11.44" text-anchor="end" textLength="20.46" lengthAdjust="spacingAndGlyphs">D31</text>
<rect x="482.5" y="685.5" width="4" height="4" fill="none" stroke="#840000" stroke-width="1"/>
<line x1="441.5" y1="701.5" x2="484.5" y2="701.5" stroke="#840000" stroke-width="1.0"/>
<text transform="translate(462.98 700.47)" fill="#840000" stroke="#840000" font-size="11.44" text-anchor="middle" textLength="20.46" lengthAdjust="spacingAndGlyphs">D32</text>
<text transform="translate(434.1 705.68)" fill="#008484" stroke="#008484" font-size="11.44" text-anchor="end" textLength="20.46" lengthAdjust="spacingAndGlyphs">D32</text>
<rect x="482.5" y="699.5" width="4" height="4" fill="none" stroke="#840000" stroke-width="1"/>
<line x1="441.5" y1="716.5" x2="484.5" y2="716.5" stroke="#840000" stroke-width="1.0"/>
<text transform="translate(462.98 714.56)" fill="#840000" stroke="#840000" font-size="11.44" text-anchor="middle" textLength="20.46" lengthAdjust="spacingAndGlyphs">D33</text>
<text transform="translate(434.1 719.77)" fill="#008484" stroke="#008484" font-size="11.44" text-anchor="end" textLength="20.46" lengthAdjust="spacingAndGlyphs">D33</text>
<rect x="482.5" y="714.5" width="4" height="4" fill="none" stroke="#840000" stroke-width="1"/>
<line x1="441.5" y1="730.5" x2="484.5" y2="730.5" stroke="#840000" stroke-width="1.0"/>
<text transform="translate(462.98 728.65)" fill="#840000" stroke="#840000" font-size="11.44" text-anchor="middle" textLength="20.46" lengthAdjust="spacingAndGlyphs">D34</text>
<text transform="translate(434.1 733.86)" fill="#008484" stroke="#008484" font-size="11.44" text-anchor="end" textLength="20.46" lengthAdjust="spacingAndGlyphs">D34</text>
<rect x="482.5" y="728.5" width="4" height="4" fill="none" stroke="#840000" stroke-width="1"/>
<line x1="441.5" y1="744.5" x2="484.5" y2="744.5" stroke="#840000" stroke-width="1.0"/>
<text transform="translate(462.98 742.74)" fill="#840000" stroke="#840000" font-size="11.44" text-anchor="middle" textLength="20.46" lengthAdjust="spacingAndGlyphs">D35</text>
<text transform="translate(434.1 747.95)" fill="#008484" stroke="#008484" font-size="11.44" text-anchor="end" textLength="20.46" lengthAdjust="spacingAndGlyphs">D35</text>
<rect x="482.5" y="742.5" width="4" height="4" fill="none" stroke="#840000" stroke-width="1"/>
<line x1="441.5" y1="758.5" x2="484.5" y2="758.5" stroke="#840000" stroke-width="1.0"/>
<text transform="translate(462.98 756.83)" fill="#840000" stroke="#840000" font-size="11.44" text-anchor="middle" textLength="20.46" lengthAdjust="spacingAndGlyphs">D36</text>
<text transform="translate(434.1 762.04)" fill="#008484" stroke="#008484" font-size="11.44" text-anchor="end" textLength="20.46" lengthAdjust="spacingAndGlyphs">D36</text>
<rect x="482.5" y="756.5" width="4" height="4" fill="none" stroke="#840000" stroke-width="1"/>
<line x1="441.5" y1="772.5" x2="484.5" y2="772.5" stroke="#840000" stroke-width="1.0"/>
<text transform="translate(462.98 770.92)" fill="#840000" stroke="#840000" font-size="11.44" text-anchor="middle" textLength="20.46" lengthAdjust="spacingAndGlyphs">D37</text>
<text transform="translate(434.1 776.13)" fill="#008484" stroke="#008484" font-size="11.44" text-anchor="end" textLength="20.46" lengthAdjust="spacingAndGlyphs">D37</text>
<rect x="482.5" y="770.5" width="4" height="4" fill="none" stroke="#840000" stroke-width="1"/>
<line x1="441.5" y1="786.5" x2="484.5" y2="786.5" stroke="#840000" stroke-width="1.0"/>
<text transform="translate(462.98 785.01)" fill="#840000" stroke="#840000" font-size="11.44" text-anchor="middle" textLength="20.46" lengthAdjust="spacingAndGlyphs">D38</text>
<text transform="translate(434.1 790.22)" fill="#008484" stroke="#008484" font-size="11.44" text-anchor="end" textLength="20.46" lengthAdjust="spacingAndGlyphs">D38</text>
<rect x="482.5" y="784.5" width="4" height="4" fill="none" stroke="#840000" stroke-width="1"/>
<line x1="441.5" y1="800.5" x2="484.5" y2="800.5" stroke="#840000" stroke-width="1.0"/>
<text transform="translate(462.98 799.1)" fill="#840000" stroke="#840000" font-size="11.44" text-anchor="middle" textLength="20.46" lengthAdjust="spacingAndGlyphs">D39</text>
<text transform="translate(434.1 804.31)" fill="#008484" stroke="#008484" font-size="11.44" text-anchor="end" textLength="20.46" lengthAdjust="spacingAndGlyphs">D39</text>
<rect x="482.5" y="798.5" width="4" height="4" fill="none" stroke="#840000" stroke-width="1"/>
<line x1="441.5" y1="814.5" x2="484.5" y2="814.5" stroke="#840000" stroke-width="1.0"/>
<text transform="translate(462.98 813.19)" fill="#840000" stroke="#840000" font-size="11.44" text-anchor="middle" textLength="20.46" lengthAdjust="spacingAndGlyphs">D40</text>
<text transform="translate(434.1 818.4)" fill="#008484" stroke="#008484" font-size="11.44" text-anchor="end" textLength="20.46" lengthAdjust="spacingAndGlyphs">D40</text>
<rect x="482.5" y="812.5" width="4" height="4" fill="none" stroke="#840000" stroke-width="1"/>
<line x1="441.5" y1="828.5" x2="484.5" y2="828.5" stroke="#840000" stroke-width="1.0"/>
<text transform="translate(462.98 827.28)" fill="#840000" stroke="#840000" font-size="11.44" text-anchor="middle" textLength="20.46" lengthAdjust="spacingAndGlyphs">D41</text>
<text transform="translate(434.1 832.49)" fill="#008484" stroke="#008484" font-size="11.44" text-anchor="end" textLength="20.46" lengthAdjust="spacingAndGlyphs">D41</text>
<rect x="482.5" y="826.5" width="4" height="4" fill="none" stroke="#840000" stroke-width="1"/>
<line x1="441.5" y1="842.5" x2="484.5" y2="842.5" stroke="#840000" stroke-width="1.0"/>
<text transform="translate(462.98 841.37)" fill="#840000" stroke="#840000" font-size="11.44" text-anchor="middle" textLength="20.46" lengthAdjust="spacingAndGlyphs">D42</text>
<text transform="translate(434.1 846.58)" fill="#008484" stroke="#008484" font-size="11.44" text-anchor="end" textLength="20.46" lengthAdjust="spacingAndGlyphs">D42</text>
<rect x="482.5" y="840.5" width="4" height="4" fill="none" stroke="#840000" stroke-width="1"/>
<line x1="441.5" y1="856.5" x2="484.5" y2="856.5" stroke="#840000" stroke-width="1.0"/>
<text transform="translate(462.98 855.46)" fill="#840000" stroke="#840000" font-size="11.44" text-anchor="middle" textLength="20.46" lengthAdjust="spacingAndGlyphs">D43</text>
<text transform="translate(434.1 860.67)" fill="#008484" stroke="#008484" font-size="11.44" text-anchor="end" textLength="20.46" lengthAdjust="spacingAndGlyphs">D43</text>
<rect x="482.5" y="854.5" width="4" height="4" fill="none" stroke="#840000" stroke-width="1"/>
<line x1="441.5" y1="870.5" x2="484.5" y2="870.5" stroke="#840000" stroke-width="1.0"/>
<text transform="translate(462.98 869.55)" fill="#840000" stroke="#840000" font-size="11.44" text-anchor="middle" textLength="20.46" lengthAdjust="spacingAndGlyphs">D44</text>
<text transform="translate(434.1 874.76)" fill="#008484" stroke="#008484" font-size="11.44" text-anchor="end" textLength="20.46" lengthAdjust="spacingAndGlyphs">D44</text>
<rect x="482.5" y="868.5" width="4" height="4" fill="none" stroke="#840000" stroke-width="1"/>
<line x1="441.5" y1="885.5" x2="484.5" y2="885.5" stroke="#840000" stroke-width="1.0"/>
<text transform="translate(462.98 883.64)" fill="#840000" stroke="#840000" font-size="11.44" text-anchor="middle" textLength="20.46" lengthAdjust="spacingAndGlyphs">D45</text>
<text transform="translate(434.1 888.85)" fill="#008484" stroke="#008484" font-size="11.44" text-anchor="end" textLength="20.46" lengthAdjust="spacingAndGlyphs">D45</text>
<rect x="482.5" y="883.5" width="4" height="4" fill="none" stroke="#840000" stroke-width="1"/>
<line x1="441.5" y1="899.5" x2="484.5" y2="899.5" stroke="#840000" stroke-width="1.0"/>
<text transform="translate(462.98 897.73)" fill="#840000" stroke="#840000" font-size="11.44" text-anchor="middle" textLength="20.46" lengthAdjust="spacingAndGlyphs">D46</text>
<text transform="translate(434.1 902.94)" fill="#008484" stroke="#008484" font-size="11.44" text-anchor="end" textLength="20.46" lengthAdjust="spacingAndGlyphs">D46</text>
<rect x="482.5" y="897.5" width="4" height="4" fill="none" stroke="#840000" stroke-width="1"/>
<line x1="441.5" y1="913.5" x2="484.5" y2="913.5" stroke="#840000" stroke-width="1.0"/>
<text transform="translate(462.98 911.82)" fill="#840000" stroke="#840000" font-size="11.44" text-anchor="middle" textLength="20.46" lengthAdjust="spacingAndGlyphs">D47</text>
<text transform="translate(434.1 917.03)" fill="#008484" stroke="#008484" font-size="11.44" text-anchor="end" textLength="20.46" lengthAdjust="spacingAndGlyphs">D47</text>
<rect x="482.5" y="911.5" width="4" height="4" fill="none" stroke="#840000" stroke-width="1"/>
<line x1="441.5" y1="927.5" x2="484.5" y2="927.5" stroke="#840000" stroke-width="1.0"/>
<text transform="translate(462.98 925.91)" fill="#840000" stroke="#840000" font-size="11.44" text-anchor="middle" textLength="20.46" lengthAdjust="spacingAndGlyphs">D48</text>
<text transform="translate(434.1 931.12)" fill="#008484" stroke="#008484" font-size="11.44" text-anchor="end" textLength="20.46" lengthAdjust="spacingAndGlyphs">D48</text>
<rect x="482.5" y="925.5" width="4" height="4" fill="none" stroke="#840000" stroke-width="1"/>
<line x1="441.5" y1="941.5" x2="484.5" y2="941.5" stroke="#840000" stroke-width="1.0"/>
<text transform="translate(462.98 940.0)" fill="#840000" stroke="#840000" font-size="11.44" text-anchor="middle" textLength="20.46" lengthAdjust="spacingAndGlyphs">D49</text>
<text transform="translate(434.1 945.21)" fill="#008484" stroke="#008484" font-size="11.44" text-anchor="end" textLength="20.46" lengthAdjust="spacingAndGlyphs">D49</text>
<rect x="482.5" y="939.5" width="4" height="4" fill="none" stroke="#840000" stroke-width="1"/>
<line x1="441.5" y1="955.5" x2="484.5" y2="955.5" stroke="#840000" stroke-width="1.0"/>
<text transform="translate(462.98 954.09)" fill="#840000" stroke="#840000" font-size="11.44" text-anchor="middle" textLength="20.46" lengthAdjust="spacingAndGlyphs">D50</text>
<text transform="translate(434.1 959.3)" fill="#008484" stroke="#008484" font-size="11.44" text-anchor="end" textLength="20.46" lengthAdjust="spacingAndGlyphs">D50</text>
<rect x="482.5" y="953.5" width="4" height="4" fill="none" stroke="#840000" stroke-width="1"/>
<line x1="441.5" y1="969.5" x2="484.5" y2="969.5" stroke="#840000" stroke-width="1.0"/>
<text transform="translate(462.98 968.18)" fill="#840000" stroke="#840000" font-size="11.44" text-anchor="middle" textLength="20.46" lengthAdjust="spacingAndGlyphs">D51</text>
<text transform="translate(434.1 973.39)" fill="#008484" stroke="#008484" font-size="11.44" text-anchor="end" textLength="20.46" lengthAdjust="spacingAndGlyphs">D51</text>
<rect x="482.5" y="967.5" width="4" height="4" fill="none" stroke="#840000" stroke-width="1"/>
<line x1="441.5" y1="983.5" x2="484.5" y2="983.5" stroke="#840000" stroke-width="1.0"/>
<text transform="translate(462.98 982.27)" fill="#840000" stroke="#840000" font-size="11.44" text-anchor="middle" textLength="20.46" lengthAdjust="spacingAndGlyphs">D52</text>
<text transform="translate(434.1 987.48)" fill="#008484" stroke="#008484" font-size="11.44" text-anchor="end" textLength="47.64" lengthAdjust="spacingAndGlyphs">D52_CS2</text>
<rect x="482.5" y="981.5" width="4" height="4" fill="none" stroke="#840000" stroke-width="1"/>
<line x1="441.5" y1="997.5" x2="484.5" y2="997.5" stroke="#840000" stroke-width="1.0"/>
<text transform="translate(462.98 996.36)" fill="#840000" stroke="#840000" font-size="11.44" text-anchor="middle" textLength="20.46" lengthAdjust="spacingAndGlyphs">D53</text>
<text transform="translate(434.1 1001.57)" fill="#008484" stroke="#008484" font-size="11.44" text-anchor="end" textLength="20.46" lengthAdjust="spacingAndGlyphs">D53</text>
<rect x="482.5" y="995.5" width="4" height="4" fill="none" stroke="#840000" stroke-width="1"/>
<line x1="265.5" y1="328.5" x2="265.5" y2="370.5" stroke="#840000" stroke-width="1.0"/>
<rect x="263.5" y="326.5" width="4" height="4" fill="none" stroke="#840000" stroke-width="1"/>
<text transform="translate(263.86 349.66) rotate(-90)" fill="#840000" stroke="#840000" font-size="11.44" text-anchor="middle" textLength="24.83" lengthAdjust="spacingAndGlyphs">MISO</text>
<text transform="translate(269.49 376.44) rotate(-90)" fill="#008484" stroke="#008484" font-size="11.44" text-anchor="end" textLength="47.97" lengthAdjust="spacingAndGlyphs">SPI_MISO</text>
<line x1="279.5" y1="328.5" x2="279.5" y2="370.5" stroke="#840000" stroke-width="1.0"/>
<rect x="277.5" y="326.5" width="4" height="4" fill="none" stroke="#840000" stroke-width="1"/>
<text transform="translate(277.95 349.66) rotate(-90)" fill="#840000" stroke="#840000" font-size="11.44" text-anchor="middle" textLength="24.83" lengthAdjust="spacingAndGlyphs">MOSI</text>
<text transform="translate(283.58 376.44) rotate(-90)" fill="#008484" stroke="#008484" font-size="11.44" text-anchor="end" textLength="47.97" lengthAdjust="spacingAndGlyphs">SPI_MOSI</text>
<line x1="293.5" y1="328.5" x2="293.5" y2="370.5" stroke="#840000" stroke-width="1.0"/>
<rect x="291.5" y="326.5" width="4" height="4" fill="none" stroke="#840000" stroke-width="1"/>
<text transform="translate(292.04 349.66) rotate(-90)" fill="#840000" stroke="#840000" font-size="11.44" text-anchor="middle" textLength="20.8" lengthAdjust="spacingAndGlyphs">SCK</text>
<text transform="translate(297.67 376.44) rotate(-90)" fill="#008484" stroke="#008484" font-size="11.44" text-anchor="end" textLength="43.95" lengthAdjust="spacingAndGlyphs">SPI_SCK</text>
<line x1="307.5" y1="328.5" x2="307.5" y2="370.5" stroke="#840000" stroke-width="1.0"/>
<rect x="305.5" y="326.5" width="4" height="4" fill="none" stroke="#840000" stroke-width="1"/>
<text transform="translate(306.13 349.66) rotate(-90)" fill="#840000" stroke="#840000" font-size="11.44" text-anchor="middle" textLength="19.46" lengthAdjust="spacingAndGlyphs">5V2</text>
<text transform="translate(311.76 376.44) rotate(-90)" fill="#008484" stroke="#008484" font-size="11.44" text-anchor="end" textLength="35.9" lengthAdjust="spacingAndGlyphs">SPI_5V</text>
<line x1="322.5" y1="328.5" x2="322.5" y2="370.5" stroke="#840000" stroke-width="1.0"/>
<rect x="320.5" y="326.5" width="4" height="4" fill="none" stroke="#840000" stroke-width="1"/>
<text transform="translate(320.22 349.66) rotate(-90)" fill="#840000" stroke="#840000" font-size="11.44" text-anchor="middle" textLength="28.18" lengthAdjust="spacingAndGlyphs">GND4</text>
<text transform="translate(325.85 376.44) rotate(-90)" fill="#008484" stroke="#008484" font-size="11.44" text-anchor="end" textLength="44.62" lengthAdjust="spacingAndGlyphs">SPI_GND</text>
<line x1="336.5" y1="328.5" x2="336.5" y2="370.5" stroke="#840000" stroke-width="1.0"/>
<rect x="334.5" y="326.5" width="4" height="4" fill="none" stroke="#840000" stroke-width="1"/>
<text transform="translate(334.31 349.66) rotate(-90)" fill="#840000" stroke="#840000" font-size="11.44" text-anchor="middle" textLength="25.83" lengthAdjust="spacingAndGlyphs">RST2</text>
<text transform="translate(339.94 376.44) rotate(-90)" fill="#008484" stroke="#008484" font-size="11.44" text-anchor="end" textLength="55.02" lengthAdjust="spacingAndGlyphs">SPI_RESET</text>
<polyline points="265.5,427.5 265.5,441.5 286.5,441.5" stroke="#840000" stroke-width="1.0" fill="none"/>
<text transform="translate(300.95 445.92)" fill="#840000" fill-opacity="0.82" font-size="14.18" text-anchor="middle" textLength="20.38" lengthAdjust="spacingAndGlyphs">SPI</text>
<polyline points="315.5,441.5 336.5,441.5 336.5,427.5" stroke="#840000" stroke-width="1.0" fill="none"/>
<polyline points="209.5,391.5 230.5,391.5 230.5,418.5" stroke="#840000" stroke-width="1.0" fill="none"/>
<polyline points="230.5,458.5 230.5,490.5 216.5,490.5" stroke="#840000" stroke-width="1.0" fill="none"/>
<text transform="translate(235.17 439.84) rotate(-90)" fill="#840000" fill-opacity="0.82" font-size="14.18" text-anchor="middle" textLength="35.78" lengthAdjust="spacingAndGlyphs">Serial</text>
<polyline points="216.5,504.5 230.5,504.5 230.5,513.5" stroke="#840000" stroke-width="1.0" fill="none"/>
<polyline points="230.5,534.5 230.5,546.5 195.5,546.5" stroke="#840000" stroke-width="1.0" fill="none"/>
<text transform="translate(235.17 523.68) rotate(-90)" fill="#840000" fill-opacity="0.82" font-size="14.18" text-anchor="middle" textLength="20.38" lengthAdjust="spacingAndGlyphs">I2C</text>
<polyline points="202.5,561.5 209.5,561.5 209.5,575.5 202.5,575.5" stroke="#840000" stroke-width="1.0" fill="none"/>
<polyline points="209.5,568.5 223.5,568.5" stroke="#840000" stroke-width="1.0" fill="none"/>
<text transform="translate(235.17 568.06) rotate(-90)" fill="#840000" fill-opacity="0.82" font-size="14.18" text-anchor="middle" textLength="25.38" lengthAdjust="spacingAndGlyphs">CAN</text>
<polyline points="195.5,603.5 230.5,603.5 230.5,652.5" stroke="#840000" stroke-width="1.0" fill="none"/>
<polyline points="230.5,751.5 230.5,800.5 195.5,800.5" stroke="#840000" stroke-width="1.0" fill="none"/>
<text transform="translate(235.17 701.91) rotate(-90)" fill="#840000" fill-opacity="0.82" font-size="14.18" text-anchor="middle" textLength="86.11" lengthAdjust="spacingAndGlyphs">Analogue I/O</text>
<polyline points="202.5,828.5 209.5,828.5 209.5,842.5 202.5,842.5" stroke="#840000" stroke-width="1.0" fill="none"/>
<polyline points="209.5,835.5 223.5,835.5" stroke="#840000" stroke-width="1.0" fill="none"/>
<text transform="translate(235.17 835.77) rotate(-90)" fill="#840000" fill-opacity="0.82" font-size="14.18" text-anchor="middle" textLength="32.03" lengthAdjust="spacingAndGlyphs">Misc.</text>
<polyline points="195.5,870.5 230.5,870.5 230.5,906.5" stroke="#840000" stroke-width="1.0" fill="none"/>
<polyline points="230.5,962.5 230.5,997.5 188.5,997.5" stroke="#840000" stroke-width="1.0" fill="none"/>
<text transform="translate(235.17 934.4) rotate(-90)" fill="#840000" fill-opacity="0.82" font-size="14.18" text-anchor="middle" textLength="38.69" lengthAdjust="spacingAndGlyphs">Power</text>
<polyline points="419.5,391.5 371.5,391.5 371.5,672.5" stroke="#840000" stroke-width="1.0" fill="none"/>
<polyline points="371.5,717.5 371.5,997.5 427.5,997.5" stroke="#840000" stroke-width="1.0" fill="none"/>
<text transform="translate(376.07 694.87) rotate(-90)" fill="#840000" fill-opacity="0.82" font-size="14.18" text-anchor="middle" textLength="29.95" lengthAdjust="spacingAndGlyphs">GPIO</text>
<polyline points="419.5,391.5 385.5,398.5 385.5,448.5" stroke="#840000" stroke-width="1.0" fill="none"/>
<polyline points="385.5,490.5 385.5,539.5 413.5,546.5" stroke="#840000" stroke-width="1.0" fill="none"/>
<text transform="translate(390.16 469.43) rotate(-90)" fill="#840000" fill-opacity="0.82" font-size="14.18" text-anchor="middle" textLength="28.7" lengthAdjust="spacingAndGlyphs">PWM</text>
<text transform="translate(302.36 678.26)" fill="#008484" fill-opacity="0.82" font-size="13.73" text-anchor="middle" textLength="122.78" lengthAdjust="spacingAndGlyphs">Arduino_Due_Shield</text>
<text transform="translate(300.95 699.39)" fill="#008484" fill-opacity="0.82" font-size="13.73" text-anchor="middle" textLength="23.35" lengthAdjust="spacingAndGlyphs">XA1</text>
<polygon points="96.5,525.5 92.5,518.5 70.5,518.5 70.5,532.5 92.5,532.5" stroke="#840000" stroke-width="1.0" fill="none"/>
<text transform="translate(73.96 530.58)" fill="#840000" stroke="#840000" font-size="12.4" textLength="16.49" lengthAdjust="spacingAndGlyphs">SDA</text>
<polyline points="96.5,525.5 103.5,525.5 103.5,532.5 117.5,532.5" stroke="#008400" stroke-width="1.0" fill="none"/>
<polygon points="96.5,553.5 92.5,546.5 70.5,546.5 70.5,561.5 92.5,561.5" stroke="#840000" stroke-width="1.0" fill="none"/>
<text transform="translate(73.96 558.76)" fill="#840000" stroke="#840000" font-size="12.4" textLength="16.49" lengthAdjust="spacingAndGlyphs">SCL</text>
<polyline points="96.5,553.5 103.5,553.5 103.5,546.5 117.5,546.5" stroke="#008400" stroke-width="1.0" fill="none"/>
<polyline points="484.5,561.5 498.5,561.5" stroke="#008400" stroke-width="1.0" fill="none"/>
<polygon points="498.5,561.5 502.5,553.5 560.5,553.5 560.5,568.5 502.5,568.5" stroke="#840000" stroke-width="1.0" fill="none"/>
<text transform="translate(504.69 565.81)" fill="#840000" stroke="#840000" font-size="12.4" textLength="53.12" lengthAdjust="spacingAndGlyphs">freq_count</text>
<polyline points="117.5,870.5 117.5,927.5" stroke="#008400" stroke-width="1.0" fill="none"/>
<rect x="114.7" y="867.7" width="5.6" height="5.6" fill="#008400"/>
<rect x="114.7" y="882.7" width="5.6" height="5.6" fill="#008400"/>
<rect x="114.7" y="896.7" width="5.6" height="5.6" fill="#008400"/>
<rect x="114.7" y="910.7" width="5.6" height="5.6" fill="#008400"/>
<polyline points="117.5,870.5 96.5,870.5" stroke="#008400" stroke-width="1.0" fill="none"/>
<line x1="96.5" y1="870.5" x2="96.5" y2="878.5" stroke="#840000" stroke-width="1.0"/>
<polygon points="89.5,878.5 103.5,878.5 96.5,885.5" stroke="#840000" stroke-width="1.0" fill="none"/>
<text transform="translate(96.64 899.84)" fill="#008484" stroke="#008484" font-size="11.44" text-anchor="middle" textLength="27.51" lengthAdjust="spacingAndGlyphs">GNDA</text>
<polyline points="117.5,941.5 96.5,941.5" stroke="#008400" stroke-width="1.0" fill="none"/>
<line x1="96.5" y1="941.5" x2="96.5" y2="927.5" stroke="#840000" stroke-width="1.0"/>
<polyline points="92.5,934.5 96.5,927.5 100.5,934.5" stroke="#840000" stroke-width="1.0" fill="none"/>
<text transform="translate(96.64 921.54)" fill="#008484" stroke="#008484" font-size="11.44" text-anchor="middle" textLength="31.53" lengthAdjust="spacingAndGlyphs">+3.3V</text>
<polyline points="117.5,955.5 117.5,983.5" stroke="#008400" stroke-width="1.0" fill="none"/>
<rect x="114.7" y="966.7" width="5.6" height="5.6" fill="#008400"/>
<rect x="114.7" y="980.7" width="5.6" height="5.6" fill="#008400"/>
<polyline points="117.5,983.5 96.5,983.5" stroke="#008400" stroke-width="1.0" fill="none"/>
<rect x="93.7" y="980.7" width="5.6" height="5.6" fill="#008400"/>
<line x1="96.5" y1="976.5" x2="96.5" y2="962.5" stroke="#840000" stroke-width="1.0"/>
<polyline points="92.5,969.5 96.5,962.5 100.5,969.5" stroke="#840000" stroke-width="1.0" fill="none"/>
<text transform="translate(96.64 956.77)" fill="#008484" stroke="#008484" font-size="11.44" text-anchor="middle" textLength="21.47" lengthAdjust="spacingAndGlyphs">+5V</text>
<polyline points="96.5,976.5 96.5,983.5" stroke="#008400" stroke-width="1.0" fill="none"/>
<line x1="96.5" y1="983.5" x2="96.5" y2="994.5" stroke="#840000" stroke-width="1.0"/>
<line x1="96.5" y1="1000.5" x2="96.5" y2="1011.5" stroke="#840000" stroke-width="1.0"/>
<line x1="87.5" y1="994.5" x2="105.5" y2="994.5" stroke="#840000" stroke-width="2.0"/>
<line x1="87.5" y1="1000.5" x2="105.5" y2="1000.5" stroke="#840000" stroke-width="2.0"/>
<line x1="96.5" y1="1011.5" x2="96.5" y2="1018.5" stroke="#840000" stroke-width="1.0"/>
<polygon points="89.5,1018.5 103.5,1018.5 96.5,1025.5" stroke="#840000" stroke-width="1.0" fill="none"/>
<text transform="translate(96.64 1040.74)" fill="#008484" stroke="#008484" font-size="11.44" text-anchor="middle" textLength="27.51" lengthAdjust="spacingAndGlyphs">GNDA</text>
<text transform="translate(72.8 998.09) rotate(-90)" fill="#008484" stroke="#008484" font-size="11.44" text-anchor="middle" textLength="13.75" lengthAdjust="spacingAndGlyphs">C3</text>
<text transform="translate(84.49 997.38) rotate(-90)" fill="#008484" stroke="#008484" font-size="11.44" text-anchor="middle" textLength="25.83" lengthAdjust="spacingAndGlyphs">10uF</text>
<polyline points="681.5,652.5 681.5,617.5 878.5,617.5 878.5,652.5" stroke="#840000" stroke-width="1.0" fill="none"/>
<rect x="695.5" y="638.5" width="169.0" height="85.0" fill="none" stroke="#840000" stroke-width="1" stroke-dasharray="11 8"/>
<line x1="780.5" y1="723.5" x2="780.5" y2="737.5" stroke="#840000" stroke-width="1.0"/>
<polyline points="780.5,737.5 780.5,744.5" stroke="#008400" stroke-width="1.0" fill="none"/>
<line x1="780.5" y1="744.5" x2="780.5" y2="751.5" stroke="#840000" stroke-width="1.0"/>
<polygon points="772.5,751.5 787.5,751.5 780.5,758.5" stroke="#840000" stroke-width="1.0" fill="none"/>
<text transform="translate(780.01 773.03)" fill="#008484" stroke="#008484" font-size="11.44" text-anchor="middle" textLength="27.51" lengthAdjust="spacingAndGlyphs">GNDA</text>
<text transform="translate(778.14 730.24) rotate(-90)" fill="#840000" stroke="#840000" font-size="11.44" text-anchor="middle" textLength="6.71" lengthAdjust="spacingAndGlyphs">1</text>
<text transform="translate(783.78 717.41) rotate(-90)" fill="#008484" stroke="#008484" font-size="11.44" textLength="30.86" lengthAdjust="spacingAndGlyphs">Shield</text>
<text transform="translate(883.85 675.53)" fill="#008484" stroke="#008484" font-size="11.44" textLength="12.08" lengthAdjust="spacingAndGlyphs">J2</text>
<text transform="translate(883.85 688.78)" fill="#008484" stroke="#008484" font-size="11.44" textLength="114" lengthAdjust="spacingAndGlyphs">RF_Shield_Two_Pieces</text>
<line x1="931.5" y1="869.5" x2="1529.5" y2="869.5" stroke="#840000" stroke-width="1.0"/>
<line x1="931.5" y1="869.5" x2="931.5" y2="1046.5" stroke="#840000" stroke-width="1.0"/>
<line x1="931.5" y1="955.5" x2="1529.5" y2="955.5" stroke="#840000" stroke-width="1.0"/>
<line x1="931.5" y1="988.5" x2="1529.5" y2="988.5" stroke="#840000" stroke-width="1.0"/>
<line x1="931.5" y1="1010.5" x2="1529.5" y2="1010.5" stroke="#840000" stroke-width="1.0"/>
<line x1="931.5" y1="1026.5" x2="1529.5" y2="1026.5" stroke="#840000" stroke-width="1.0"/>
<line x1="1042.5" y1="1010.5" x2="1042.5" y2="1026.5" stroke="#840000" stroke-width="1.0"/>
<line x1="1396.5" y1="1010.5" x2="1396.5" y2="1046.5" stroke="#840000" stroke-width="1.0"/>
<text transform="translate(937.6 900.4)" fill="#840000" stroke="#840000" font-size="11.2" textLength="86" lengthAdjust="spacingAndGlyphs">50 Ohm input</text>
<text transform="translate(937.6 917)" fill="#840000" stroke="#840000" font-size="11.2" textLength="124.5" lengthAdjust="spacingAndGlyphs">-50 dBm to 0 dBm</text>
<text transform="translate(937.6 933.6)" fill="#840000" stroke="#840000" font-size="11.2" textLength="116" lengthAdjust="spacingAndGlyphs">1 MHz - 500 MHz</text>
<text transform="translate(937.6 950.2)" fill="#840000" stroke="#840000" font-size="11.2" font-weight="bold" textLength="152.5" lengthAdjust="spacingAndGlyphs">Jeffrey Phillips Freeman</text>
<text transform="translate(937.6 966.8)" fill="#840000" stroke="#840000" font-size="11.2" textLength="52" lengthAdjust="spacingAndGlyphs">Sheet: /</text>
<text transform="translate(937.6 982.4)" fill="#840000" stroke="#840000" font-size="11.2" textLength="128.6" lengthAdjust="spacingAndGlyphs">File: rf-analyzer.sch</text>
<text transform="translate(937.6 1004.1)" fill="#840000" stroke="#840000" font-size="16.8" font-weight="bold" font-style="italic" textLength="230" lengthAdjust="spacingAndGlyphs">Title: ROES VNA SWR Meter</text>
<text transform="translate(937.6 1022.8)" fill="#840000" stroke="#840000" font-size="11.2" textLength="48.8" lengthAdjust="spacingAndGlyphs">Size: A4</text>
<text transform="translate(1060 1022.8)" fill="#840000" stroke="#840000" font-size="11.2" textLength="30" lengthAdjust="spacingAndGlyphs">Date:</text>
<text transform="translate(937.6 1038.8)" fill="#840000" stroke="#840000" font-size="11.2" textLength="158.7" lengthAdjust="spacingAndGlyphs">KiCad E.D.A.  kicad 5.1.6</text>
<text transform="translate(1408.5 1023.3)" fill="#840000" stroke="#840000" font-size="11.2" font-weight="bold" textLength="73" lengthAdjust="spacingAndGlyphs">Rev: v2-git</text>
<text transform="translate(1408.5 1039.5)" fill="#840000" stroke="#840000" font-size="11.2" textLength="43" lengthAdjust="spacingAndGlyphs">Id: 1/1</text>
</svg></body></html>
